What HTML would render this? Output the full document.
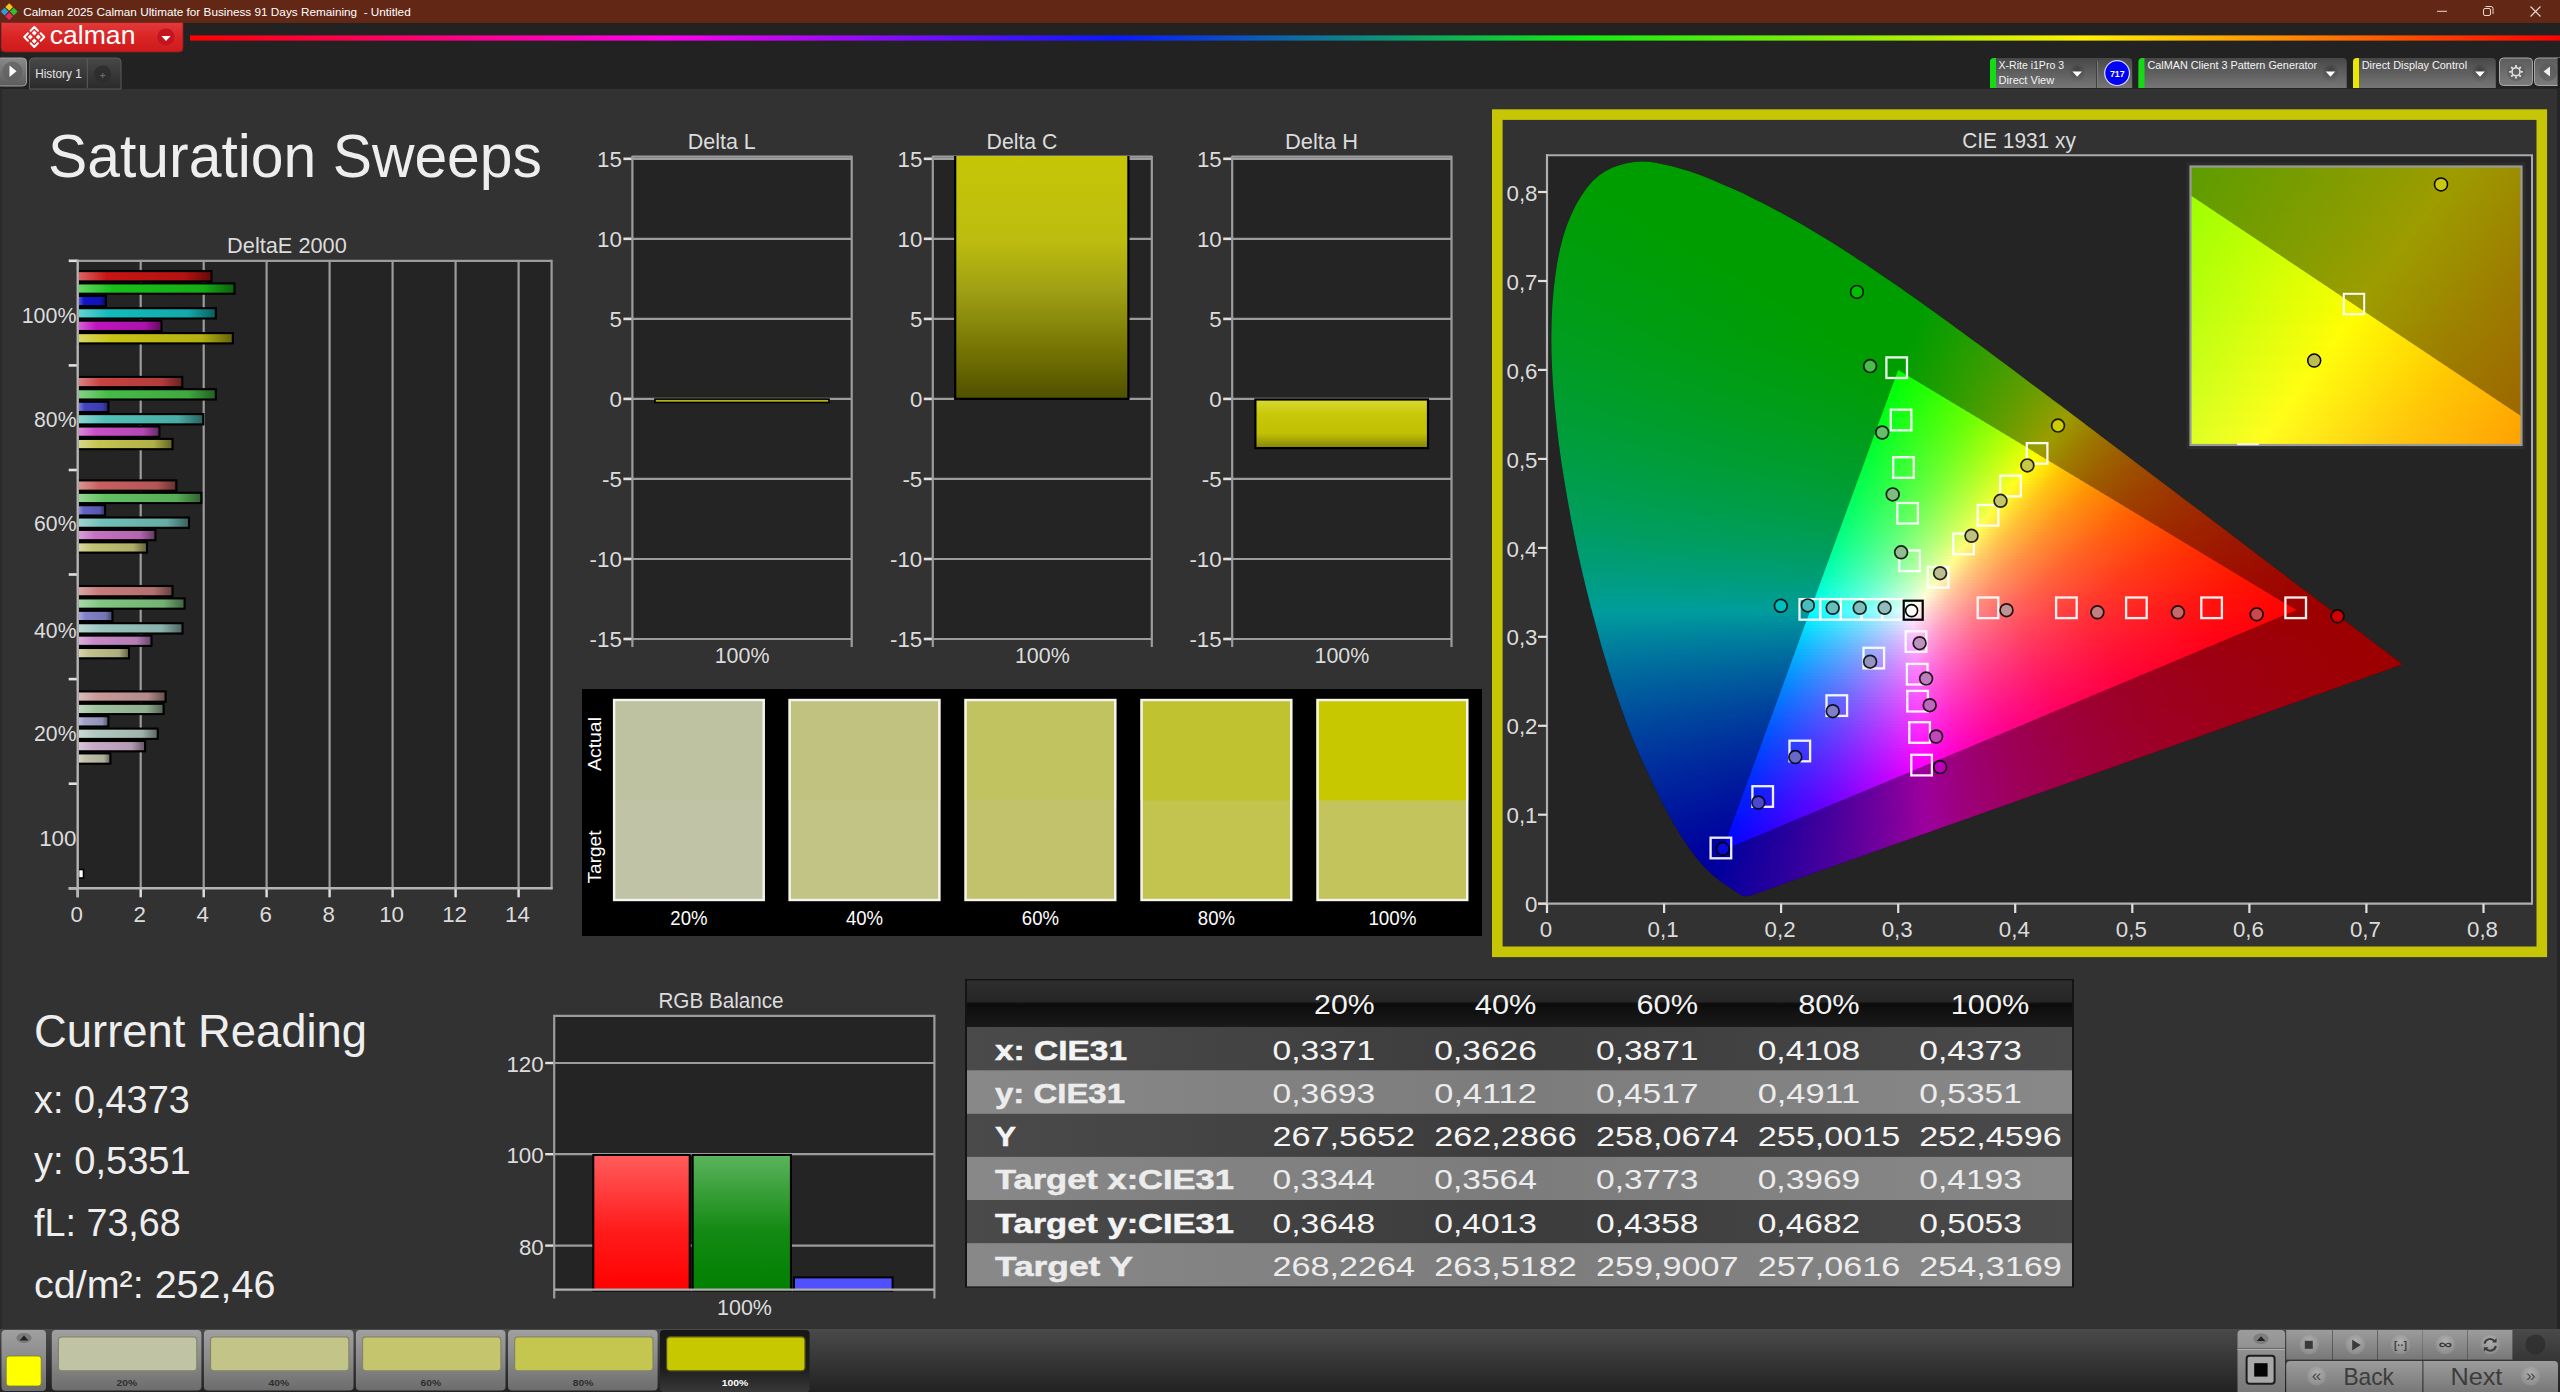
<!DOCTYPE html>
<html lang="en"><head><meta charset="utf-8"><title>Calman 2025 - Saturation Sweeps</title>
<style>
html,body{margin:0;padding:0;background:#323232;}
body{width:2560px;height:1392px;position:relative;overflow:hidden;font-family:"Liberation Sans",sans-serif;}
.abs{position:absolute;display:block;}
svg text{font-family:"Liberation Sans",sans-serif;}
</style></head><body>

<div class="abs" style="left:0;top:0;width:2560px;height:22.6px;background:#632716"></div>
<div class="abs" style="left:0;top:22.5px;width:2560px;height:66px;background:#222"></div>
<svg class="abs" style="left:0;top:0" width="2560" height="92" viewBox="0 0 2560 92">
<defs>
<linearGradient id="rb" x1="190" x2="2560" y1="0" y2="0" gradientUnits="userSpaceOnUse"><stop offset="0" stop-color="#ff0000"/><stop offset="0.2" stop-color="#ff00ee"/><stop offset="0.39" stop-color="#0a18ff"/><stop offset="0.588" stop-color="#10ec10"/><stop offset="0.8" stop-color="#fff000"/><stop offset="1" stop-color="#ff0000"/></linearGradient>
<linearGradient id="cb" x1="0" y1="0" x2="0" y2="1"><stop offset="0" stop-color="#e23a3a"/><stop offset="0.5" stop-color="#da2424"/><stop offset="1" stop-color="#cc1a1a"/></linearGradient>
<linearGradient id="gb" x1="0" y1="0" x2="0" y2="1"><stop offset="0" stop-color="#484848"/><stop offset="1" stop-color="#767676"/></linearGradient>
<linearGradient id="gb2" x1="0" y1="0" x2="0" y2="1"><stop offset="0" stop-color="#5c5c5c"/><stop offset="1" stop-color="#7c7c7c"/></linearGradient>
<linearGradient id="tb" x1="0" y1="0" x2="0" y2="1"><stop offset="0" stop-color="#484848"/><stop offset="1" stop-color="#2a2a2a"/></linearGradient>
<linearGradient id="pb" x1="0" y1="0" x2="0" y2="1"><stop offset="0" stop-color="#8a8a8a"/><stop offset="1" stop-color="#5c5c5c"/></linearGradient>
<radialGradient id="dc" cx="0.5" cy="0.3" r="0.7"><stop offset="0" stop-color="#3c3c3c"/><stop offset="1" stop-color="#6a6a6a"/></radialGradient>
</defs>
<rect x="6.5" y="4.3" width="5.4" height="5.4" fill="#f0c818" transform="rotate(45 9.2 7.0)"/>
<rect x="1.9" y="8.9" width="5.4" height="5.4" fill="#28a0e8" transform="rotate(45 4.6 11.6)"/>
<rect x="11.1" y="8.9" width="5.4" height="5.4" fill="#30c030" transform="rotate(45 13.8 11.6)"/>
<rect x="6.5" y="13.5" width="5.4" height="5.4" fill="#e82c60" transform="rotate(45 9.2 16.2)"/>
<text x="23.2" y="16.2" font-size="11.60" fill="#fff" textLength="387.5" lengthAdjust="spacingAndGlyphs" xml:space="preserve">Calman 2025 Calman Ultimate for Business 91 Days Remaining  - Untitled</text>
<path d="M2437 11.3h10" stroke="#e8d8d0" stroke-width="1" fill="none"/>
<rect x="2483.5" y="8.5" width="7" height="7" rx="1.5" fill="none" stroke="#e8d8d0" stroke-width="1"/><path d="M2485.5 6.5h5.5a2 2 0 0 1 2 2v5.5" fill="none" stroke="#e8d8d0" stroke-width="1"/>
<path d="M2530.5 6.5l10 10M2540.5 6.5l-10 10" stroke="#e8d8d0" stroke-width="1.1" fill="none"/>
<path d="M1 22.5H183V48a4 4 0 0 1-4 4H5a4 4 0 0 1-4-4Z" fill="url(#cb)" stroke="#8a2020" stroke-width="0.8"/>
<rect x="32.45" y="31.15" width="3.7" height="3.7" rx="0.5" fill="#fff" transform="rotate(45 34.30 33.00)"/>
<rect x="28.45" y="35.15" width="3.7" height="3.7" rx="0.5" fill="#fff" transform="rotate(45 30.30 37.00)"/>
<rect x="36.45" y="35.15" width="3.7" height="3.7" rx="0.5" fill="#fff" transform="rotate(45 38.30 37.00)"/>
<rect x="32.45" y="39.15" width="3.7" height="3.7" rx="0.5" fill="#fff" transform="rotate(45 34.30 41.00)"/>
<path d="M30.65 30.65l3.65 -3.65l3.65 3.65M30.65 43.35l3.65 3.65l3.65 -3.65M27.95 33.35l-3.65 3.65l3.65 3.65M40.65 33.35l3.65 3.65l-3.65 3.65" fill="none" stroke="#fff" stroke-width="2.1" stroke-linecap="round" stroke-linejoin="round"/>
<text x="49.8" y="44.3" font-size="25.50" fill="#fff" textLength="85.6" lengthAdjust="spacingAndGlyphs" style="letter-spacing:0">calman</text>
<circle cx="166" cy="37.2" r="9.2" fill="#c41420"/><circle cx="166" cy="37.2" r="9.2" fill="none" stroke="#e85050" stroke-width="0.6" opacity="0.5"/><path d="M161.4 36h9.2l-4.6 5z" fill="#fff"/>
<rect x="190" y="35.4" width="2370" height="5.2" fill="url(#rb)"/>
<rect x="-3" y="58" width="29.5" height="28" rx="4" fill="url(#pb)" stroke="#a0a0a0" stroke-width="1"/><circle cx="12.5" cy="71.5" r="10" fill="#606060" opacity="0.7"/><path d="M9.5 65.5v11.5l7-5.7z" fill="#fff"/>
<path d="M29.5 89V62a4 4 0 0 1 4-4H117a4 4 0 0 1 4 4V89Z" fill="url(#tb)" stroke="#5a5a5a" stroke-width="1"/><path d="M87.3 59V88" stroke="#5c5c5c" stroke-width="1"/>
<circle cx="102.6" cy="74" r="8.5" fill="#2c2c2c" opacity="0.8"/><path d="M100.2 75.6h5.2M102.8 73v5.2" stroke="#707070" stroke-width="1"/>
<text x="35.2" y="78.0" font-size="12.20" fill="#e4e4e4" textLength="46.6" lengthAdjust="spacingAndGlyphs">History 1</text>
<path d="M1990.0 88V62a4 4 0 0 1 4-4H2128.2a4 4 0 0 1 4 4V88Z" fill="url(#gb)"/><path d="M1990.0 88V62a4 4 0 0 1 4-4h2V88Z" fill="#14dc14"/>
<text x="1998.6" y="69.4" font-size="10.40" fill="#f4f4f4" textLength="65.4" lengthAdjust="spacingAndGlyphs">X-Rite i1Pro 3</text>
<text x="1998.6" y="83.8" font-size="10.40" fill="#f4f4f4" textLength="55.6" lengthAdjust="spacingAndGlyphs">Direct View</text>
<circle cx="2077.2" cy="72.8" r="9" fill="url(#dc)" opacity="0.85"/><path d="M2072.4 71.4h9.6l-4.8 5.4z" fill="#fff"/>
<path d="M2096.6 61V88" stroke="#3c3c3c" stroke-width="1"/><path d="M2097.6 61V88" stroke="#7c7c7c" stroke-width="1"/>
<circle cx="2117.1" cy="73.1" r="12.4" fill="#0000f8" stroke="#d8d8ff" stroke-width="1.2"/>
<text x="2109.9" y="76.6" font-size="9.60" fill="#fff" font-weight="bold" textLength="14.8" lengthAdjust="spacingAndGlyphs">717</text>
<path d="M2138.5 88V62a4 4 0 0 1 4-4H2342.7a4 4 0 0 1 4 4V88Z" fill="url(#gb)"/><path d="M2138.5 88V62a4 4 0 0 1 4-4h2V88Z" fill="#14dc14"/>
<text x="2147.4" y="69.4" font-size="10.40" fill="#f4f4f4" textLength="169.8" lengthAdjust="spacingAndGlyphs">CalMAN Client 3 Pattern Generator</text>
<circle cx="2330.5" cy="72.8" r="9" fill="url(#dc)" opacity="0.85"/><path d="M2325.7 71.4h9.6l-4.8 5.4z" fill="#fff"/>
<path d="M2353.0 88V62a4 4 0 0 1 4-4H2491.8a4 4 0 0 1 4 4V88Z" fill="url(#gb)"/><path d="M2353.0 88V62a4 4 0 0 1 4-4h2V88Z" fill="#e8e800"/>
<text x="2361.7" y="69.4" font-size="10.40" fill="#f4f4f4" textLength="105.4" lengthAdjust="spacingAndGlyphs">Direct Display Control</text>
<circle cx="2480.0" cy="72.8" r="9" fill="url(#dc)" opacity="0.85"/><path d="M2475.2 71.4h9.6l-4.8 5.4z" fill="#fff"/>
<rect x="2499.5" y="58" width="33" height="27.5" rx="4" fill="url(#gb2)" stroke="#a8a8a8" stroke-width="1"/>
<circle cx="2516" cy="72" r="9" fill="#585858" opacity="0.6"/>
<circle cx="2516" cy="71.8" r="4" fill="none" stroke="#e4e4e4" stroke-width="1.6"/>
<path d="M2520.60 71.80L2522.80 71.80" stroke="#e4e4e4" stroke-width="1.8"/>
<path d="M2519.25 75.05L2520.81 76.61" stroke="#e4e4e4" stroke-width="1.8"/>
<path d="M2516.00 76.40L2516.00 78.60" stroke="#e4e4e4" stroke-width="1.8"/>
<path d="M2512.75 75.05L2511.19 76.61" stroke="#e4e4e4" stroke-width="1.8"/>
<path d="M2511.40 71.80L2509.20 71.80" stroke="#e4e4e4" stroke-width="1.8"/>
<path d="M2512.75 68.55L2511.19 66.99" stroke="#e4e4e4" stroke-width="1.8"/>
<path d="M2516.00 67.20L2516.00 65.00" stroke="#e4e4e4" stroke-width="1.8"/>
<path d="M2519.25 68.55L2520.81 66.99" stroke="#e4e4e4" stroke-width="1.8"/>
<rect x="2534.5" y="58" width="33" height="27.5" rx="4" fill="url(#gb2)" stroke="#a8a8a8" stroke-width="1"/>
<circle cx="2548" cy="72" r="9" fill="#585858" opacity="0.6"/><path d="M2550 66.6v10l-6.4-5z" fill="#f0f0f0"/>
<rect x="2557.6" y="58" width="3" height="30" fill="#1c1c1c"/>
</svg>
<div class="abs" style="left:2556.5px;top:88px;width:3.5px;height:1242px;background:#252525"></div>
<div class="abs" style="left:0;top:88px;width:1.5px;height:1242px;background:#2a2a2a"></div>
<svg class="abs de" style="left:0px;top:225px" width="575" height="720" viewBox="0 225 575 720">
<defs>
<linearGradient id="db0"><stop offset="0" stop-color="#db6666"/><stop offset="0.22" stop-color="#c81414"/><stop offset="0.8" stop-color="#b41212"/><stop offset="1" stop-color="#640a0a"/></linearGradient>
<linearGradient id="db1"><stop offset="0" stop-color="#68d668"/><stop offset="0.22" stop-color="#18c018"/><stop offset="0.8" stop-color="#15ac15"/><stop offset="1" stop-color="#0c600c"/></linearGradient>
<linearGradient id="db2"><stop offset="0" stop-color="#6666db"/><stop offset="0.22" stop-color="#1414c8"/><stop offset="0.8" stop-color="#1212b4"/><stop offset="1" stop-color="#0a0a64"/></linearGradient>
<linearGradient id="db3"><stop offset="0" stop-color="#66d3d3"/><stop offset="0.22" stop-color="#14bcbc"/><stop offset="0.8" stop-color="#12a9a9"/><stop offset="1" stop-color="#0a5e5e"/></linearGradient>
<linearGradient id="db4"><stop offset="0" stop-color="#d666d6"/><stop offset="0.22" stop-color="#c014c0"/><stop offset="0.8" stop-color="#ac12ac"/><stop offset="1" stop-color="#600a60"/></linearGradient>
<linearGradient id="db5"><stop offset="0" stop-color="#dbd866"/><stop offset="0.22" stop-color="#c8c414"/><stop offset="0.8" stop-color="#b4b012"/><stop offset="1" stop-color="#64620a"/></linearGradient>
<linearGradient id="db6"><stop offset="0" stop-color="#db8484"/><stop offset="0.22" stop-color="#c84242"/><stop offset="0.8" stop-color="#b43b3b"/><stop offset="1" stop-color="#642121"/></linearGradient>
<linearGradient id="db7"><stop offset="0" stop-color="#86d386"/><stop offset="0.22" stop-color="#46bc46"/><stop offset="0.8" stop-color="#3fa93f"/><stop offset="1" stop-color="#235e23"/></linearGradient>
<linearGradient id="db8"><stop offset="0" stop-color="#8585d8"/><stop offset="0.22" stop-color="#4444c4"/><stop offset="0.8" stop-color="#3d3db0"/><stop offset="1" stop-color="#222262"/></linearGradient>
<linearGradient id="db9"><stop offset="0" stop-color="#8ed6d0"/><stop offset="0.22" stop-color="#52c0b8"/><stop offset="0.8" stop-color="#49aca5"/><stop offset="1" stop-color="#29605c"/></linearGradient>
<linearGradient id="db10"><stop offset="0" stop-color="#db8ddb"/><stop offset="0.22" stop-color="#c850c8"/><stop offset="0.8" stop-color="#b448b4"/><stop offset="1" stop-color="#642864"/></linearGradient>
<linearGradient id="db11"><stop offset="0" stop-color="#d8d88d"/><stop offset="0.22" stop-color="#c4c450"/><stop offset="0.8" stop-color="#b0b048"/><stop offset="1" stop-color="#626228"/></linearGradient>
<linearGradient id="db12"><stop offset="0" stop-color="#db9797"/><stop offset="0.22" stop-color="#c86060"/><stop offset="0.8" stop-color="#b45656"/><stop offset="1" stop-color="#643030"/></linearGradient>
<linearGradient id="db13"><stop offset="0" stop-color="#98d698"/><stop offset="0.22" stop-color="#62c062"/><stop offset="0.8" stop-color="#58ac58"/><stop offset="1" stop-color="#316031"/></linearGradient>
<linearGradient id="db14"><stop offset="0" stop-color="#9898d8"/><stop offset="0.22" stop-color="#6262c4"/><stop offset="0.8" stop-color="#5858b0"/><stop offset="1" stop-color="#313162"/></linearGradient>
<linearGradient id="db15"><stop offset="0" stop-color="#a3d6d0"/><stop offset="0.22" stop-color="#72c0b8"/><stop offset="0.8" stop-color="#66aca5"/><stop offset="1" stop-color="#39605c"/></linearGradient>
<linearGradient id="db16"><stop offset="0" stop-color="#d9a3d7"/><stop offset="0.22" stop-color="#c672c2"/><stop offset="0.8" stop-color="#b266ae"/><stop offset="1" stop-color="#633961"/></linearGradient>
<linearGradient id="db17"><stop offset="0" stop-color="#d7d7a3"/><stop offset="0.22" stop-color="#c2c272"/><stop offset="0.8" stop-color="#aeae66"/><stop offset="1" stop-color="#616139"/></linearGradient>
<linearGradient id="db18"><stop offset="0" stop-color="#dba9a9"/><stop offset="0.22" stop-color="#c87c7c"/><stop offset="0.8" stop-color="#b46f6f"/><stop offset="1" stop-color="#643e3e"/></linearGradient>
<linearGradient id="db19"><stop offset="0" stop-color="#acd9ac"/><stop offset="0.22" stop-color="#80c680"/><stop offset="0.8" stop-color="#73b273"/><stop offset="1" stop-color="#406340"/></linearGradient>
<linearGradient id="db20"><stop offset="0" stop-color="#adaddb"/><stop offset="0.22" stop-color="#8282c8"/><stop offset="0.8" stop-color="#7575b4"/><stop offset="1" stop-color="#414164"/></linearGradient>
<linearGradient id="db21"><stop offset="0" stop-color="#bdd9d6"/><stop offset="0.22" stop-color="#9ac6c0"/><stop offset="0.8" stop-color="#8ab2ac"/><stop offset="1" stop-color="#4d6360"/></linearGradient>
<linearGradient id="db22"><stop offset="0" stop-color="#dbb2db"/><stop offset="0.22" stop-color="#c88ac8"/><stop offset="0.8" stop-color="#b47cb4"/><stop offset="1" stop-color="#644564"/></linearGradient>
<linearGradient id="db23"><stop offset="0" stop-color="#d7d7b4"/><stop offset="0.22" stop-color="#c2c28c"/><stop offset="0.8" stop-color="#aeae7e"/><stop offset="1" stop-color="#616146"/></linearGradient>
<linearGradient id="db24"><stop offset="0" stop-color="#dbbdbd"/><stop offset="0.22" stop-color="#c89a9a"/><stop offset="0.8" stop-color="#b48a8a"/><stop offset="1" stop-color="#644d4d"/></linearGradient>
<linearGradient id="db25"><stop offset="0" stop-color="#c1d7c1"/><stop offset="0.22" stop-color="#a0c2a0"/><stop offset="0.8" stop-color="#90ae90"/><stop offset="1" stop-color="#506150"/></linearGradient>
<linearGradient id="db26"><stop offset="0" stop-color="#c2c2db"/><stop offset="0.22" stop-color="#a2a2c8"/><stop offset="0.8" stop-color="#9191b4"/><stop offset="1" stop-color="#515164"/></linearGradient>
<linearGradient id="db27"><stop offset="0" stop-color="#ccdbd7"/><stop offset="0.22" stop-color="#b2c8c2"/><stop offset="0.8" stop-color="#a0b4ae"/><stop offset="1" stop-color="#596461"/></linearGradient>
<linearGradient id="db28"><stop offset="0" stop-color="#dbc7db"/><stop offset="0.22" stop-color="#c8aac8"/><stop offset="0.8" stop-color="#b499b4"/><stop offset="1" stop-color="#645564"/></linearGradient>
<linearGradient id="db29"><stop offset="0" stop-color="#d7d7c7"/><stop offset="0.22" stop-color="#c2c2aa"/><stop offset="0.8" stop-color="#aeae99"/><stop offset="1" stop-color="#616155"/></linearGradient>
</defs>
<rect x="77.7" y="260.8" width="473.9" height="627.5" fill="#242424" />
<line x1="140.7" y1="260.8" x2="140.7" y2="888.3" stroke="#9c9c9c" stroke-width="2.2"/>
<line x1="203.7" y1="260.8" x2="203.7" y2="888.3" stroke="#9c9c9c" stroke-width="2.2"/>
<line x1="266.6" y1="260.8" x2="266.6" y2="888.3" stroke="#9c9c9c" stroke-width="2.2"/>
<line x1="329.6" y1="260.8" x2="329.6" y2="888.3" stroke="#9c9c9c" stroke-width="2.2"/>
<line x1="392.6" y1="260.8" x2="392.6" y2="888.3" stroke="#9c9c9c" stroke-width="2.2"/>
<line x1="455.6" y1="260.8" x2="455.6" y2="888.3" stroke="#9c9c9c" stroke-width="2.2"/>
<line x1="518.6" y1="260.8" x2="518.6" y2="888.3" stroke="#9c9c9c" stroke-width="2.2"/>
<line x1="77.7" y1="260.8" x2="551.6" y2="260.8" stroke="#9c9c9c" stroke-width="2.2"/>
<line x1="551.6" y1="259.8" x2="551.6" y2="889.3" stroke="#9c9c9c" stroke-width="2.2"/>
<line x1="68.7" y1="260.8" x2="77.7" y2="260.8" stroke="#e0e0e0" stroke-width="2.6"/>
<line x1="68.7" y1="365.4" x2="77.7" y2="365.4" stroke="#e0e0e0" stroke-width="2.6"/>
<line x1="68.7" y1="470.0" x2="77.7" y2="470.0" stroke="#e0e0e0" stroke-width="2.6"/>
<line x1="68.7" y1="574.5" x2="77.7" y2="574.5" stroke="#e0e0e0" stroke-width="2.6"/>
<line x1="68.7" y1="679.1" x2="77.7" y2="679.1" stroke="#e0e0e0" stroke-width="2.6"/>
<line x1="68.7" y1="783.7" x2="77.7" y2="783.7" stroke="#e0e0e0" stroke-width="2.6"/>
<line x1="68.7" y1="888.3" x2="77.7" y2="888.3" stroke="#e0e0e0" stroke-width="2.6"/>
<line x1="77.7" y1="888.3" x2="77.7" y2="897.3" stroke="#e0e0e0" stroke-width="2.4"/>
<text x="70.5" y="921.5" font-size="22.93" fill="#dcdcdc" textLength="12.4" lengthAdjust="spacingAndGlyphs">0</text>
<line x1="140.7" y1="888.3" x2="140.7" y2="897.3" stroke="#e0e0e0" stroke-width="2.4"/>
<text x="133.5" y="921.5" font-size="22.93" fill="#dcdcdc" textLength="12.4" lengthAdjust="spacingAndGlyphs">2</text>
<line x1="203.7" y1="888.3" x2="203.7" y2="897.3" stroke="#e0e0e0" stroke-width="2.4"/>
<text x="196.5" y="921.5" font-size="22.93" fill="#dcdcdc" textLength="12.4" lengthAdjust="spacingAndGlyphs">4</text>
<line x1="266.6" y1="888.3" x2="266.6" y2="897.3" stroke="#e0e0e0" stroke-width="2.4"/>
<text x="259.4" y="921.5" font-size="22.93" fill="#dcdcdc" textLength="12.4" lengthAdjust="spacingAndGlyphs">6</text>
<line x1="329.6" y1="888.3" x2="329.6" y2="897.3" stroke="#e0e0e0" stroke-width="2.4"/>
<text x="322.4" y="921.5" font-size="22.93" fill="#dcdcdc" textLength="12.4" lengthAdjust="spacingAndGlyphs">8</text>
<line x1="392.6" y1="888.3" x2="392.6" y2="897.3" stroke="#e0e0e0" stroke-width="2.4"/>
<text x="379.2" y="921.5" font-size="22.93" fill="#dcdcdc" textLength="24.8" lengthAdjust="spacingAndGlyphs">10</text>
<line x1="455.6" y1="888.3" x2="455.6" y2="897.3" stroke="#e0e0e0" stroke-width="2.4"/>
<text x="442.2" y="921.5" font-size="22.93" fill="#dcdcdc" textLength="24.8" lengthAdjust="spacingAndGlyphs">12</text>
<line x1="518.6" y1="888.3" x2="518.6" y2="897.3" stroke="#e0e0e0" stroke-width="2.4"/>
<text x="505.1" y="921.5" font-size="22.93" fill="#dcdcdc" textLength="24.8" lengthAdjust="spacingAndGlyphs">14</text>
<rect x="77.7" y="271.1" width="133.8" height="10.3" fill="url(#db0)" stroke="#000" stroke-width="2.1"/>
<rect x="77.7" y="283.4" width="156.8" height="10.3" fill="url(#db1)" stroke="#000" stroke-width="2.1"/>
<rect x="77.7" y="295.9" width="28.2" height="10.3" fill="url(#db2)" stroke="#000" stroke-width="2.1"/>
<rect x="77.7" y="308.2" width="138.1" height="10.3" fill="url(#db3)" stroke="#000" stroke-width="2.1"/>
<rect x="77.7" y="320.7" width="83.8" height="10.3" fill="url(#db4)" stroke="#000" stroke-width="2.1"/>
<rect x="77.7" y="333.1" width="155.1" height="10.3" fill="url(#db5)" stroke="#000" stroke-width="2.1"/>
<rect x="77.7" y="376.9" width="104.6" height="10.3" fill="url(#db6)" stroke="#000" stroke-width="2.1"/>
<rect x="77.7" y="389.2" width="138.1" height="10.3" fill="url(#db7)" stroke="#000" stroke-width="2.1"/>
<rect x="77.7" y="401.7" width="30.7" height="10.3" fill="url(#db8)" stroke="#000" stroke-width="2.1"/>
<rect x="77.7" y="414.1" width="125.6" height="10.3" fill="url(#db9)" stroke="#000" stroke-width="2.1"/>
<rect x="77.7" y="426.5" width="81.7" height="10.3" fill="url(#db10)" stroke="#000" stroke-width="2.1"/>
<rect x="77.7" y="438.9" width="94.8" height="10.3" fill="url(#db11)" stroke="#000" stroke-width="2.1"/>
<rect x="77.7" y="480.4" width="98.6" height="10.3" fill="url(#db12)" stroke="#000" stroke-width="2.1"/>
<rect x="77.7" y="492.8" width="123.6" height="10.3" fill="url(#db13)" stroke="#000" stroke-width="2.1"/>
<rect x="77.7" y="505.2" width="27.4" height="10.3" fill="url(#db14)" stroke="#000" stroke-width="2.1"/>
<rect x="77.7" y="517.5" width="111.3" height="10.3" fill="url(#db15)" stroke="#000" stroke-width="2.1"/>
<rect x="77.7" y="529.9" width="77.7" height="10.3" fill="url(#db16)" stroke="#000" stroke-width="2.1"/>
<rect x="77.7" y="542.3" width="69.3" height="10.3" fill="url(#db17)" stroke="#000" stroke-width="2.1"/>
<rect x="77.7" y="586.0" width="94.8" height="10.3" fill="url(#db18)" stroke="#000" stroke-width="2.1"/>
<rect x="77.7" y="598.4" width="106.9" height="10.3" fill="url(#db19)" stroke="#000" stroke-width="2.1"/>
<rect x="77.7" y="610.8" width="34.8" height="10.3" fill="url(#db20)" stroke="#000" stroke-width="2.1"/>
<rect x="77.7" y="623.2" width="104.8" height="10.3" fill="url(#db21)" stroke="#000" stroke-width="2.1"/>
<rect x="77.7" y="635.6" width="73.8" height="10.3" fill="url(#db22)" stroke="#000" stroke-width="2.1"/>
<rect x="77.7" y="648.0" width="51.3" height="10.3" fill="url(#db23)" stroke="#000" stroke-width="2.1"/>
<rect x="77.7" y="691.4" width="87.9" height="10.3" fill="url(#db24)" stroke="#000" stroke-width="2.1"/>
<rect x="77.7" y="703.8" width="85.9" height="10.3" fill="url(#db25)" stroke="#000" stroke-width="2.1"/>
<rect x="77.7" y="716.2" width="30.7" height="10.3" fill="url(#db26)" stroke="#000" stroke-width="2.1"/>
<rect x="77.7" y="728.6" width="80.1" height="10.3" fill="url(#db27)" stroke="#000" stroke-width="2.1"/>
<rect x="77.7" y="741.0" width="67.4" height="10.3" fill="url(#db28)" stroke="#000" stroke-width="2.1"/>
<rect x="77.7" y="753.4" width="32.7" height="10.3" fill="url(#db29)" stroke="#000" stroke-width="2.1"/>
<rect x="78.5" y="869.5" width="5" height="8.5" fill="#fff" stroke="#000" stroke-width="1.6"/>
<line x1="77.7" y1="259.8" x2="77.7" y2="897.3" stroke="#b4b4b4" stroke-width="2.4"/>
<line x1="68.7" y1="888.3" x2="552.6" y2="888.3" stroke="#b4b4b4" stroke-width="2.4"/>
<text x="21.7" y="322.8" font-size="22.93" fill="#dcdcdc" textLength="54.8" lengthAdjust="spacingAndGlyphs">100%</text>
<text x="34.1" y="427.0" font-size="22.93" fill="#dcdcdc" textLength="42.4" lengthAdjust="spacingAndGlyphs">80%</text>
<text x="34.1" y="531.4" font-size="22.93" fill="#dcdcdc" textLength="42.4" lengthAdjust="spacingAndGlyphs">60%</text>
<text x="34.1" y="637.6" font-size="22.93" fill="#dcdcdc" textLength="42.4" lengthAdjust="spacingAndGlyphs">40%</text>
<text x="34.1" y="740.6" font-size="22.93" fill="#dcdcdc" textLength="42.4" lengthAdjust="spacingAndGlyphs">20%</text>
<text x="39.2" y="846.0" font-size="22.93" fill="#dcdcdc" textLength="37.3" lengthAdjust="spacingAndGlyphs">100</text>
<text x="227.1" y="252.6" font-size="22.34" fill="#dcdcdc" textLength="119.7" lengthAdjust="spacingAndGlyphs">DeltaE 2000</text>
</svg>
<svg class="abs lch" style="left:575px;top:120px" width="910" height="560" viewBox="575 120 910 560">
<defs><linearGradient id="gC" x1="0" y1="0" x2="0" y2="1"><stop offset="0" stop-color="#c6c606"/><stop offset="0.35" stop-color="#bcbc10"/><stop offset="0.55" stop-color="#a0a014"/><stop offset="0.8" stop-color="#747404"/><stop offset="1" stop-color="#505000"/></linearGradient><linearGradient id="gH" x1="0" y1="0" x2="0" y2="1"><stop offset="0" stop-color="#d8d838"/><stop offset="0.3" stop-color="#c8c808"/><stop offset="0.7" stop-color="#c0c004"/><stop offset="1" stop-color="#84840a"/></linearGradient></defs>
<rect x="632.4" y="158.8" width="219.3" height="480.2" fill="#242424" />
<line x1="632.4" y1="158.8" x2="851.7" y2="158.8" stroke="#9c9c9c" stroke-width="2.2"/>
<line x1="623.4" y1="158.8" x2="632.4" y2="158.8" stroke="#e0e0e0" stroke-width="2.6"/>
<text x="597.1" y="167.2" font-size="22.93" fill="#dcdcdc" textLength="24.8" lengthAdjust="spacingAndGlyphs">15</text>
<line x1="632.4" y1="238.8" x2="851.7" y2="238.8" stroke="#9c9c9c" stroke-width="2.2"/>
<line x1="623.4" y1="238.8" x2="632.4" y2="238.8" stroke="#e0e0e0" stroke-width="2.6"/>
<text x="597.1" y="247.2" font-size="22.93" fill="#dcdcdc" textLength="24.8" lengthAdjust="spacingAndGlyphs">10</text>
<line x1="632.4" y1="318.9" x2="851.7" y2="318.9" stroke="#9c9c9c" stroke-width="2.2"/>
<line x1="623.4" y1="318.9" x2="632.4" y2="318.9" stroke="#e0e0e0" stroke-width="2.6"/>
<text x="609.5" y="327.3" font-size="22.93" fill="#dcdcdc" textLength="12.4" lengthAdjust="spacingAndGlyphs">5</text>
<line x1="632.4" y1="398.9" x2="851.7" y2="398.9" stroke="#9c9c9c" stroke-width="2.2"/>
<line x1="623.4" y1="398.9" x2="632.4" y2="398.9" stroke="#e0e0e0" stroke-width="2.6"/>
<text x="609.5" y="407.3" font-size="22.93" fill="#dcdcdc" textLength="12.4" lengthAdjust="spacingAndGlyphs">0</text>
<line x1="632.4" y1="478.9" x2="851.7" y2="478.9" stroke="#9c9c9c" stroke-width="2.2"/>
<line x1="623.4" y1="478.9" x2="632.4" y2="478.9" stroke="#e0e0e0" stroke-width="2.6"/>
<text x="602.0" y="487.3" font-size="22.93" fill="#dcdcdc" textLength="19.9" lengthAdjust="spacingAndGlyphs">-5</text>
<line x1="632.4" y1="559.0" x2="851.7" y2="559.0" stroke="#9c9c9c" stroke-width="2.2"/>
<line x1="623.4" y1="559.0" x2="632.4" y2="559.0" stroke="#e0e0e0" stroke-width="2.6"/>
<text x="589.6" y="567.4" font-size="22.93" fill="#dcdcdc" textLength="32.3" lengthAdjust="spacingAndGlyphs">-10</text>
<line x1="632.4" y1="639.0" x2="851.7" y2="639.0" stroke="#9c9c9c" stroke-width="2.2"/>
<line x1="623.4" y1="639.0" x2="632.4" y2="639.0" stroke="#e0e0e0" stroke-width="2.6"/>
<text x="589.6" y="647.4" font-size="22.93" fill="#dcdcdc" textLength="32.3" lengthAdjust="spacingAndGlyphs">-15</text>
<line x1="632.4" y1="156.6" x2="851.7" y2="156.6" stroke="#9c9c9c" stroke-width="2.2"/>
<line x1="632.4" y1="155.8" x2="632.4" y2="647.0" stroke="#9c9c9c" stroke-width="2.2"/>
<line x1="851.7" y1="155.8" x2="851.7" y2="647.0" stroke="#9c9c9c" stroke-width="2.2"/>
<text x="687.7" y="149.2" font-size="22.25" fill="#dcdcdc" textLength="68.1" lengthAdjust="spacingAndGlyphs">Delta L</text>
<text x="714.7" y="663.0" font-size="22.93" fill="#dcdcdc" textLength="54.8" lengthAdjust="spacingAndGlyphs">100%</text>
<rect x="932.8" y="158.8" width="219.0" height="480.2" fill="#242424" />
<line x1="932.8" y1="158.8" x2="1151.8" y2="158.8" stroke="#9c9c9c" stroke-width="2.2"/>
<line x1="923.8" y1="158.8" x2="932.8" y2="158.8" stroke="#e0e0e0" stroke-width="2.6"/>
<text x="897.5" y="167.2" font-size="22.93" fill="#dcdcdc" textLength="24.8" lengthAdjust="spacingAndGlyphs">15</text>
<line x1="932.8" y1="238.8" x2="1151.8" y2="238.8" stroke="#9c9c9c" stroke-width="2.2"/>
<line x1="923.8" y1="238.8" x2="932.8" y2="238.8" stroke="#e0e0e0" stroke-width="2.6"/>
<text x="897.5" y="247.2" font-size="22.93" fill="#dcdcdc" textLength="24.8" lengthAdjust="spacingAndGlyphs">10</text>
<line x1="932.8" y1="318.9" x2="1151.8" y2="318.9" stroke="#9c9c9c" stroke-width="2.2"/>
<line x1="923.8" y1="318.9" x2="932.8" y2="318.9" stroke="#e0e0e0" stroke-width="2.6"/>
<text x="909.9" y="327.3" font-size="22.93" fill="#dcdcdc" textLength="12.4" lengthAdjust="spacingAndGlyphs">5</text>
<line x1="932.8" y1="398.9" x2="1151.8" y2="398.9" stroke="#9c9c9c" stroke-width="2.2"/>
<line x1="923.8" y1="398.9" x2="932.8" y2="398.9" stroke="#e0e0e0" stroke-width="2.6"/>
<text x="909.9" y="407.3" font-size="22.93" fill="#dcdcdc" textLength="12.4" lengthAdjust="spacingAndGlyphs">0</text>
<line x1="932.8" y1="478.9" x2="1151.8" y2="478.9" stroke="#9c9c9c" stroke-width="2.2"/>
<line x1="923.8" y1="478.9" x2="932.8" y2="478.9" stroke="#e0e0e0" stroke-width="2.6"/>
<text x="902.4" y="487.3" font-size="22.93" fill="#dcdcdc" textLength="19.9" lengthAdjust="spacingAndGlyphs">-5</text>
<line x1="932.8" y1="559.0" x2="1151.8" y2="559.0" stroke="#9c9c9c" stroke-width="2.2"/>
<line x1="923.8" y1="559.0" x2="932.8" y2="559.0" stroke="#e0e0e0" stroke-width="2.6"/>
<text x="890.0" y="567.4" font-size="22.93" fill="#dcdcdc" textLength="32.3" lengthAdjust="spacingAndGlyphs">-10</text>
<line x1="932.8" y1="639.0" x2="1151.8" y2="639.0" stroke="#9c9c9c" stroke-width="2.2"/>
<line x1="923.8" y1="639.0" x2="932.8" y2="639.0" stroke="#e0e0e0" stroke-width="2.6"/>
<text x="890.0" y="647.4" font-size="22.93" fill="#dcdcdc" textLength="32.3" lengthAdjust="spacingAndGlyphs">-15</text>
<line x1="932.8" y1="156.6" x2="1151.8" y2="156.6" stroke="#9c9c9c" stroke-width="2.2"/>
<line x1="932.8" y1="155.8" x2="932.8" y2="647.0" stroke="#9c9c9c" stroke-width="2.2"/>
<line x1="1151.8" y1="155.8" x2="1151.8" y2="647.0" stroke="#9c9c9c" stroke-width="2.2"/>
<text x="986.6" y="149.2" font-size="22.25" fill="#dcdcdc" textLength="70.8" lengthAdjust="spacingAndGlyphs">Delta C</text>
<text x="1014.9" y="663.0" font-size="22.93" fill="#dcdcdc" textLength="54.8" lengthAdjust="spacingAndGlyphs">100%</text>
<rect x="1232.2" y="158.8" width="219.3" height="480.2" fill="#242424" />
<line x1="1232.2" y1="158.8" x2="1451.5" y2="158.8" stroke="#9c9c9c" stroke-width="2.2"/>
<line x1="1223.2" y1="158.8" x2="1232.2" y2="158.8" stroke="#e0e0e0" stroke-width="2.6"/>
<text x="1196.9" y="167.2" font-size="22.93" fill="#dcdcdc" textLength="24.8" lengthAdjust="spacingAndGlyphs">15</text>
<line x1="1232.2" y1="238.8" x2="1451.5" y2="238.8" stroke="#9c9c9c" stroke-width="2.2"/>
<line x1="1223.2" y1="238.8" x2="1232.2" y2="238.8" stroke="#e0e0e0" stroke-width="2.6"/>
<text x="1196.9" y="247.2" font-size="22.93" fill="#dcdcdc" textLength="24.8" lengthAdjust="spacingAndGlyphs">10</text>
<line x1="1232.2" y1="318.9" x2="1451.5" y2="318.9" stroke="#9c9c9c" stroke-width="2.2"/>
<line x1="1223.2" y1="318.9" x2="1232.2" y2="318.9" stroke="#e0e0e0" stroke-width="2.6"/>
<text x="1209.3" y="327.3" font-size="22.93" fill="#dcdcdc" textLength="12.4" lengthAdjust="spacingAndGlyphs">5</text>
<line x1="1232.2" y1="398.9" x2="1451.5" y2="398.9" stroke="#9c9c9c" stroke-width="2.2"/>
<line x1="1223.2" y1="398.9" x2="1232.2" y2="398.9" stroke="#e0e0e0" stroke-width="2.6"/>
<text x="1209.3" y="407.3" font-size="22.93" fill="#dcdcdc" textLength="12.4" lengthAdjust="spacingAndGlyphs">0</text>
<line x1="1232.2" y1="478.9" x2="1451.5" y2="478.9" stroke="#9c9c9c" stroke-width="2.2"/>
<line x1="1223.2" y1="478.9" x2="1232.2" y2="478.9" stroke="#e0e0e0" stroke-width="2.6"/>
<text x="1201.8" y="487.3" font-size="22.93" fill="#dcdcdc" textLength="19.9" lengthAdjust="spacingAndGlyphs">-5</text>
<line x1="1232.2" y1="559.0" x2="1451.5" y2="559.0" stroke="#9c9c9c" stroke-width="2.2"/>
<line x1="1223.2" y1="559.0" x2="1232.2" y2="559.0" stroke="#e0e0e0" stroke-width="2.6"/>
<text x="1189.4" y="567.4" font-size="22.93" fill="#dcdcdc" textLength="32.3" lengthAdjust="spacingAndGlyphs">-10</text>
<line x1="1232.2" y1="639.0" x2="1451.5" y2="639.0" stroke="#9c9c9c" stroke-width="2.2"/>
<line x1="1223.2" y1="639.0" x2="1232.2" y2="639.0" stroke="#e0e0e0" stroke-width="2.6"/>
<text x="1189.4" y="647.4" font-size="22.93" fill="#dcdcdc" textLength="32.3" lengthAdjust="spacingAndGlyphs">-15</text>
<line x1="1232.2" y1="156.6" x2="1451.5" y2="156.6" stroke="#9c9c9c" stroke-width="2.2"/>
<line x1="1232.2" y1="155.8" x2="1232.2" y2="647.0" stroke="#9c9c9c" stroke-width="2.2"/>
<line x1="1451.5" y1="155.8" x2="1451.5" y2="647.0" stroke="#9c9c9c" stroke-width="2.2"/>
<text x="1285.0" y="149.2" font-size="22.25" fill="#dcdcdc" textLength="73.0" lengthAdjust="spacingAndGlyphs">Delta H</text>
<text x="1314.5" y="663.0" font-size="22.93" fill="#dcdcdc" textLength="54.8" lengthAdjust="spacingAndGlyphs">100%</text>
<rect x="655" y="399.1" width="174" height="3.4" fill="#b4b414" stroke="#000" stroke-width="1.6"/>
<path d="M955.2 156.0V398.9H1128.4V156.0" fill="url(#gC)" stroke="#000" stroke-width="2.2"/>
<rect x="1255.4" y="399.5" width="172.6" height="48.6" fill="url(#gH)" stroke="#000" stroke-width="2.2"/>
</svg>
<svg class="abs sw" style="left:575px;top:682px" width="915" height="262" viewBox="575 682 915 262">
<rect x="582.0" y="689.0" width="900.0" height="247.0" fill="#000" />
<rect x="613.1" y="699.0" width="151.6" height="202.0" fill="#c0c3a5" />
<rect x="613.1" y="699.0" width="151.6" height="101.5" fill="#bfc2a0" />
<rect x="614.1" y="700" width="149.6" height="200" fill="none" stroke="#f4f4ee" stroke-width="2.4"/>
<text x="670.3" y="924.6" font-size="20.12" fill="#fff" textLength="37.2" lengthAdjust="spacingAndGlyphs">20%</text>
<rect x="788.7" y="699.0" width="151.6" height="202.0" fill="#c2c486" />
<rect x="788.7" y="699.0" width="151.6" height="101.5" fill="#c1c280" />
<rect x="789.7" y="700" width="149.6" height="200" fill="none" stroke="#f4f4ee" stroke-width="2.4"/>
<text x="845.9" y="924.6" font-size="20.12" fill="#fff" textLength="37.2" lengthAdjust="spacingAndGlyphs">40%</text>
<rect x="964.6" y="699.0" width="151.6" height="202.0" fill="#c2c26c" />
<rect x="964.6" y="699.0" width="151.6" height="101.5" fill="#c1c260" />
<rect x="965.6" y="700" width="149.6" height="200" fill="none" stroke="#f4f4ee" stroke-width="2.4"/>
<text x="1021.8" y="924.6" font-size="20.12" fill="#fff" textLength="37.2" lengthAdjust="spacingAndGlyphs">60%</text>
<rect x="1140.6" y="699.0" width="151.6" height="202.0" fill="#c3c350" />
<rect x="1140.6" y="699.0" width="151.6" height="101.5" fill="#c0c230" />
<rect x="1141.6" y="700" width="149.6" height="200" fill="none" stroke="#f4f4ee" stroke-width="2.4"/>
<text x="1197.8" y="924.6" font-size="20.12" fill="#fff" textLength="37.2" lengthAdjust="spacingAndGlyphs">80%</text>
<rect x="1316.6" y="699.0" width="151.6" height="202.0" fill="#c4c45c" />
<rect x="1316.6" y="699.0" width="151.6" height="101.5" fill="#c8c800" />
<rect x="1317.6" y="700" width="149.6" height="200" fill="none" stroke="#f4f4ee" stroke-width="2.4"/>
<text x="1368.4" y="924.6" font-size="20.12" fill="#fff" textLength="48.1" lengthAdjust="spacingAndGlyphs">100%</text>
<text x="-27.0" y="0.0" font-size="19.15" fill="#fff" textLength="54.0" lengthAdjust="spacingAndGlyphs" transform="translate(600.6 744) rotate(-90)">Actual</text>
<text x="-26.4" y="0.0" font-size="19.15" fill="#fff" textLength="52.8" lengthAdjust="spacingAndGlyphs" transform="translate(600.6 857) rotate(-90)">Target</text>
</svg>
<svg class="abs cie" style="left:1488px;top:105px" width="1066" height="858" viewBox="1488 105 1066 858">
<defs><linearGradient id="c0" gradientUnits="userSpaceOnUse" x1="1622" x2="1663" y1="0" y2="0"><stop offset="0" stop-color="#00ff00"/><stop offset="1" stop-color="#00ff00"/></linearGradient><linearGradient id="c1" gradientUnits="userSpaceOnUse" x1="1611" x2="1677" y1="0" y2="0"><stop offset="0" stop-color="#00ff00"/><stop offset="0.9848" stop-color="#00ff00"/><stop offset="1" stop-color="#00ff00"/></linearGradient><linearGradient id="c2" gradientUnits="userSpaceOnUse" x1="1603" x2="1688" y1="0" y2="0"><stop offset="0" stop-color="#00ff00"/><stop offset="1" stop-color="#00ff00"/></linearGradient><linearGradient id="c3" gradientUnits="userSpaceOnUse" x1="1598" x2="1698" y1="0" y2="0"><stop offset="0" stop-color="#00ff00"/><stop offset="0.97" stop-color="#00ff00"/><stop offset="0.98" stop-color="#00ff00"/><stop offset="0.99" stop-color="#00ff00"/><stop offset="1" stop-color="#00ff00"/></linearGradient><linearGradient id="c4" gradientUnits="userSpaceOnUse" x1="1593" x2="1706" y1="0" y2="0"><stop offset="0" stop-color="#00ff00"/><stop offset="1" stop-color="#00ff00"/></linearGradient><linearGradient id="c5" gradientUnits="userSpaceOnUse" x1="1590" x2="1714" y1="0" y2="0"><stop offset="0" stop-color="#00ff00"/><stop offset="0.9758" stop-color="#00ff00"/><stop offset="0.9839" stop-color="#00ff00"/><stop offset="0.9919" stop-color="#00ff00"/><stop offset="1" stop-color="#00ff00"/></linearGradient><linearGradient id="c6" gradientUnits="userSpaceOnUse" x1="1586" x2="1721" y1="0" y2="0"><stop offset="0" stop-color="#00ff00"/><stop offset="0.9852" stop-color="#00ff00"/><stop offset="0.9926" stop-color="#00ff00"/><stop offset="1" stop-color="#00ff00"/></linearGradient><linearGradient id="c7" gradientUnits="userSpaceOnUse" x1="1584" x2="1728" y1="0" y2="0"><stop offset="0" stop-color="#00ff01"/><stop offset="0.9792" stop-color="#00ff00"/><stop offset="0.9861" stop-color="#00ff00"/><stop offset="0.9931" stop-color="#00ff00"/><stop offset="1" stop-color="#00ff00"/></linearGradient><linearGradient id="c8" gradientUnits="userSpaceOnUse" x1="1581" x2="1735" y1="0" y2="0"><stop offset="0" stop-color="#00ff02"/><stop offset="0.9935" stop-color="#00ff00"/><stop offset="1" stop-color="#00ff00"/></linearGradient><linearGradient id="c9" gradientUnits="userSpaceOnUse" x1="1579" x2="1742" y1="0" y2="0"><stop offset="0" stop-color="#00ff03"/><stop offset="0.9877" stop-color="#00ff00"/><stop offset="0.9939" stop-color="#00ff00"/><stop offset="1" stop-color="#00ff00"/></linearGradient><linearGradient id="c10" gradientUnits="userSpaceOnUse" x1="1577" x2="1748" y1="0" y2="0"><stop offset="0" stop-color="#00ff04"/><stop offset="0.7544" stop-color="#00ff00"/><stop offset="0.9942" stop-color="#00ff00"/><stop offset="1" stop-color="#00ff00"/></linearGradient><linearGradient id="c11" gradientUnits="userSpaceOnUse" x1="1575" x2="1755" y1="0" y2="0"><stop offset="0" stop-color="#00ff05"/><stop offset="0.4722" stop-color="#00ff00"/><stop offset="0.9889" stop-color="#00ff00"/><stop offset="0.9944" stop-color="#00ff00"/><stop offset="1" stop-color="#00ff00"/></linearGradient><linearGradient id="c12" gradientUnits="userSpaceOnUse" x1="1573" x2="1761" y1="0" y2="0"><stop offset="0" stop-color="#00ff06"/><stop offset="0.4309" stop-color="#00ff00"/><stop offset="0.9894" stop-color="#00ff00"/><stop offset="0.9947" stop-color="#00ff00"/><stop offset="1" stop-color="#00ff00"/></linearGradient><linearGradient id="c13" gradientUnits="userSpaceOnUse" x1="1571" x2="1767" y1="0" y2="0"><stop offset="0" stop-color="#00ff07"/><stop offset="0.4133" stop-color="#00ff00"/><stop offset="0.9898" stop-color="#00ff00"/><stop offset="0.9949" stop-color="#00ff00"/><stop offset="1" stop-color="#00ff00"/></linearGradient><linearGradient id="c14" gradientUnits="userSpaceOnUse" x1="1569" x2="1773" y1="0" y2="0"><stop offset="0" stop-color="#00ff08"/><stop offset="0.4167" stop-color="#00ff00"/><stop offset="0.9902" stop-color="#00ff00"/><stop offset="0.9951" stop-color="#00ff00"/><stop offset="1" stop-color="#00ff00"/></linearGradient><linearGradient id="c15" gradientUnits="userSpaceOnUse" x1="1568" x2="1779" y1="0" y2="0"><stop offset="0" stop-color="#00ff09"/><stop offset="0.4218" stop-color="#00ff00"/><stop offset="0.9953" stop-color="#00ff00"/><stop offset="1" stop-color="#00ff00"/></linearGradient><linearGradient id="c16" gradientUnits="userSpaceOnUse" x1="1566" x2="1784" y1="0" y2="0"><stop offset="0" stop-color="#00ff0a"/><stop offset="0.4266" stop-color="#00ff00"/><stop offset="1" stop-color="#00ff00"/></linearGradient><linearGradient id="c17" gradientUnits="userSpaceOnUse" x1="1565" x2="1790" y1="0" y2="0"><stop offset="0" stop-color="#00ff0b"/><stop offset="0.4311" stop-color="#00ff00"/><stop offset="0.9867" stop-color="#00ff00"/><stop offset="0.9911" stop-color="#00ff00"/><stop offset="0.9956" stop-color="#00ff00"/><stop offset="1" stop-color="#00ff00"/></linearGradient><linearGradient id="c18" gradientUnits="userSpaceOnUse" x1="1564" x2="1795" y1="0" y2="0"><stop offset="0" stop-color="#00ff0c"/><stop offset="0.4545" stop-color="#00ff00"/><stop offset="0.9957" stop-color="#00ff00"/><stop offset="1" stop-color="#00ff00"/></linearGradient><linearGradient id="c19" gradientUnits="userSpaceOnUse" x1="1563" x2="1801" y1="0" y2="0"><stop offset="0" stop-color="#00ff0d"/><stop offset="0.458" stop-color="#00ff00"/><stop offset="1" stop-color="#00ff00"/></linearGradient><linearGradient id="c20" gradientUnits="userSpaceOnUse" x1="1561" x2="1806" y1="0" y2="0"><stop offset="0" stop-color="#00ff0e"/><stop offset="0.4612" stop-color="#00ff00"/><stop offset="0.9878" stop-color="#00ff00"/><stop offset="0.9918" stop-color="#00ff00"/><stop offset="0.9959" stop-color="#00ff00"/><stop offset="1" stop-color="#00ff00"/></linearGradient><linearGradient id="c21" gradientUnits="userSpaceOnUse" x1="1560" x2="1811" y1="0" y2="0"><stop offset="0" stop-color="#00ff0f"/><stop offset="0.4821" stop-color="#00ff00"/><stop offset="0.996" stop-color="#00ff00"/><stop offset="1" stop-color="#00ff00"/></linearGradient><linearGradient id="c22" gradientUnits="userSpaceOnUse" x1="1559" x2="1816" y1="0" y2="0"><stop offset="0" stop-color="#00ff10"/><stop offset="0.4864" stop-color="#00ff00"/><stop offset="0.9883" stop-color="#00ff00"/><stop offset="0.9922" stop-color="#00ff00"/><stop offset="0.9961" stop-color="#00ff00"/><stop offset="1" stop-color="#00ff00"/></linearGradient><linearGradient id="c23" gradientUnits="userSpaceOnUse" x1="1558" x2="1821" y1="0" y2="0"><stop offset="0" stop-color="#00ff11"/><stop offset="0.4905" stop-color="#00ff00"/><stop offset="0.9962" stop-color="#00ff00"/><stop offset="1" stop-color="#00ff00"/></linearGradient><linearGradient id="c24" gradientUnits="userSpaceOnUse" x1="1557" x2="1826" y1="0" y2="0"><stop offset="0" stop-color="#00ff12"/><stop offset="0.5093" stop-color="#00ff00"/><stop offset="0.9888" stop-color="#00ff00"/><stop offset="0.9926" stop-color="#00ff00"/><stop offset="0.9963" stop-color="#00ff00"/><stop offset="1" stop-color="#00ff00"/></linearGradient><linearGradient id="c25" gradientUnits="userSpaceOnUse" x1="1556" x2="1831" y1="0" y2="0"><stop offset="0" stop-color="#00ff13"/><stop offset="0.5127" stop-color="#00ff00"/><stop offset="0.9964" stop-color="#00ff00"/><stop offset="1" stop-color="#00ff00"/></linearGradient><linearGradient id="c26" gradientUnits="userSpaceOnUse" x1="1556" x2="1836" y1="0" y2="0"><stop offset="0" stop-color="#00ff14"/><stop offset="0.5179" stop-color="#00ff00"/><stop offset="0.9929" stop-color="#00ff00"/><stop offset="0.9964" stop-color="#00ff00"/><stop offset="1" stop-color="#00ff00"/></linearGradient><linearGradient id="c27" gradientUnits="userSpaceOnUse" x1="1555" x2="1841" y1="0" y2="0"><stop offset="0" stop-color="#00ff15"/><stop offset="0.535" stop-color="#00ff00"/><stop offset="1" stop-color="#00ff00"/></linearGradient><linearGradient id="c28" gradientUnits="userSpaceOnUse" x1="1554" x2="1845" y1="0" y2="0"><stop offset="0" stop-color="#00ff16"/><stop offset="0.5395" stop-color="#00ff00"/><stop offset="0.9966" stop-color="#00ff00"/><stop offset="1" stop-color="#00ff00"/></linearGradient><linearGradient id="c29" gradientUnits="userSpaceOnUse" x1="1553" x2="1850" y1="0" y2="0"><stop offset="0" stop-color="#00ff17"/><stop offset="0.5556" stop-color="#00ff00"/><stop offset="0.9899" stop-color="#00ff00"/><stop offset="0.9933" stop-color="#00ff00"/><stop offset="0.9966" stop-color="#00ff00"/><stop offset="1" stop-color="#00ff00"/></linearGradient><linearGradient id="c30" gradientUnits="userSpaceOnUse" x1="1553" x2="1855" y1="0" y2="0"><stop offset="0" stop-color="#00ff18"/><stop offset="0.5596" stop-color="#00ff00"/><stop offset="1" stop-color="#00ff00"/></linearGradient><linearGradient id="c31" gradientUnits="userSpaceOnUse" x1="1552" x2="1859" y1="0" y2="0"><stop offset="0" stop-color="#00ff19"/><stop offset="0.5635" stop-color="#00ff00"/><stop offset="0.9967" stop-color="#00ff00"/><stop offset="1" stop-color="#00ff00"/></linearGradient><linearGradient id="c32" gradientUnits="userSpaceOnUse" x1="1551" x2="1864" y1="0" y2="0"><stop offset="0" stop-color="#00ff1a"/><stop offset="0.5783" stop-color="#00ff00"/><stop offset="0.9904" stop-color="#00ff00"/><stop offset="0.9936" stop-color="#00ff00"/><stop offset="0.9968" stop-color="#00ff00"/><stop offset="1" stop-color="#00ff00"/></linearGradient><linearGradient id="c33" gradientUnits="userSpaceOnUse" x1="1551" x2="1869" y1="0" y2="0"><stop offset="0" stop-color="#00ff1b"/><stop offset="0.5818" stop-color="#00ff00"/><stop offset="1" stop-color="#00ff00"/></linearGradient><linearGradient id="c34" gradientUnits="userSpaceOnUse" x1="1550" x2="1873" y1="0" y2="0"><stop offset="0" stop-color="#00ff1c"/><stop offset="0.5851" stop-color="#00ff00"/><stop offset="0.9969" stop-color="#00ff00"/><stop offset="1" stop-color="#00ff00"/></linearGradient><linearGradient id="c35" gradientUnits="userSpaceOnUse" x1="1550" x2="1878" y1="0" y2="0"><stop offset="0" stop-color="#00ff1d"/><stop offset="0.6006" stop-color="#00ff00"/><stop offset="0.9939" stop-color="#00ff00"/><stop offset="0.997" stop-color="#00ff00"/><stop offset="1" stop-color="#00ff00"/></linearGradient><linearGradient id="c36" gradientUnits="userSpaceOnUse" x1="1550" x2="1882" y1="0" y2="0"><stop offset="0" stop-color="#00ff1d"/><stop offset="0.6054" stop-color="#00ff00"/><stop offset="0.994" stop-color="#00ff00"/><stop offset="0.997" stop-color="#00ff00"/><stop offset="1" stop-color="#00ff00"/></linearGradient><linearGradient id="c37" gradientUnits="userSpaceOnUse" x1="1549" x2="1887" y1="0" y2="0"><stop offset="0" stop-color="#00ff1f"/><stop offset="0.6065" stop-color="#00ff00"/><stop offset="1" stop-color="#00ff00"/></linearGradient><linearGradient id="c38" gradientUnits="userSpaceOnUse" x1="1549" x2="1891" y1="0" y2="0"><stop offset="0" stop-color="#00ff1f"/><stop offset="0.6228" stop-color="#00ff00"/><stop offset="1" stop-color="#00ff00"/></linearGradient><linearGradient id="c39" gradientUnits="userSpaceOnUse" x1="1548" x2="1895" y1="0" y2="0"><stop offset="0" stop-color="#00ff21"/><stop offset="0.6254" stop-color="#00ff00"/><stop offset="0.9971" stop-color="#00ff00"/><stop offset="1" stop-color="#00ff00"/></linearGradient><linearGradient id="c40" gradientUnits="userSpaceOnUse" x1="1548" x2="1900" y1="0" y2="0"><stop offset="0" stop-color="#00ff22"/><stop offset="0.6278" stop-color="#00ff00"/><stop offset="0.9943" stop-color="#00ff00"/><stop offset="0.9972" stop-color="#00ff00"/><stop offset="1" stop-color="#00ff00"/></linearGradient><linearGradient id="c41" gradientUnits="userSpaceOnUse" x1="1548" x2="1904" y1="0" y2="0"><stop offset="0" stop-color="#00ff23"/><stop offset="0.632" stop-color="#00ff00"/><stop offset="0.9944" stop-color="#00ff00"/><stop offset="0.9972" stop-color="#00ff00"/><stop offset="1" stop-color="#00ff00"/></linearGradient><linearGradient id="c42" gradientUnits="userSpaceOnUse" x1="1548" x2="1908" y1="0" y2="0"><stop offset="0" stop-color="#00ff24"/><stop offset="0.6472" stop-color="#00ff00"/><stop offset="0.9944" stop-color="#00ff00"/><stop offset="0.9972" stop-color="#00ff00"/><stop offset="1" stop-color="#00ff00"/></linearGradient><linearGradient id="c43" gradientUnits="userSpaceOnUse" x1="1548" x2="1913" y1="0" y2="0"><stop offset="0" stop-color="#00ff25"/><stop offset="0.6493" stop-color="#00ff00"/><stop offset="0.9918" stop-color="#00ff00"/><stop offset="0.9945" stop-color="#00ff00"/><stop offset="0.9973" stop-color="#00ff00"/><stop offset="1" stop-color="#00ff00"/></linearGradient><linearGradient id="c44" gradientUnits="userSpaceOnUse" x1="1548" x2="1917" y1="0" y2="0"><stop offset="0" stop-color="#00ff26"/><stop offset="0.6531" stop-color="#00ff00"/><stop offset="0.9919" stop-color="#00ff00"/><stop offset="0.9946" stop-color="#00ff00"/><stop offset="0.9973" stop-color="#00ff00"/><stop offset="1" stop-color="#00ff00"/></linearGradient><linearGradient id="c45" gradientUnits="userSpaceOnUse" x1="1548" x2="1921" y1="0" y2="0"><stop offset="0" stop-color="#00ff27"/><stop offset="0.6568" stop-color="#00ff00"/><stop offset="0.992" stop-color="#00ff00"/><stop offset="0.9946" stop-color="#00ff00"/><stop offset="0.9973" stop-color="#00ff00"/><stop offset="1" stop-color="#00ff00"/></linearGradient><linearGradient id="c46" gradientUnits="userSpaceOnUse" x1="1548" x2="1925" y1="0" y2="0"><stop offset="0" stop-color="#00ff28"/><stop offset="0.6605" stop-color="#00ff00"/><stop offset="0.992" stop-color="#00ff00"/><stop offset="0.9947" stop-color="#00ff00"/><stop offset="0.9973" stop-color="#00ff00"/><stop offset="1" stop-color="#01ff00"/></linearGradient><linearGradient id="c47" gradientUnits="userSpaceOnUse" x1="1548" x2="1929" y1="0" y2="0"><stop offset="0" stop-color="#00ff29"/><stop offset="0.6745" stop-color="#00ff00"/><stop offset="0.9921" stop-color="#03ff00"/><stop offset="0.9948" stop-color="#04ff00"/><stop offset="0.9974" stop-color="#04ff00"/><stop offset="1" stop-color="#05ff00"/></linearGradient><linearGradient id="c48" gradientUnits="userSpaceOnUse" x1="1548" x2="1934" y1="0" y2="0"><stop offset="0" stop-color="#00ff2a"/><stop offset="0.6762" stop-color="#00ff00"/><stop offset="0.9689" stop-color="#00ff00"/><stop offset="0.9922" stop-color="#08ff00"/><stop offset="0.9948" stop-color="#09ff00"/><stop offset="0.9974" stop-color="#0aff00"/><stop offset="1" stop-color="#0bff00"/></linearGradient><linearGradient id="c49" gradientUnits="userSpaceOnUse" x1="1548" x2="1938" y1="0" y2="0"><stop offset="0" stop-color="#00ff2b"/><stop offset="0.6795" stop-color="#00ff00"/><stop offset="0.959" stop-color="#01ff00"/><stop offset="0.9923" stop-color="#0dff00"/><stop offset="0.9949" stop-color="#0dff00"/><stop offset="0.9974" stop-color="#0eff00"/><stop offset="1" stop-color="#0fff00"/></linearGradient><linearGradient id="c50" gradientUnits="userSpaceOnUse" x1="1548" x2="1942" y1="0" y2="0"><stop offset="0" stop-color="#00ff2c"/><stop offset="0.6827" stop-color="#00ff00"/><stop offset="0.9492" stop-color="#02ff00"/><stop offset="0.9924" stop-color="#11ff00"/><stop offset="0.9949" stop-color="#12ff00"/><stop offset="0.9975" stop-color="#13ff00"/><stop offset="1" stop-color="#14ff00"/></linearGradient><linearGradient id="c51" gradientUnits="userSpaceOnUse" x1="1548" x2="1946" y1="0" y2="0"><stop offset="0" stop-color="#00ff2d"/><stop offset="0.6859" stop-color="#00ff00"/><stop offset="0.9397" stop-color="#03ff00"/><stop offset="0.9925" stop-color="#16ff00"/><stop offset="0.995" stop-color="#17ff00"/><stop offset="0.9975" stop-color="#18ff00"/><stop offset="1" stop-color="#19ff00"/></linearGradient><linearGradient id="c52" gradientUnits="userSpaceOnUse" x1="1548" x2="1950" y1="0" y2="0"><stop offset="0" stop-color="#00ff2e"/><stop offset="0.699" stop-color="#00ff00"/><stop offset="0.9204" stop-color="#01ff00"/><stop offset="0.9925" stop-color="#1bff00"/><stop offset="0.995" stop-color="#1cff00"/><stop offset="0.9975" stop-color="#1dff00"/><stop offset="1" stop-color="#1dff00"/></linearGradient><linearGradient id="c53" gradientUnits="userSpaceOnUse" x1="1548" x2="1955" y1="0" y2="0"><stop offset="0" stop-color="#00ff2f"/><stop offset="0.7002" stop-color="#00ff00"/><stop offset="0.9091" stop-color="#02ff00"/><stop offset="1" stop-color="#23ff00"/></linearGradient><linearGradient id="c54" gradientUnits="userSpaceOnUse" x1="1548" x2="1959" y1="0" y2="0"><stop offset="0" stop-color="#00ff30"/><stop offset="0.7032" stop-color="#00ff00"/><stop offset="0.9002" stop-color="#03ff00"/><stop offset="1" stop-color="#28ff00"/></linearGradient><linearGradient id="c55" gradientUnits="userSpaceOnUse" x1="1548" x2="1963" y1="0" y2="0"><stop offset="0" stop-color="#00ff31"/><stop offset="0.706" stop-color="#00ff00"/><stop offset="0.8819" stop-color="#00ff00"/><stop offset="1" stop-color="#2eff00"/></linearGradient><linearGradient id="c56" gradientUnits="userSpaceOnUse" x1="1548" x2="1967" y1="0" y2="0"><stop offset="0" stop-color="#00ff32"/><stop offset="0.7184" stop-color="#00ff00"/><stop offset="0.8735" stop-color="#01ff00"/><stop offset="1" stop-color="#33ff00"/></linearGradient><linearGradient id="c57" gradientUnits="userSpaceOnUse" x1="1548" x2="1971" y1="0" y2="0"><stop offset="0" stop-color="#00ff34"/><stop offset="0.721" stop-color="#00ff00"/><stop offset="0.8652" stop-color="#02ff00"/><stop offset="1" stop-color="#38ff00"/></linearGradient><linearGradient id="c58" gradientUnits="userSpaceOnUse" x1="1548" x2="1975" y1="0" y2="0"><stop offset="0" stop-color="#00ff35"/><stop offset="0.6768" stop-color="#00ff01"/><stop offset="0.8571" stop-color="#03ff00"/><stop offset="1" stop-color="#3eff00"/></linearGradient><linearGradient id="c59" gradientUnits="userSpaceOnUse" x1="1548" x2="1979" y1="0" y2="0"><stop offset="0" stop-color="#00ff36"/><stop offset="0.6705" stop-color="#00ff02"/><stop offset="0.8399" stop-color="#00ff00"/><stop offset="1" stop-color="#44ff00"/></linearGradient><linearGradient id="c60" gradientUnits="userSpaceOnUse" x1="1548" x2="1983" y1="0" y2="0"><stop offset="0" stop-color="#00ff37"/><stop offset="0.6552" stop-color="#00ff04"/><stop offset="0.8046" stop-color="#00ff00"/><stop offset="0.8345" stop-color="#02ff00"/><stop offset="0.9931" stop-color="#46ff00"/><stop offset="0.9954" stop-color="#47ff00"/><stop offset="0.9977" stop-color="#48ff00"/><stop offset="1" stop-color="#4aff00"/></linearGradient><linearGradient id="c61" gradientUnits="userSpaceOnUse" x1="1548" x2="1987" y1="0" y2="0"><stop offset="0" stop-color="#00ff38"/><stop offset="0.6492" stop-color="#00ff05"/><stop offset="0.7699" stop-color="#00ff00"/><stop offset="0.8269" stop-color="#03ff00"/><stop offset="0.9932" stop-color="#4cff00"/><stop offset="0.9954" stop-color="#4dff00"/><stop offset="0.9977" stop-color="#4eff00"/><stop offset="1" stop-color="#50ff00"/></linearGradient><linearGradient id="c62" gradientUnits="userSpaceOnUse" x1="1548" x2="1991" y1="0" y2="0"><stop offset="0" stop-color="#00ff39"/><stop offset="0.6433" stop-color="#00ff06"/><stop offset="0.754" stop-color="#00ff00"/><stop offset="0.8104" stop-color="#01ff00"/><stop offset="0.9932" stop-color="#52ff00"/><stop offset="0.9955" stop-color="#53ff00"/><stop offset="0.9977" stop-color="#55ff00"/><stop offset="1" stop-color="#56ff00"/></linearGradient><linearGradient id="c63" gradientUnits="userSpaceOnUse" x1="1548" x2="1995" y1="0" y2="0"><stop offset="0" stop-color="#00ff3b"/><stop offset="0.6376" stop-color="#00ff08"/><stop offset="0.7562" stop-color="#00ff00"/><stop offset="0.8031" stop-color="#02ff00"/><stop offset="0.9933" stop-color="#59ff00"/><stop offset="0.9955" stop-color="#5aff00"/><stop offset="0.9978" stop-color="#5bff00"/><stop offset="1" stop-color="#5cff00"/></linearGradient><linearGradient id="c64" gradientUnits="userSpaceOnUse" x1="1548" x2="2000" y1="0" y2="0"><stop offset="0" stop-color="#00ff3c"/><stop offset="0.6305" stop-color="#00ff09"/><stop offset="0.7566" stop-color="#00ff00"/><stop offset="0.7942" stop-color="#03ff00"/><stop offset="1" stop-color="#63ff00"/></linearGradient><linearGradient id="c65" gradientUnits="userSpaceOnUse" x1="1548" x2="2004" y1="0" y2="0"><stop offset="0" stop-color="#00ff3d"/><stop offset="0.6162" stop-color="#00ff0b"/><stop offset="0.75" stop-color="#00ff00"/><stop offset="0.7873" stop-color="#04ff00"/><stop offset="1" stop-color="#6aff00"/></linearGradient><linearGradient id="c66" gradientUnits="userSpaceOnUse" x1="1548" x2="2008" y1="0" y2="0"><stop offset="0" stop-color="#00ff3e"/><stop offset="0.6109" stop-color="#00ff0c"/><stop offset="0.7522" stop-color="#00ff00"/><stop offset="0.7804" stop-color="#05ff00"/><stop offset="1" stop-color="#71ff00"/></linearGradient><linearGradient id="c67" gradientUnits="userSpaceOnUse" x1="1548" x2="2012" y1="0" y2="0"><stop offset="0" stop-color="#00ff40"/><stop offset="0.6056" stop-color="#00ff0e"/><stop offset="0.7629" stop-color="#01ff00"/><stop offset="0.9806" stop-color="#6dff00"/><stop offset="1" stop-color="#78ff00"/></linearGradient><linearGradient id="c68" gradientUnits="userSpaceOnUse" x1="1548" x2="2016" y1="0" y2="0"><stop offset="0" stop-color="#00ff41"/><stop offset="0.6004" stop-color="#00ff0f"/><stop offset="0.7564" stop-color="#02ff00"/><stop offset="0.9722" stop-color="#6fff00"/><stop offset="1" stop-color="#7fff00"/></linearGradient><linearGradient id="c69" gradientUnits="userSpaceOnUse" x1="1548" x2="2020" y1="0" y2="0"><stop offset="0" stop-color="#00ff42"/><stop offset="0.5953" stop-color="#00ff10"/><stop offset="0.7415" stop-color="#00ff00"/><stop offset="0.9386" stop-color="#63ff00"/><stop offset="1" stop-color="#86ff00"/></linearGradient><linearGradient id="c70" gradientUnits="userSpaceOnUse" x1="1548" x2="2024" y1="0" y2="0"><stop offset="0" stop-color="#00ff44"/><stop offset="0.5819" stop-color="#00ff12"/><stop offset="0.7353" stop-color="#00ff01"/><stop offset="0.9391" stop-color="#69ff00"/><stop offset="1" stop-color="#8eff00"/></linearGradient><linearGradient id="c71" gradientUnits="userSpaceOnUse" x1="1548" x2="2028" y1="0" y2="0"><stop offset="0" stop-color="#00ff45"/><stop offset="0.5771" stop-color="#00ff14"/><stop offset="0.7292" stop-color="#01ff02"/><stop offset="0.9313" stop-color="#6cff00"/><stop offset="1" stop-color="#95ff00"/></linearGradient><linearGradient id="c72" gradientUnits="userSpaceOnUse" x1="1548" x2="2032" y1="0" y2="0"><stop offset="0" stop-color="#00ff46"/><stop offset="0.5723" stop-color="#00ff15"/><stop offset="0.7231" stop-color="#03ff03"/><stop offset="0.9236" stop-color="#6eff00"/><stop offset="1" stop-color="#9dff00"/></linearGradient><linearGradient id="c73" gradientUnits="userSpaceOnUse" x1="1548" x2="2036" y1="0" y2="0"><stop offset="0" stop-color="#00ff48"/><stop offset="0.5676" stop-color="#00ff16"/><stop offset="0.709" stop-color="#00ff06"/><stop offset="0.8012" stop-color="#2fff00"/><stop offset="0.9836" stop-color="#9aff00"/><stop offset="0.9939" stop-color="#a1ff00"/><stop offset="0.9959" stop-color="#a3ff00"/><stop offset="0.998" stop-color="#a4ff00"/><stop offset="1" stop-color="#a5ff00"/></linearGradient><linearGradient id="c74" gradientUnits="userSpaceOnUse" x1="1548" x2="2040" y1="0" y2="0"><stop offset="0" stop-color="#00ff49"/><stop offset="0.563" stop-color="#00ff18"/><stop offset="0.7033" stop-color="#01ff07"/><stop offset="0.7947" stop-color="#30ff00"/><stop offset="0.9756" stop-color="#9dff00"/><stop offset="0.9939" stop-color="#a9ff00"/><stop offset="0.9959" stop-color="#abff00"/><stop offset="0.998" stop-color="#acff00"/><stop offset="1" stop-color="#aeff00"/></linearGradient><linearGradient id="c75" gradientUnits="userSpaceOnUse" x1="1548" x2="2044" y1="0" y2="0"><stop offset="0" stop-color="#00ff4a"/><stop offset="0.5585" stop-color="#00ff19"/><stop offset="0.6976" stop-color="#02ff09"/><stop offset="0.7964" stop-color="#36ff00"/><stop offset="0.9758" stop-color="#a5ff00"/><stop offset="0.994" stop-color="#b2ff00"/><stop offset="0.996" stop-color="#b3ff00"/><stop offset="0.998" stop-color="#b5ff00"/><stop offset="1" stop-color="#b6ff00"/></linearGradient><linearGradient id="c76" gradientUnits="userSpaceOnUse" x1="1548" x2="2048" y1="0" y2="0"><stop offset="0" stop-color="#00ff4c"/><stop offset="0.546" stop-color="#00ff1c"/><stop offset="0.692" stop-color="#03ff0a"/><stop offset="0.79" stop-color="#38ff00"/><stop offset="0.968" stop-color="#a8ff00"/><stop offset="0.994" stop-color="#bbff00"/><stop offset="0.996" stop-color="#bcff00"/><stop offset="0.998" stop-color="#beff00"/><stop offset="1" stop-color="#bfff00"/></linearGradient><linearGradient id="c77" gradientUnits="userSpaceOnUse" x1="1548" x2="2052" y1="0" y2="0"><stop offset="0" stop-color="#00ff4d"/><stop offset="0.5417" stop-color="#00ff1d"/><stop offset="0.6786" stop-color="#00ff0c"/><stop offset="0.7917" stop-color="#3eff00"/><stop offset="0.9603" stop-color="#abff00"/><stop offset="0.994" stop-color="#c4ff00"/><stop offset="0.996" stop-color="#c5ff00"/><stop offset="0.998" stop-color="#c7ff00"/><stop offset="1" stop-color="#c8ff00"/></linearGradient><linearGradient id="c78" gradientUnits="userSpaceOnUse" x1="1548" x2="2056" y1="0" y2="0"><stop offset="0" stop-color="#00ff4f"/><stop offset="0.5374" stop-color="#00ff1f"/><stop offset="0.6732" stop-color="#01ff0e"/><stop offset="0.7933" stop-color="#44ff00"/><stop offset="0.9606" stop-color="#b4ff00"/><stop offset="0.9941" stop-color="#cdff00"/><stop offset="0.9961" stop-color="#ceff00"/><stop offset="0.998" stop-color="#d0ff00"/><stop offset="1" stop-color="#d1ff00"/></linearGradient><linearGradient id="c79" gradientUnits="userSpaceOnUse" x1="1548" x2="2060" y1="0" y2="0"><stop offset="0" stop-color="#00ff50"/><stop offset="0.5332" stop-color="#00ff20"/><stop offset="0.668" stop-color="#02ff0f"/><stop offset="0.8027" stop-color="#50ff00"/><stop offset="0.9609" stop-color="#bdff00"/><stop offset="0.9941" stop-color="#d6ff00"/><stop offset="0.9961" stop-color="#d8ff00"/><stop offset="0.998" stop-color="#daff00"/><stop offset="1" stop-color="#dbff00"/></linearGradient><linearGradient id="c80" gradientUnits="userSpaceOnUse" x1="1548" x2="2064" y1="0" y2="0"><stop offset="0" stop-color="#00ff52"/><stop offset="0.5291" stop-color="#00ff22"/><stop offset="0.655" stop-color="#00ff12"/><stop offset="0.8043" stop-color="#57ff00"/><stop offset="0.9612" stop-color="#c6ff00"/><stop offset="0.9942" stop-color="#e0ff00"/><stop offset="0.9961" stop-color="#e2ff00"/><stop offset="0.9981" stop-color="#e3ff00"/><stop offset="1" stop-color="#e5ff00"/></linearGradient><linearGradient id="c81" gradientUnits="userSpaceOnUse" x1="1548" x2="2068" y1="0" y2="0"><stop offset="0" stop-color="#00ff53"/><stop offset="0.525" stop-color="#00ff23"/><stop offset="0.65" stop-color="#00ff13"/><stop offset="0.8058" stop-color="#5eff00"/><stop offset="0.9615" stop-color="#cfff00"/><stop offset="0.9942" stop-color="#eaff00"/><stop offset="0.9962" stop-color="#ecff00"/><stop offset="0.9981" stop-color="#eeff00"/><stop offset="1" stop-color="#efff00"/></linearGradient><linearGradient id="c82" gradientUnits="userSpaceOnUse" x1="1548" x2="2072" y1="0" y2="0"><stop offset="0" stop-color="#00ff55"/><stop offset="0.521" stop-color="#00ff25"/><stop offset="0.645" stop-color="#02ff15"/><stop offset="0.8073" stop-color="#65ff00"/><stop offset="0.9542" stop-color="#d3ff00"/><stop offset="0.9943" stop-color="#f5ff00"/><stop offset="0.9962" stop-color="#f6ff00"/><stop offset="0.9981" stop-color="#f8ff00"/><stop offset="1" stop-color="#faff00"/></linearGradient><linearGradient id="c83" gradientUnits="userSpaceOnUse" x1="1549" x2="2076" y1="0" y2="0"><stop offset="0" stop-color="#00ff56"/><stop offset="0.5104" stop-color="#00ff27"/><stop offset="0.6338" stop-color="#00ff17"/><stop offset="0.8027" stop-color="#68ff00"/><stop offset="0.9488" stop-color="#d8ff00"/><stop offset="0.9962" stop-color="#fffd00"/><stop offset="0.9981" stop-color="#fffb00"/><stop offset="1" stop-color="#fff900"/></linearGradient><linearGradient id="c84" gradientUnits="userSpaceOnUse" x1="1549" x2="2080" y1="0" y2="0"><stop offset="0" stop-color="#00ff57"/><stop offset="0.5066" stop-color="#00ff29"/><stop offset="0.629" stop-color="#01ff19"/><stop offset="0.7966" stop-color="#6bff00"/><stop offset="0.9416" stop-color="#dbff00"/><stop offset="0.9812" stop-color="#ffff00"/><stop offset="0.9981" stop-color="#fff100"/><stop offset="1" stop-color="#ffef00"/></linearGradient><linearGradient id="c85" gradientUnits="userSpaceOnUse" x1="1549" x2="2084" y1="0" y2="0"><stop offset="0" stop-color="#00ff59"/><stop offset="0.5028" stop-color="#00ff2a"/><stop offset="0.6243" stop-color="#02ff1b"/><stop offset="0.7907" stop-color="#6dff01"/><stop offset="0.9346" stop-color="#dfff00"/><stop offset="0.9664" stop-color="#fcff00"/><stop offset="0.9981" stop-color="#ffe700"/><stop offset="1" stop-color="#ffe500"/></linearGradient><linearGradient id="c86" gradientUnits="userSpaceOnUse" x1="1549" x2="2088" y1="0" y2="0"><stop offset="0" stop-color="#00ff5b"/><stop offset="0.4991" stop-color="#00ff2c"/><stop offset="0.6122" stop-color="#00ff1d"/><stop offset="0.7625" stop-color="#5fff06"/><stop offset="0.8312" stop-color="#92ff00"/><stop offset="0.9592" stop-color="#fffe00"/><stop offset="0.9981" stop-color="#ffdd00"/><stop offset="1" stop-color="#ffdc00"/></linearGradient><linearGradient id="c87" gradientUnits="userSpaceOnUse" x1="1550" x2="2092" y1="0" y2="0"><stop offset="0" stop-color="#00ff5c"/><stop offset="0.4963" stop-color="#00ff2d"/><stop offset="0.6089" stop-color="#01ff1f"/><stop offset="0.7731" stop-color="#6eff05"/><stop offset="0.8413" stop-color="#a2ff00"/><stop offset="0.9465" stop-color="#ffff00"/><stop offset="1" stop-color="#ffd300"/></linearGradient><linearGradient id="c88" gradientUnits="userSpaceOnUse" x1="1550" x2="2096" y1="0" y2="0"><stop offset="0" stop-color="#00ff5e"/><stop offset="0.4927" stop-color="#00ff2f"/><stop offset="0.6044" stop-color="#02ff20"/><stop offset="0.7601" stop-color="#6aff08"/><stop offset="0.8278" stop-color="#9fff00"/><stop offset="0.9322" stop-color="#fcff00"/><stop offset="1" stop-color="#ffcb00"/></linearGradient><linearGradient id="c89" gradientUnits="userSpaceOnUse" x1="1550" x2="2100" y1="0" y2="0"><stop offset="0" stop-color="#00ff5f"/><stop offset="0.4891" stop-color="#00ff31"/><stop offset="0.5927" stop-color="#00ff23"/><stop offset="0.74" stop-color="#62ff0c"/><stop offset="0.8291" stop-color="#a8ff00"/><stop offset="0.9255" stop-color="#fffe00"/><stop offset="0.9927" stop-color="#ffc700"/><stop offset="0.9945" stop-color="#ffc600"/><stop offset="0.9964" stop-color="#ffc500"/><stop offset="0.9982" stop-color="#ffc400"/><stop offset="1" stop-color="#ffc300"/></linearGradient><linearGradient id="c90" gradientUnits="userSpaceOnUse" x1="1551" x2="2104" y1="0" y2="0"><stop offset="0" stop-color="#00ff61"/><stop offset="0.4792" stop-color="#00ff33"/><stop offset="0.5895" stop-color="#01ff25"/><stop offset="0.7432" stop-color="#6bff0d"/><stop offset="0.8318" stop-color="#b3ff00"/><stop offset="0.9132" stop-color="#ffff00"/><stop offset="0.9801" stop-color="#ffc800"/><stop offset="0.9964" stop-color="#ffbd00"/><stop offset="0.9982" stop-color="#ffbc00"/><stop offset="1" stop-color="#ffbb00"/></linearGradient><linearGradient id="c91" gradientUnits="userSpaceOnUse" x1="1551" x2="2107" y1="0" y2="0"><stop offset="0" stop-color="#00ff63"/><stop offset="0.4766" stop-color="#00ff35"/><stop offset="0.5863" stop-color="#03ff27"/><stop offset="0.7392" stop-color="#6dff0e"/><stop offset="0.8345" stop-color="#bdff00"/><stop offset="0.9011" stop-color="#fcff00"/><stop offset="0.9892" stop-color="#ffbb00"/><stop offset="0.9982" stop-color="#ffb600"/><stop offset="1" stop-color="#ffb500"/></linearGradient><linearGradient id="c92" gradientUnits="userSpaceOnUse" x1="1551" x2="2111" y1="0" y2="0"><stop offset="0" stop-color="#00ff64"/><stop offset="0.4732" stop-color="#00ff37"/><stop offset="0.575" stop-color="#00ff29"/><stop offset="0.7196" stop-color="#65ff13"/><stop offset="0.8357" stop-color="#c7ff00"/><stop offset="0.8946" stop-color="#fffe00"/><stop offset="0.9607" stop-color="#ffc600"/><stop offset="0.9982" stop-color="#ffae00"/><stop offset="1" stop-color="#ffad00"/></linearGradient><linearGradient id="c93" gradientUnits="userSpaceOnUse" x1="1552" x2="2115" y1="0" y2="0"><stop offset="0" stop-color="#00ff66"/><stop offset="0.4707" stop-color="#00ff39"/><stop offset="0.5719" stop-color="#02ff2b"/><stop offset="0.7229" stop-color="#6eff13"/><stop offset="0.8384" stop-color="#d3ff00"/><stop offset="0.8828" stop-color="#ffff00"/><stop offset="0.9485" stop-color="#ffc700"/><stop offset="1" stop-color="#ffa700"/></linearGradient><linearGradient id="c94" gradientUnits="userSpaceOnUse" x1="1552" x2="2119" y1="0" y2="0"><stop offset="0" stop-color="#00ff68"/><stop offset="0.4674" stop-color="#00ff3a"/><stop offset="0.5679" stop-color="#03ff2d"/><stop offset="0.7178" stop-color="#71ff15"/><stop offset="0.8395" stop-color="#deff00"/><stop offset="0.8695" stop-color="#fcff00"/><stop offset="0.9489" stop-color="#ffbe00"/><stop offset="1" stop-color="#ffa000"/></linearGradient><linearGradient id="c95" gradientUnits="userSpaceOnUse" x1="1553" x2="2123" y1="0" y2="0"><stop offset="0" stop-color="#00ff69"/><stop offset="0.4649" stop-color="#00ff3c"/><stop offset="0.5579" stop-color="#01ff30"/><stop offset="0.7" stop-color="#69ff19"/><stop offset="0.8211" stop-color="#d6ff02"/><stop offset="0.8579" stop-color="#fbff00"/><stop offset="0.8737" stop-color="#fff200"/><stop offset="0.9456" stop-color="#ffb900"/><stop offset="0.9965" stop-color="#ff9c00"/><stop offset="0.9982" stop-color="#ff9b00"/><stop offset="1" stop-color="#ff9a00"/></linearGradient><linearGradient id="c96" gradientUnits="userSpaceOnUse" x1="1553" x2="2127" y1="0" y2="0"><stop offset="0" stop-color="#00ff6b"/><stop offset="0.4617" stop-color="#00ff3e"/><stop offset="0.554" stop-color="#02ff32"/><stop offset="0.6951" stop-color="#6bff1b"/><stop offset="0.8153" stop-color="#d9ff03"/><stop offset="0.8519" stop-color="#fffe00"/><stop offset="0.9164" stop-color="#ffc500"/><stop offset="0.9948" stop-color="#ff9600"/><stop offset="0.9965" stop-color="#ff9500"/><stop offset="0.9983" stop-color="#ff9500"/><stop offset="1" stop-color="#ff9400"/></linearGradient><linearGradient id="c97" gradientUnits="userSpaceOnUse" x1="1553" x2="2131" y1="0" y2="0"><stop offset="0" stop-color="#00ff6d"/><stop offset="0.4516" stop-color="#00ff41"/><stop offset="0.5433" stop-color="#00ff35"/><stop offset="0.6696" stop-color="#5dff21"/><stop offset="0.7889" stop-color="#c8ff0a"/><stop offset="0.8391" stop-color="#fdff00"/><stop offset="0.917" stop-color="#ffbd00"/><stop offset="0.9948" stop-color="#ff9000"/><stop offset="0.9965" stop-color="#ff9000"/><stop offset="0.9983" stop-color="#ff8f00"/><stop offset="1" stop-color="#ff8e00"/></linearGradient><linearGradient id="c98" gradientUnits="userSpaceOnUse" x1="1554" x2="2135" y1="0" y2="0"><stop offset="0" stop-color="#00ff6e"/><stop offset="0.4492" stop-color="#00ff43"/><stop offset="0.5404" stop-color="#01ff36"/><stop offset="0.6799" stop-color="#6cff20"/><stop offset="0.7986" stop-color="#dcff09"/><stop offset="0.8279" stop-color="#fbff02"/><stop offset="0.8503" stop-color="#ffeb00"/><stop offset="0.9208" stop-color="#ffb300"/><stop offset="0.9983" stop-color="#ff8900"/><stop offset="1" stop-color="#ff8800"/></linearGradient><linearGradient id="c99" gradientUnits="userSpaceOnUse" x1="1554" x2="2139" y1="0" y2="0"><stop offset="0" stop-color="#00ff70"/><stop offset="0.4462" stop-color="#00ff45"/><stop offset="0.5368" stop-color="#03ff39"/><stop offset="0.6752" stop-color="#6fff22"/><stop offset="0.7932" stop-color="#e0ff0b"/><stop offset="0.8222" stop-color="#fffe04"/><stop offset="0.8855" stop-color="#ffc400"/><stop offset="0.9692" stop-color="#ff9100"/><stop offset="0.9983" stop-color="#ff8400"/><stop offset="1" stop-color="#ff8300"/></linearGradient><linearGradient id="c100" gradientUnits="userSpaceOnUse" x1="1555" x2="2143" y1="0" y2="0"><stop offset="0" stop-color="#00ff72"/><stop offset="0.4439" stop-color="#00ff47"/><stop offset="0.5272" stop-color="#00ff3b"/><stop offset="0.665" stop-color="#6dff25"/><stop offset="0.7823" stop-color="#dfff0e"/><stop offset="0.8112" stop-color="#ffff07"/><stop offset="0.8605" stop-color="#ffcf00"/><stop offset="0.9371" stop-color="#ff9c00"/><stop offset="1" stop-color="#ff7e00"/></linearGradient><linearGradient id="c101" gradientUnits="userSpaceOnUse" x1="1555" x2="2147" y1="0" y2="0"><stop offset="0" stop-color="#00ff74"/><stop offset="0.4409" stop-color="#00ff49"/><stop offset="0.5236" stop-color="#02ff3e"/><stop offset="0.6537" stop-color="#69ff29"/><stop offset="0.7703" stop-color="#dcff12"/><stop offset="0.799" stop-color="#fcff0b"/><stop offset="0.8345" stop-color="#ffdd02"/><stop offset="0.9037" stop-color="#ffa900"/><stop offset="1" stop-color="#ff7900"/></linearGradient><linearGradient id="c102" gradientUnits="userSpaceOnUse" x1="1556" x2="2151" y1="0" y2="0"><stop offset="0" stop-color="#00ff76"/><stop offset="0.4387" stop-color="#00ff4b"/><stop offset="0.5143" stop-color="#00ff41"/><stop offset="0.637" stop-color="#61ff2d"/><stop offset="0.7529" stop-color="#d3ff16"/><stop offset="0.7882" stop-color="#faff0e"/><stop offset="0.7966" stop-color="#fffa0c"/><stop offset="0.8588" stop-color="#ffc000"/><stop offset="0.9412" stop-color="#ff8e00"/><stop offset="0.9966" stop-color="#ff7500"/><stop offset="0.9983" stop-color="#ff7500"/><stop offset="1" stop-color="#ff7400"/></linearGradient><linearGradient id="c103" gradientUnits="userSpaceOnUse" x1="1556" x2="2155" y1="0" y2="0"><stop offset="0" stop-color="#00ff78"/><stop offset="0.4357" stop-color="#00ff4d"/><stop offset="0.5109" stop-color="#01ff43"/><stop offset="0.6394" stop-color="#6aff2e"/><stop offset="0.7479" stop-color="#d7ff19"/><stop offset="0.783" stop-color="#ffff11"/><stop offset="0.8381" stop-color="#ffc802"/><stop offset="0.9199" stop-color="#ff9300"/><stop offset="0.995" stop-color="#ff7100"/><stop offset="0.9967" stop-color="#ff7100"/><stop offset="0.9983" stop-color="#ff7000"/><stop offset="1" stop-color="#ff6f00"/></linearGradient><linearGradient id="c104" gradientUnits="userSpaceOnUse" x1="1556" x2="2159" y1="0" y2="0"><stop offset="0" stop-color="#00ff7a"/><stop offset="0.4328" stop-color="#00ff4f"/><stop offset="0.5075" stop-color="#02ff45"/><stop offset="0.6352" stop-color="#6dff30"/><stop offset="0.743" stop-color="#dbff1b"/><stop offset="0.7711" stop-color="#fcff14"/><stop offset="0.8458" stop-color="#ffbb01"/><stop offset="0.9337" stop-color="#ff8600"/><stop offset="0.995" stop-color="#ff6d00"/><stop offset="0.9967" stop-color="#ff6c00"/><stop offset="0.9983" stop-color="#ff6c00"/><stop offset="1" stop-color="#ff6b00"/></linearGradient><linearGradient id="c105" gradientUnits="userSpaceOnUse" x1="1557" x2="2163" y1="0" y2="0"><stop offset="0" stop-color="#00ff7c"/><stop offset="0.4307" stop-color="#00ff51"/><stop offset="0.4983" stop-color="#00ff48"/><stop offset="0.6188" stop-color="#64ff35"/><stop offset="0.7261" stop-color="#d2ff20"/><stop offset="0.7607" stop-color="#fbff18"/><stop offset="0.769" stop-color="#fff916"/><stop offset="0.83" stop-color="#ffbf05"/><stop offset="0.8911" stop-color="#ff9600"/><stop offset="0.9983" stop-color="#ff6700"/><stop offset="1" stop-color="#ff6700"/></linearGradient><linearGradient id="c106" gradientUnits="userSpaceOnUse" x1="1557" x2="2167" y1="0" y2="0"><stop offset="0" stop-color="#00ff7e"/><stop offset="0.4279" stop-color="#00ff54"/><stop offset="0.4951" stop-color="#01ff4a"/><stop offset="0.6213" stop-color="#6dff36"/><stop offset="0.7279" stop-color="#deff21"/><stop offset="0.7557" stop-color="#fffe1a"/><stop offset="0.8098" stop-color="#ffc70a"/><stop offset="0.877" stop-color="#ff9800"/><stop offset="0.9836" stop-color="#ff6800"/><stop offset="0.9984" stop-color="#ff6300"/><stop offset="1" stop-color="#ff6200"/></linearGradient><linearGradient id="c107" gradientUnits="userSpaceOnUse" x1="1558" x2="2171" y1="0" y2="0"><stop offset="0" stop-color="#00ff80"/><stop offset="0.4258" stop-color="#00ff56"/><stop offset="0.4861" stop-color="#00ff4e"/><stop offset="0.5922" stop-color="#59ff3d"/><stop offset="0.6982" stop-color="#c6ff29"/><stop offset="0.7455" stop-color="#feff1e"/><stop offset="0.8059" stop-color="#ffc20b"/><stop offset="0.8728" stop-color="#ff9400"/><stop offset="0.9788" stop-color="#ff6500"/><stop offset="1" stop-color="#ff5e00"/></linearGradient><linearGradient id="c108" gradientUnits="userSpaceOnUse" x1="1558" x2="2175" y1="0" y2="0"><stop offset="0" stop-color="#00ff82"/><stop offset="0.4165" stop-color="#00ff59"/><stop offset="0.483" stop-color="#00ff50"/><stop offset="0.6013" stop-color="#68ff3d"/><stop offset="0.7066" stop-color="#d9ff28"/><stop offset="0.7342" stop-color="#fbff22"/><stop offset="0.7423" stop-color="#fff91f"/><stop offset="0.7958" stop-color="#ffc30e"/><stop offset="0.8687" stop-color="#ff9100"/><stop offset="0.9741" stop-color="#ff6300"/><stop offset="0.9951" stop-color="#ff5c00"/><stop offset="0.9968" stop-color="#ff5c00"/><stop offset="0.9984" stop-color="#ff5b00"/><stop offset="1" stop-color="#ff5b00"/></linearGradient><linearGradient id="c109" gradientUnits="userSpaceOnUse" x1="1559" x2="2179" y1="0" y2="0"><stop offset="0" stop-color="#00ff84"/><stop offset="0.4145" stop-color="#00ff5b"/><stop offset="0.4806" stop-color="#03ff52"/><stop offset="0.5984" stop-color="#6cff3f"/><stop offset="0.6968" stop-color="#d8ff2c"/><stop offset="0.7306" stop-color="#fffc24"/><stop offset="0.7839" stop-color="#ffc412"/><stop offset="0.8565" stop-color="#ff9201"/><stop offset="0.9613" stop-color="#ff6300"/><stop offset="0.9952" stop-color="#ff5800"/><stop offset="0.9968" stop-color="#ff5800"/><stop offset="0.9984" stop-color="#ff5700"/><stop offset="1" stop-color="#ff5700"/></linearGradient><linearGradient id="c110" gradientUnits="userSpaceOnUse" x1="1559" x2="2183" y1="0" y2="0"><stop offset="0" stop-color="#00ff86"/><stop offset="0.4119" stop-color="#00ff5e"/><stop offset="0.4712" stop-color="#00ff56"/><stop offset="0.5817" stop-color="#62ff44"/><stop offset="0.6859" stop-color="#d4ff30"/><stop offset="0.7196" stop-color="#ffff29"/><stop offset="0.7724" stop-color="#ffc615"/><stop offset="0.8446" stop-color="#ff9204"/><stop offset="0.9295" stop-color="#ff6a00"/><stop offset="0.9952" stop-color="#ff5400"/><stop offset="0.9968" stop-color="#ff5400"/><stop offset="0.9984" stop-color="#ff5300"/><stop offset="1" stop-color="#ff5300"/></linearGradient><linearGradient id="c111" gradientUnits="userSpaceOnUse" x1="1560" x2="2187" y1="0" y2="0"><stop offset="0" stop-color="#00ff88"/><stop offset="0.4099" stop-color="#00ff60"/><stop offset="0.4689" stop-color="#02ff58"/><stop offset="0.5853" stop-color="#6dff46"/><stop offset="0.6826" stop-color="#daff32"/><stop offset="0.7097" stop-color="#fdff2c"/><stop offset="0.7687" stop-color="#ffc117"/><stop offset="0.8405" stop-color="#ff8f05"/><stop offset="0.9059" stop-color="#ff6f00"/><stop offset="0.9968" stop-color="#ff5000"/><stop offset="0.9984" stop-color="#ff5000"/><stop offset="1" stop-color="#ff4f00"/></linearGradient><linearGradient id="c112" gradientUnits="userSpaceOnUse" x1="1560" x2="2191" y1="0" y2="0"><stop offset="0" stop-color="#00ff8a"/><stop offset="0.4073" stop-color="#00ff63"/><stop offset="0.4659" stop-color="#03ff5b"/><stop offset="0.5816" stop-color="#70ff48"/><stop offset="0.6783" stop-color="#dfff35"/><stop offset="0.7052" stop-color="#fffc2f"/><stop offset="0.7575" stop-color="#ffc31a"/><stop offset="0.8288" stop-color="#ff9008"/><stop offset="0.8938" stop-color="#ff7000"/><stop offset="0.9968" stop-color="#ff4d00"/><stop offset="0.9984" stop-color="#ff4c00"/><stop offset="1" stop-color="#ff4c00"/></linearGradient><linearGradient id="c113" gradientUnits="userSpaceOnUse" x1="1561" x2="2195" y1="0" y2="0"><stop offset="0" stop-color="#00ff8c"/><stop offset="0.4054" stop-color="#00ff65"/><stop offset="0.4574" stop-color="#01ff5e"/><stop offset="0.5726" stop-color="#6dff4c"/><stop offset="0.6688" stop-color="#ddff39"/><stop offset="0.6956" stop-color="#fffd33"/><stop offset="0.7476" stop-color="#ffc31d"/><stop offset="0.8186" stop-color="#ff900a"/><stop offset="0.8896" stop-color="#ff6d00"/><stop offset="0.9984" stop-color="#ff4900"/><stop offset="1" stop-color="#ff4900"/></linearGradient><linearGradient id="c114" gradientUnits="userSpaceOnUse" x1="1561" x2="2199" y1="0" y2="0"><stop offset="0" stop-color="#00ff8f"/><stop offset="0.4028" stop-color="#00ff68"/><stop offset="0.4545" stop-color="#02ff61"/><stop offset="0.5627" stop-color="#6aff50"/><stop offset="0.6583" stop-color="#daff3d"/><stop offset="0.685" stop-color="#feff38"/><stop offset="0.7429" stop-color="#ffc01f"/><stop offset="0.8135" stop-color="#ff8d0c"/><stop offset="0.8966" stop-color="#ff6600"/><stop offset="0.9984" stop-color="#ff4600"/><stop offset="1" stop-color="#ff4500"/></linearGradient><linearGradient id="c115" gradientUnits="userSpaceOnUse" x1="1562" x2="2203" y1="0" y2="0"><stop offset="0" stop-color="#00ff91"/><stop offset="0.4009" stop-color="#00ff6a"/><stop offset="0.4462" stop-color="#00ff64"/><stop offset="0.5538" stop-color="#67ff54"/><stop offset="0.649" stop-color="#d8ff41"/><stop offset="0.6755" stop-color="#fcff3c"/><stop offset="0.7332" stop-color="#ffc022"/><stop offset="0.8034" stop-color="#ff8d0e"/><stop offset="0.8924" stop-color="#ff6300"/><stop offset="1" stop-color="#ff4200"/></linearGradient><linearGradient id="c116" gradientUnits="userSpaceOnUse" x1="1563" x2="2207" y1="0" y2="0"><stop offset="0" stop-color="#00ff93"/><stop offset="0.3991" stop-color="#00ff6d"/><stop offset="0.4441" stop-color="#03ff67"/><stop offset="0.5512" stop-color="#6cff56"/><stop offset="0.646" stop-color="#dfff44"/><stop offset="0.6661" stop-color="#fbff40"/><stop offset="0.6739" stop-color="#fff83c"/><stop offset="0.7252" stop-color="#ffbf25"/><stop offset="0.795" stop-color="#ff8c10"/><stop offset="0.896" stop-color="#ff5d00"/><stop offset="0.9969" stop-color="#ff4000"/><stop offset="0.9984" stop-color="#ff4000"/><stop offset="1" stop-color="#ff3f00"/></linearGradient><linearGradient id="c117" gradientUnits="userSpaceOnUse" x1="1563" x2="2211" y1="0" y2="0"><stop offset="0" stop-color="#00ff95"/><stop offset="0.3966" stop-color="#00ff70"/><stop offset="0.4352" stop-color="#00ff6b"/><stop offset="0.5293" stop-color="#5bff5d"/><stop offset="0.6235" stop-color="#cbff4b"/><stop offset="0.662" stop-color="#fffe43"/><stop offset="0.7068" stop-color="#ffc82c"/><stop offset="0.7701" stop-color="#ff9517"/><stop offset="0.8642" stop-color="#ff6503"/><stop offset="0.9954" stop-color="#ff3d00"/><stop offset="0.9969" stop-color="#ff3d00"/><stop offset="0.9985" stop-color="#ff3d00"/><stop offset="1" stop-color="#ff3c00"/></linearGradient><linearGradient id="c118" gradientUnits="userSpaceOnUse" x1="1564" x2="2214" y1="0" y2="0"><stop offset="0" stop-color="#00ff98"/><stop offset="0.4015" stop-color="#00ff72"/><stop offset="0.4338" stop-color="#01ff6e"/><stop offset="0.54" stop-color="#6dff5d"/><stop offset="0.6277" stop-color="#daff4d"/><stop offset="0.6538" stop-color="#ffff47"/><stop offset="0.6985" stop-color="#ffc930"/><stop offset="0.7615" stop-color="#ff951a"/><stop offset="0.8492" stop-color="#ff6706"/><stop offset="0.9185" stop-color="#ff4f00"/><stop offset="1" stop-color="#ff3a00"/></linearGradient><linearGradient id="c119" gradientUnits="userSpaceOnUse" x1="1564" x2="2218" y1="0" y2="0"><stop offset="0" stop-color="#00ff9a"/><stop offset="0.3991" stop-color="#00ff75"/><stop offset="0.4312" stop-color="#03ff71"/><stop offset="0.5367" stop-color="#70ff61"/><stop offset="0.6239" stop-color="#dfff50"/><stop offset="0.6437" stop-color="#fbff4c"/><stop offset="0.6514" stop-color="#fff848"/><stop offset="0.7018" stop-color="#ffbd2e"/><stop offset="0.7706" stop-color="#ff8a17"/><stop offset="0.87" stop-color="#ff5b03"/><stop offset="1" stop-color="#ff3700"/></linearGradient><linearGradient id="c120" gradientUnits="userSpaceOnUse" x1="1565" x2="2222" y1="0" y2="0"><stop offset="0" stop-color="#00ff9d"/><stop offset="0.3973" stop-color="#00ff78"/><stop offset="0.4231" stop-color="#00ff74"/><stop offset="0.5282" stop-color="#6eff65"/><stop offset="0.6149" stop-color="#ddff55"/><stop offset="0.6347" stop-color="#faff50"/><stop offset="0.6423" stop-color="#fff94d"/><stop offset="0.6865" stop-color="#ffc435"/><stop offset="0.7489" stop-color="#ff911d"/><stop offset="0.8417" stop-color="#ff6208"/><stop offset="0.9163" stop-color="#ff4800"/><stop offset="0.997" stop-color="#ff3500"/><stop offset="0.9985" stop-color="#ff3400"/><stop offset="1" stop-color="#ff3400"/></linearGradient><linearGradient id="c121" gradientUnits="userSpaceOnUse" x1="1565" x2="2226" y1="0" y2="0"><stop offset="0" stop-color="#00ff9f"/><stop offset="0.3949" stop-color="#00ff7b"/><stop offset="0.4206" stop-color="#02ff78"/><stop offset="0.5189" stop-color="#6aff69"/><stop offset="0.6051" stop-color="#d9ff59"/><stop offset="0.6309" stop-color="#ffff54"/><stop offset="0.6747" stop-color="#ffc73a"/><stop offset="0.7368" stop-color="#ff9321"/><stop offset="0.823" stop-color="#ff650c"/><stop offset="0.9153" stop-color="#ff4500"/><stop offset="0.9955" stop-color="#ff3200"/><stop offset="0.997" stop-color="#ff3200"/><stop offset="0.9985" stop-color="#ff3200"/><stop offset="1" stop-color="#ff3100"/></linearGradient><linearGradient id="c122" gradientUnits="userSpaceOnUse" x1="1566" x2="2230" y1="0" y2="0"><stop offset="0" stop-color="#00ffa2"/><stop offset="0.3931" stop-color="#00ff7e"/><stop offset="0.4127" stop-color="#00ff7b"/><stop offset="0.5045" stop-color="#60ff6e"/><stop offset="0.5904" stop-color="#cfff5f"/><stop offset="0.622" stop-color="#feff59"/><stop offset="0.6717" stop-color="#ffc23b"/><stop offset="0.7334" stop-color="#ff8f22"/><stop offset="0.8253" stop-color="#ff600b"/><stop offset="0.9172" stop-color="#ff4200"/><stop offset="0.997" stop-color="#ff2f00"/><stop offset="0.9985" stop-color="#ff2f00"/><stop offset="1" stop-color="#ff2f00"/></linearGradient><linearGradient id="c123" gradientUnits="userSpaceOnUse" x1="1567" x2="2234" y1="0" y2="0"><stop offset="0" stop-color="#00ffa4"/><stop offset="0.3913" stop-color="#00ff81"/><stop offset="0.4108" stop-color="#02ff7f"/><stop offset="0.5082" stop-color="#6cff70"/><stop offset="0.5937" stop-color="#dfff61"/><stop offset="0.6132" stop-color="#fcff5d"/><stop offset="0.6687" stop-color="#ffbc3c"/><stop offset="0.7301" stop-color="#ff8b23"/><stop offset="0.8216" stop-color="#ff5d0c"/><stop offset="0.919" stop-color="#ff3e00"/><stop offset="0.9985" stop-color="#ff2c00"/><stop offset="1" stop-color="#ff2c00"/></linearGradient><linearGradient id="c124" gradientUnits="userSpaceOnUse" x1="1567" x2="2238" y1="0" y2="0"><stop offset="0" stop-color="#00ffa7"/><stop offset="0.389" stop-color="#00ff84"/><stop offset="0.4083" stop-color="#04ff82"/><stop offset="0.5052" stop-color="#6fff74"/><stop offset="0.5842" stop-color="#dbff66"/><stop offset="0.6095" stop-color="#fffc60"/><stop offset="0.6528" stop-color="#ffc443"/><stop offset="0.7139" stop-color="#ff9029"/><stop offset="0.7988" stop-color="#ff6211"/><stop offset="0.9136" stop-color="#ff3c00"/><stop offset="0.9985" stop-color="#ff2a00"/><stop offset="1" stop-color="#ff2a00"/></linearGradient><linearGradient id="c125" gradientUnits="userSpaceOnUse" x1="1568" x2="2242" y1="0" y2="0"><stop offset="0" stop-color="#00ffa9"/><stop offset="0.3932" stop-color="#00ff87"/><stop offset="0.4006" stop-color="#01ff86"/><stop offset="0.497" stop-color="#6dff78"/><stop offset="0.5757" stop-color="#d9ff6b"/><stop offset="0.6009" stop-color="#fffe65"/><stop offset="0.6439" stop-color="#ffc547"/><stop offset="0.7047" stop-color="#ff902c"/><stop offset="0.7893" stop-color="#ff6213"/><stop offset="0.9154" stop-color="#ff3900"/><stop offset="1" stop-color="#ff2700"/></linearGradient><linearGradient id="c126" gradientUnits="userSpaceOnUse" x1="1568" x2="2246" y1="0" y2="0"><stop offset="0" stop-color="#00ffac"/><stop offset="0.3909" stop-color="#00ff8a"/><stop offset="0.4041" stop-color="#09ff89"/><stop offset="0.4941" stop-color="#70ff7c"/><stop offset="0.5723" stop-color="#deff6f"/><stop offset="0.5914" stop-color="#fdff6b"/><stop offset="0.6401" stop-color="#ffc049"/><stop offset="0.7006" stop-color="#ff8d2d"/><stop offset="0.7847" stop-color="#ff5f14"/><stop offset="0.91" stop-color="#ff3700"/><stop offset="1" stop-color="#ff2500"/></linearGradient><linearGradient id="c127" gradientUnits="userSpaceOnUse" x1="1569" x2="2250" y1="0" y2="0"><stop offset="0" stop-color="#00ffaf"/><stop offset="0.3891" stop-color="#00ff8e"/><stop offset="0.467" stop-color="#56ff84"/><stop offset="0.5448" stop-color="#bfff77"/><stop offset="0.5815" stop-color="#f9ff70"/><stop offset="0.5888" stop-color="#fff96c"/><stop offset="0.6314" stop-color="#ffc14d"/><stop offset="0.6916" stop-color="#ff8d30"/><stop offset="0.7753" stop-color="#ff5f17"/><stop offset="0.9001" stop-color="#ff3700"/><stop offset="0.9956" stop-color="#ff2300"/><stop offset="0.9971" stop-color="#ff2300"/><stop offset="0.9985" stop-color="#ff2300"/><stop offset="1" stop-color="#ff2300"/></linearGradient><linearGradient id="c128" gradientUnits="userSpaceOnUse" x1="1570" x2="2254" y1="0" y2="0"><stop offset="0" stop-color="#00ffb2"/><stop offset="0.3874" stop-color="#02ff91"/><stop offset="0.4766" stop-color="#69ff86"/><stop offset="0.5541" stop-color="#d8ff79"/><stop offset="0.5789" stop-color="#fffd73"/><stop offset="0.6213" stop-color="#ffc352"/><stop offset="0.6754" stop-color="#ff9236"/><stop offset="0.7529" stop-color="#ff641c"/><stop offset="0.8713" stop-color="#ff3b05"/><stop offset="0.9605" stop-color="#ff2700"/><stop offset="0.9971" stop-color="#ff2100"/><stop offset="0.9985" stop-color="#ff2100"/><stop offset="1" stop-color="#ff2000"/></linearGradient><linearGradient id="c129" gradientUnits="userSpaceOnUse" x1="1570" x2="2258" y1="0" y2="0"><stop offset="0" stop-color="#00ffb5"/><stop offset="0.3794" stop-color="#00ff96"/><stop offset="0.4331" stop-color="#3aff8f"/><stop offset="0.516" stop-color="#a8ff83"/><stop offset="0.5698" stop-color="#fdff7a"/><stop offset="0.6177" stop-color="#ffbf54"/><stop offset="0.6773" stop-color="#ff8a35"/><stop offset="0.7602" stop-color="#ff5d1b"/><stop offset="0.8837" stop-color="#ff3503"/><stop offset="0.9956" stop-color="#ff1f00"/><stop offset="0.9971" stop-color="#ff1f00"/><stop offset="0.9985" stop-color="#ff1e00"/><stop offset="1" stop-color="#ff1e00"/></linearGradient><linearGradient id="c130" gradientUnits="userSpaceOnUse" x1="1571" x2="2262" y1="0" y2="0"><stop offset="0" stop-color="#00ffb7"/><stop offset="0.3777" stop-color="#00ff99"/><stop offset="0.466" stop-color="#6aff8e"/><stop offset="0.5427" stop-color="#dcff82"/><stop offset="0.5615" stop-color="#fbff7f"/><stop offset="0.5745" stop-color="#ffed74"/><stop offset="0.6165" stop-color="#ffb754"/><stop offset="0.6758" stop-color="#ff8535"/><stop offset="0.7641" stop-color="#ff571a"/><stop offset="0.8929" stop-color="#ff3002"/><stop offset="0.9986" stop-color="#ff1c00"/><stop offset="1" stop-color="#ff1c00"/></linearGradient><linearGradient id="c131" gradientUnits="userSpaceOnUse" x1="1571" x2="2266" y1="0" y2="0"><stop offset="0" stop-color="#00ffba"/><stop offset="0.3755" stop-color="#02ff9d"/><stop offset="0.4633" stop-color="#6eff93"/><stop offset="0.5338" stop-color="#d8ff88"/><stop offset="0.5583" stop-color="#fffd82"/><stop offset="0.5942" stop-color="#ffc862"/><stop offset="0.6475" stop-color="#ff9442"/><stop offset="0.7237" stop-color="#ff6525"/><stop offset="0.8345" stop-color="#ff3c0b"/><stop offset="0.9338" stop-color="#ff2500"/><stop offset="0.9986" stop-color="#ff1a00"/><stop offset="1" stop-color="#ff1a00"/></linearGradient><linearGradient id="c132" gradientUnits="userSpaceOnUse" x1="1572" x2="2270" y1="0" y2="0"><stop offset="0" stop-color="#00ffbd"/><stop offset="0.3682" stop-color="#00ffa2"/><stop offset="0.4441" stop-color="#5cff99"/><stop offset="0.5201" stop-color="#ccff8e"/><stop offset="0.5501" stop-color="#fffe89"/><stop offset="0.586" stop-color="#ffc967"/><stop offset="0.639" stop-color="#ff9445"/><stop offset="0.7149" stop-color="#ff6427"/><stop offset="0.8252" stop-color="#ff3b0d"/><stop offset="0.9355" stop-color="#ff2200"/><stop offset="1" stop-color="#ff1800"/></linearGradient><linearGradient id="c133" gradientUnits="userSpaceOnUse" x1="1573" x2="2274" y1="0" y2="0"><stop offset="0" stop-color="#00ffc0"/><stop offset="0.3666" stop-color="#02ffa6"/><stop offset="0.4479" stop-color="#69ff9d"/><stop offset="0.5178" stop-color="#d4ff93"/><stop offset="0.5421" stop-color="#feff8f"/><stop offset="0.5835" stop-color="#ffc267"/><stop offset="0.6362" stop-color="#ff8f46"/><stop offset="0.7118" stop-color="#ff6128"/><stop offset="0.8274" stop-color="#ff380d"/><stop offset="0.9372" stop-color="#ff2000"/><stop offset="0.9957" stop-color="#ff1600"/><stop offset="0.9971" stop-color="#ff1600"/><stop offset="0.9986" stop-color="#ff1600"/><stop offset="1" stop-color="#ff1600"/></linearGradient><linearGradient id="c134" gradientUnits="userSpaceOnUse" x1="1573" x2="2278" y1="0" y2="0"><stop offset="0" stop-color="#00ffc4"/><stop offset="0.3589" stop-color="#00ffab"/><stop offset="0.4227" stop-color="#4dffa4"/><stop offset="0.4979" stop-color="#bcff9a"/><stop offset="0.5333" stop-color="#faff95"/><stop offset="0.5404" stop-color="#fff78f"/><stop offset="0.5759" stop-color="#ffc36c"/><stop offset="0.6284" stop-color="#ff8f49"/><stop offset="0.7035" stop-color="#ff612a"/><stop offset="0.8184" stop-color="#ff370f"/><stop offset="0.939" stop-color="#ff1d00"/><stop offset="0.9972" stop-color="#ff1400"/><stop offset="0.9986" stop-color="#ff1400"/><stop offset="1" stop-color="#ff1400"/></linearGradient><linearGradient id="c135" gradientUnits="userSpaceOnUse" x1="1574" x2="2282" y1="0" y2="0"><stop offset="0" stop-color="#00ffc7"/><stop offset="0.3573" stop-color="#01ffaf"/><stop offset="0.4379" stop-color="#69ffa6"/><stop offset="0.5071" stop-color="#d7ff9d"/><stop offset="0.5254" stop-color="#f8ff9a"/><stop offset="0.5325" stop-color="#fff995"/><stop offset="0.5678" stop-color="#ffc371"/><stop offset="0.6201" stop-color="#ff8f4d"/><stop offset="0.6949" stop-color="#ff602d"/><stop offset="0.8037" stop-color="#ff3811"/><stop offset="0.9407" stop-color="#ff1b00"/><stop offset="0.9986" stop-color="#ff1200"/><stop offset="1" stop-color="#ff1200"/></linearGradient><linearGradient id="c136" gradientUnits="userSpaceOnUse" x1="1575" x2="2286" y1="0" y2="0"><stop offset="0" stop-color="#00ffca"/><stop offset="0.3502" stop-color="#00ffb4"/><stop offset="0.4135" stop-color="#4fffad"/><stop offset="0.4824" stop-color="#b8ffa5"/><stop offset="0.5232" stop-color="#fffd9e"/><stop offset="0.5584" stop-color="#ffc678"/><stop offset="0.6048" stop-color="#ff9555"/><stop offset="0.6737" stop-color="#ff6634"/><stop offset="0.7764" stop-color="#ff3d17"/><stop offset="0.9353" stop-color="#ff1900"/><stop offset="0.9986" stop-color="#ff1000"/><stop offset="1" stop-color="#ff1000"/></linearGradient><linearGradient id="c137" gradientUnits="userSpaceOnUse" x1="1576" x2="2290" y1="0" y2="0"><stop offset="0" stop-color="#00ffcd"/><stop offset="0.3487" stop-color="#01ffb8"/><stop offset="0.4286" stop-color="#6cffb0"/><stop offset="0.4972" stop-color="#ddffa8"/><stop offset="0.5154" stop-color="#fffea5"/><stop offset="0.5504" stop-color="#ffc67d"/><stop offset="0.5966" stop-color="#ff9559"/><stop offset="0.6653" stop-color="#ff6637"/><stop offset="0.7675" stop-color="#ff3c19"/><stop offset="0.9314" stop-color="#ff1800"/><stop offset="1" stop-color="#ff0e00"/></linearGradient><linearGradient id="c138" gradientUnits="userSpaceOnUse" x1="1576" x2="2294" y1="0" y2="0"><stop offset="0" stop-color="#00ffd1"/><stop offset="0.3412" stop-color="#00ffbd"/><stop offset="0.3593" stop-color="#13ffbc"/><stop offset="0.4331" stop-color="#7bffb5"/><stop offset="0.4958" stop-color="#e6ffad"/><stop offset="0.5084" stop-color="#feffac"/><stop offset="0.5432" stop-color="#ffc782"/><stop offset="0.5891" stop-color="#ff955d"/><stop offset="0.6574" stop-color="#ff653a"/><stop offset="0.7591" stop-color="#ff3c1b"/><stop offset="0.922" stop-color="#ff1700"/><stop offset="0.9958" stop-color="#ff0d00"/><stop offset="0.9972" stop-color="#ff0d00"/><stop offset="0.9986" stop-color="#ff0d00"/><stop offset="1" stop-color="#ff0c00"/></linearGradient><linearGradient id="c139" gradientUnits="userSpaceOnUse" x1="1577" x2="2298" y1="0" y2="0"><stop offset="0" stop-color="#00ffd4"/><stop offset="0.3398" stop-color="#00ffc2"/><stop offset="0.4189" stop-color="#6dffbb"/><stop offset="0.4813" stop-color="#d7ffb4"/><stop offset="0.4993" stop-color="#faffb2"/><stop offset="0.5007" stop-color="#fcffb2"/><stop offset="0.5409" stop-color="#ffc082"/><stop offset="0.5867" stop-color="#ff905e"/><stop offset="0.6546" stop-color="#ff623b"/><stop offset="0.7559" stop-color="#ff391c"/><stop offset="0.9182" stop-color="#ff1601"/><stop offset="0.9972" stop-color="#ff0b00"/><stop offset="0.9986" stop-color="#ff0b00"/><stop offset="1" stop-color="#ff0b00"/></linearGradient><linearGradient id="c140" gradientUnits="userSpaceOnUse" x1="1578" x2="2302" y1="0" y2="0"><stop offset="0" stop-color="#00ffd7"/><stop offset="0.3329" stop-color="#00ffc7"/><stop offset="0.3564" stop-color="#1bffc5"/><stop offset="0.4296" stop-color="#87ffbf"/><stop offset="0.4917" stop-color="#f8ffb9"/><stop offset="0.4986" stop-color="#fff8b3"/><stop offset="0.5331" stop-color="#ffc188"/><stop offset="0.5787" stop-color="#ff9062"/><stop offset="0.6464" stop-color="#ff623e"/><stop offset="0.7472" stop-color="#ff391e"/><stop offset="0.9088" stop-color="#ff1502"/><stop offset="0.9986" stop-color="#ff0900"/><stop offset="1" stop-color="#ff0900"/></linearGradient><linearGradient id="c141" gradientUnits="userSpaceOnUse" x1="1578" x2="2306" y1="0" y2="0"><stop offset="0" stop-color="#00ffdb"/><stop offset="0.331" stop-color="#00ffcc"/><stop offset="0.3984" stop-color="#5dffc7"/><stop offset="0.4602" stop-color="#c6ffc2"/><stop offset="0.489" stop-color="#feffbf"/><stop offset="0.5234" stop-color="#ffc591"/><stop offset="0.5687" stop-color="#ff9268"/><stop offset="0.636" stop-color="#ff6342"/><stop offset="0.7363" stop-color="#ff3920"/><stop offset="0.897" stop-color="#ff1504"/><stop offset="0.9973" stop-color="#ff0800"/><stop offset="0.9986" stop-color="#ff0700"/><stop offset="1" stop-color="#ff0700"/></linearGradient><linearGradient id="c142" gradientUnits="userSpaceOnUse" x1="1579" x2="2310" y1="0" y2="0"><stop offset="0" stop-color="#00ffdf"/><stop offset="0.3297" stop-color="#02ffd1"/><stop offset="0.4022" stop-color="#6bffcc"/><stop offset="0.4637" stop-color="#d9ffc7"/><stop offset="0.4815" stop-color="#fdffc5"/><stop offset="0.5212" stop-color="#ffbe90"/><stop offset="0.5663" stop-color="#ff8d68"/><stop offset="0.6334" stop-color="#ff5f42"/><stop offset="0.7332" stop-color="#ff3721"/><stop offset="0.8933" stop-color="#ff1404"/><stop offset="0.9986" stop-color="#ff0600"/><stop offset="1" stop-color="#ff0600"/></linearGradient><linearGradient id="c143" gradientUnits="userSpaceOnUse" x1="1580" x2="2313" y1="0" y2="0"><stop offset="0" stop-color="#00ffe2"/><stop offset="0.3233" stop-color="#00ffd6"/><stop offset="0.3902" stop-color="#60ffd3"/><stop offset="0.4516" stop-color="#ccffce"/><stop offset="0.4748" stop-color="#fbffcc"/><stop offset="0.4816" stop-color="#fff5c4"/><stop offset="0.5157" stop-color="#ffbd95"/><stop offset="0.5607" stop-color="#ff8c6b"/><stop offset="0.6276" stop-color="#ff5e45"/><stop offset="0.7271" stop-color="#ff3623"/><stop offset="0.8868" stop-color="#ff1306"/><stop offset="0.9864" stop-color="#ff0600"/><stop offset="0.9986" stop-color="#ff0400"/><stop offset="1" stop-color="#ff0400"/></linearGradient><linearGradient id="c144" gradientUnits="userSpaceOnUse" x1="1581" x2="2317" y1="0" y2="0"><stop offset="0" stop-color="#00ffe6"/><stop offset="0.322" stop-color="#03ffdc"/><stop offset="0.394" stop-color="#6fffd8"/><stop offset="0.4552" stop-color="#e0ffd4"/><stop offset="0.4674" stop-color="#f9ffd3"/><stop offset="0.4688" stop-color="#fcffd3"/><stop offset="0.5082" stop-color="#ffbe9b"/><stop offset="0.553" stop-color="#ff8c70"/><stop offset="0.6196" stop-color="#ff5d48"/><stop offset="0.7188" stop-color="#ff3525"/><stop offset="0.8777" stop-color="#ff1207"/><stop offset="0.9769" stop-color="#ff0500"/><stop offset="1" stop-color="#ff0300"/></linearGradient><linearGradient id="c145" gradientUnits="userSpaceOnUse" x1="1581" x2="2321" y1="0" y2="0"><stop offset="0" stop-color="#00ffea"/><stop offset="0.3149" stop-color="#00ffe2"/><stop offset="0.3649" stop-color="#46ffdf"/><stop offset="0.4257" stop-color="#b0ffdc"/><stop offset="0.4649" stop-color="#fffed9"/><stop offset="0.4932" stop-color="#ffcaab"/><stop offset="0.5324" stop-color="#ff9980"/><stop offset="0.5878" stop-color="#ff6b58"/><stop offset="0.6703" stop-color="#ff4233"/><stop offset="0.8014" stop-color="#ff1e13"/><stop offset="0.9595" stop-color="#ff0500"/><stop offset="0.9986" stop-color="#ff0100"/><stop offset="1" stop-color="#ff0100"/></linearGradient><linearGradient id="c146" gradientUnits="userSpaceOnUse" x1="1582" x2="2325" y1="0" y2="0"><stop offset="0" stop-color="#00ffee"/><stop offset="0.3136" stop-color="#01ffe7"/><stop offset="0.3795" stop-color="#67ffe5"/><stop offset="0.4401" stop-color="#d9ffe2"/><stop offset="0.4576" stop-color="#feffe1"/><stop offset="0.4913" stop-color="#ffc3ab"/><stop offset="0.5357" stop-color="#ff8e7b"/><stop offset="0.5962" stop-color="#ff6152"/><stop offset="0.6891" stop-color="#ff382d"/><stop offset="0.8358" stop-color="#ff150d"/><stop offset="0.9664" stop-color="#ff0300"/><stop offset="1" stop-color="#ff0000"/></linearGradient><linearGradient id="c147" gradientUnits="userSpaceOnUse" x1="1583" x2="2329" y1="0" y2="0"><stop offset="0" stop-color="#00fff2"/><stop offset="0.307" stop-color="#00ffed"/><stop offset="0.3566" stop-color="#49ffec"/><stop offset="0.4169" stop-color="#b5ffea"/><stop offset="0.4504" stop-color="#fcffe9"/><stop offset="0.4893" stop-color="#ffbbaa"/><stop offset="0.5335" stop-color="#ff897b"/><stop offset="0.5992" stop-color="#ff5a50"/><stop offset="0.6971" stop-color="#ff322b"/><stop offset="0.8539" stop-color="#ff100b"/><stop offset="0.9678" stop-color="#ff0100"/><stop offset="0.996" stop-color="#ff0000"/><stop offset="0.9973" stop-color="#ff0000"/><stop offset="0.9987" stop-color="#ff0000"/><stop offset="1" stop-color="#ff0000"/></linearGradient><linearGradient id="c148" gradientUnits="userSpaceOnUse" x1="1584" x2="2333" y1="0" y2="0"><stop offset="0" stop-color="#00fff6"/><stop offset="0.3057" stop-color="#02fff3"/><stop offset="0.3712" stop-color="#6afff2"/><stop offset="0.4259" stop-color="#d4fff1"/><stop offset="0.4433" stop-color="#fbfff1"/><stop offset="0.4499" stop-color="#fff4e6"/><stop offset="0.478" stop-color="#ffc2b6"/><stop offset="0.5167" stop-color="#ff9288"/><stop offset="0.5768" stop-color="#ff625b"/><stop offset="0.6636" stop-color="#ff3a35"/><stop offset="0.8037" stop-color="#ff1613"/><stop offset="0.9653" stop-color="#ff0000"/><stop offset="0.9987" stop-color="#ff0000"/><stop offset="1" stop-color="#ff0000"/></linearGradient><linearGradient id="c149" gradientUnits="userSpaceOnUse" x1="1584" x2="2337" y1="0" y2="0"><stop offset="0" stop-color="#00fffa"/><stop offset="0.2988" stop-color="#00fff9"/><stop offset="0.3054" stop-color="#06fff9"/><stop offset="0.3705" stop-color="#70fff9"/><stop offset="0.425" stop-color="#defff8"/><stop offset="0.4369" stop-color="#f9fff8"/><stop offset="0.4382" stop-color="#fcfff8"/><stop offset="0.4608" stop-color="#ffd4ce"/><stop offset="0.4993" stop-color="#ff9d99"/><stop offset="0.5538" stop-color="#ff6d69"/><stop offset="0.6348" stop-color="#ff413f"/><stop offset="0.7583" stop-color="#ff1d1b"/><stop offset="0.9509" stop-color="#ff0000"/><stop offset="1" stop-color="#ff0000"/></linearGradient><linearGradient id="c150" gradientUnits="userSpaceOnUse" x1="1585" x2="2341" y1="0" y2="0"><stop offset="0" stop-color="#00ffff"/><stop offset="0.2976" stop-color="#00feff"/><stop offset="0.3624" stop-color="#6afeff"/><stop offset="0.4167" stop-color="#d7feff"/><stop offset="0.4339" stop-color="#fffeff"/><stop offset="0.4616" stop-color="#ffc7c9"/><stop offset="0.5" stop-color="#ff9596"/><stop offset="0.5542" stop-color="#ff6768"/><stop offset="0.6349" stop-color="#ff3e3e"/><stop offset="0.7632" stop-color="#ff1a1a"/><stop offset="0.9497" stop-color="#ff0000"/><stop offset="0.9987" stop-color="#ff0000"/><stop offset="1" stop-color="#ff0000"/></linearGradient><linearGradient id="c151" gradientUnits="userSpaceOnUse" x1="1586" x2="2345" y1="0" y2="0"><stop offset="0" stop-color="#00fbff"/><stop offset="0.2912" stop-color="#00f8ff"/><stop offset="0.3083" stop-color="#16f8ff"/><stop offset="0.3729" stop-color="#84f7ff"/><stop offset="0.4321" stop-color="#fff4fd"/><stop offset="0.4598" stop-color="#ffc0c7"/><stop offset="0.498" stop-color="#ff8f95"/><stop offset="0.552" stop-color="#ff6368"/><stop offset="0.6324" stop-color="#ff3b3f"/><stop offset="0.7602" stop-color="#ff181b"/><stop offset="0.9354" stop-color="#ff0001"/><stop offset="1" stop-color="#ff0000"/></linearGradient><linearGradient id="c152" gradientUnits="userSpaceOnUse" x1="1587" x2="2349" y1="0" y2="0"><stop offset="0" stop-color="#00f7ff"/><stop offset="0.29" stop-color="#01f2ff"/><stop offset="0.3543" stop-color="#68f0ff"/><stop offset="0.4081" stop-color="#d2efff"/><stop offset="0.4252" stop-color="#f8eeff"/><stop offset="0.4265" stop-color="#fbeeff"/><stop offset="0.4331" stop-color="#ffe4f5"/><stop offset="0.4659" stop-color="#ffadba"/><stop offset="0.5092" stop-color="#ff7d88"/><stop offset="0.5735" stop-color="#ff515a"/><stop offset="0.6693" stop-color="#ff2b32"/><stop offset="0.8228" stop-color="#ff0b10"/><stop offset="0.9396" stop-color="#ff0001"/><stop offset="0.9987" stop-color="#ff0000"/><stop offset="1" stop-color="#ff0000"/></linearGradient><linearGradient id="c153" gradientUnits="userSpaceOnUse" x1="1588" x2="2353" y1="0" y2="0"><stop offset="0" stop-color="#00f2ff"/><stop offset="0.2837" stop-color="#00ecff"/><stop offset="0.3163" stop-color="#2eebff"/><stop offset="0.3752" stop-color="#95e9ff"/><stop offset="0.4235" stop-color="#fae7ff"/><stop offset="0.4301" stop-color="#ffddf5"/><stop offset="0.4627" stop-color="#ffa8bb"/><stop offset="0.5059" stop-color="#ff7989"/><stop offset="0.5699" stop-color="#ff4e5b"/><stop offset="0.6654" stop-color="#ff2933"/><stop offset="0.8183" stop-color="#ff0a11"/><stop offset="0.9242" stop-color="#ff0003"/><stop offset="0.9987" stop-color="#ff0000"/><stop offset="1" stop-color="#ff0000"/></linearGradient><linearGradient id="c154" gradientUnits="userSpaceOnUse" x1="1588" x2="2357" y1="0" y2="0"><stop offset="0" stop-color="#00eeff"/><stop offset="0.2822" stop-color="#00e6ff"/><stop offset="0.3459" stop-color="#63e3ff"/><stop offset="0.4044" stop-color="#d4e0ff"/><stop offset="0.4213" stop-color="#fadfff"/><stop offset="0.4226" stop-color="#fddfff"/><stop offset="0.4603" stop-color="#ffa3bc"/><stop offset="0.5033" stop-color="#ff768a"/><stop offset="0.567" stop-color="#ff4c5c"/><stop offset="0.6619" stop-color="#ff2834"/><stop offset="0.814" stop-color="#ff0911"/><stop offset="0.9142" stop-color="#ff0004"/><stop offset="0.9987" stop-color="#ff0000"/><stop offset="1" stop-color="#ff0000"/></linearGradient><linearGradient id="c155" gradientUnits="userSpaceOnUse" x1="1589" x2="2361" y1="0" y2="0"><stop offset="0" stop-color="#00eaff"/><stop offset="0.2811" stop-color="#03e0ff"/><stop offset="0.3497" stop-color="#70ddff"/><stop offset="0.408" stop-color="#e2d9ff"/><stop offset="0.4197" stop-color="#fcd8ff"/><stop offset="0.4573" stop-color="#ff9ebd"/><stop offset="0.5" stop-color="#ff728b"/><stop offset="0.5635" stop-color="#ff495d"/><stop offset="0.658" stop-color="#ff2635"/><stop offset="0.8096" stop-color="#ff0712"/><stop offset="0.9041" stop-color="#ff0005"/><stop offset="0.9987" stop-color="#ff0000"/><stop offset="1" stop-color="#ff0000"/></linearGradient><linearGradient id="c156" gradientUnits="userSpaceOnUse" x1="1590" x2="2365" y1="0" y2="0"><stop offset="0" stop-color="#00e6ff"/><stop offset="0.2748" stop-color="#00dbff"/><stop offset="0.3381" stop-color="#61d7ff"/><stop offset="0.3961" stop-color="#cfd3ff"/><stop offset="0.4181" stop-color="#fed1ff"/><stop offset="0.4503" stop-color="#ff9ec4"/><stop offset="0.4929" stop-color="#ff7290"/><stop offset="0.551" stop-color="#ff4b63"/><stop offset="0.64" stop-color="#ff283b"/><stop offset="0.7806" stop-color="#ff0a17"/><stop offset="0.88" stop-color="#ff0008"/><stop offset="0.9897" stop-color="#ff0000"/><stop offset="0.9961" stop-color="#ff0000"/><stop offset="0.9974" stop-color="#ff0000"/><stop offset="0.9987" stop-color="#ff0000"/><stop offset="1" stop-color="#ff0000"/></linearGradient><linearGradient id="c157" gradientUnits="userSpaceOnUse" x1="1591" x2="2369" y1="0" y2="0"><stop offset="0" stop-color="#00e2ff"/><stop offset="0.2686" stop-color="#00d6ff"/><stop offset="0.2802" stop-color="#0cd5ff"/><stop offset="0.3483" stop-color="#79d0ff"/><stop offset="0.4062" stop-color="#eacbff"/><stop offset="0.4126" stop-color="#f8caff"/><stop offset="0.419" stop-color="#ffc4f8"/><stop offset="0.4512" stop-color="#ff94bf"/><stop offset="0.4936" stop-color="#ff6b8e"/><stop offset="0.5566" stop-color="#ff445f"/><stop offset="0.6504" stop-color="#ff2237"/><stop offset="0.8008" stop-color="#ff0514"/><stop offset="0.8946" stop-color="#ff0007"/><stop offset="0.9987" stop-color="#ff0000"/><stop offset="1" stop-color="#ff0000"/></linearGradient><linearGradient id="c158" gradientUnits="userSpaceOnUse" x1="1592" x2="2373" y1="0" y2="0"><stop offset="0" stop-color="#00deff"/><stop offset="0.2676" stop-color="#00d0ff"/><stop offset="0.3355" stop-color="#68cbff"/><stop offset="0.3931" stop-color="#d4c5ff"/><stop offset="0.4097" stop-color="#f8c3ff"/><stop offset="0.4161" stop-color="#ffbef8"/><stop offset="0.4481" stop-color="#ff90c0"/><stop offset="0.4904" stop-color="#ff678f"/><stop offset="0.5531" stop-color="#ff4160"/><stop offset="0.6466" stop-color="#ff2038"/><stop offset="0.7964" stop-color="#ff0415"/><stop offset="0.9565" stop-color="#ff0000"/><stop offset="0.9987" stop-color="#ff0000"/><stop offset="1" stop-color="#ff0000"/></linearGradient><linearGradient id="c159" gradientUnits="userSpaceOnUse" x1="1592" x2="2377" y1="0" y2="0"><stop offset="0" stop-color="#00daff"/><stop offset="0.2662" stop-color="#02cbff"/><stop offset="0.3338" stop-color="#69c5ff"/><stop offset="0.3911" stop-color="#d4bfff"/><stop offset="0.4076" stop-color="#f7bdff"/><stop offset="0.4089" stop-color="#fabdff"/><stop offset="0.4153" stop-color="#ffb5f6"/><stop offset="0.4471" stop-color="#ff8abf"/><stop offset="0.4892" stop-color="#ff638f"/><stop offset="0.5516" stop-color="#ff3e61"/><stop offset="0.6446" stop-color="#ff1e38"/><stop offset="0.7936" stop-color="#ff0215"/><stop offset="0.9783" stop-color="#ff0000"/><stop offset="1" stop-color="#ff0000"/></linearGradient><linearGradient id="c160" gradientUnits="userSpaceOnUse" x1="1593" x2="2381" y1="0" y2="0"><stop offset="0" stop-color="#00d6ff"/><stop offset="0.2602" stop-color="#00c6ff"/><stop offset="0.3173" stop-color="#53c1ff"/><stop offset="0.3794" stop-color="#c2baff"/><stop offset="0.4061" stop-color="#fab6ff"/><stop offset="0.4074" stop-color="#fcb6ff"/><stop offset="0.4442" stop-color="#ff85c0"/><stop offset="0.486" stop-color="#ff6090"/><stop offset="0.5482" stop-color="#ff3c62"/><stop offset="0.6409" stop-color="#ff1c39"/><stop offset="0.7893" stop-color="#ff0116"/><stop offset="0.9784" stop-color="#ff0000"/><stop offset="1" stop-color="#ff0000"/></linearGradient><linearGradient id="c161" gradientUnits="userSpaceOnUse" x1="1594" x2="2385" y1="0" y2="0"><stop offset="0" stop-color="#00d2ff"/><stop offset="0.2592" stop-color="#02c1ff"/><stop offset="0.3312" stop-color="#6fb9ff"/><stop offset="0.3881" stop-color="#d9b2ff"/><stop offset="0.4046" stop-color="#fcb0ff"/><stop offset="0.4463" stop-color="#ff7bba"/><stop offset="0.493" stop-color="#ff5587"/><stop offset="0.5601" stop-color="#ff335a"/><stop offset="0.6625" stop-color="#ff1532"/><stop offset="0.8003" stop-color="#ff0014"/><stop offset="0.9836" stop-color="#ff0000"/><stop offset="1" stop-color="#ff0000"/></linearGradient><linearGradient id="c162" gradientUnits="userSpaceOnUse" x1="1595" x2="2389" y1="0" y2="0"><stop offset="0" stop-color="#00ceff"/><stop offset="0.2531" stop-color="#00bcff"/><stop offset="0.3149" stop-color="#5ab6ff"/><stop offset="0.3766" stop-color="#c8aeff"/><stop offset="0.403" stop-color="#feaaff"/><stop offset="0.4345" stop-color="#ff80c7"/><stop offset="0.4761" stop-color="#ff5c95"/><stop offset="0.5378" stop-color="#ff3966"/><stop offset="0.6297" stop-color="#ff1a3c"/><stop offset="0.7771" stop-color="#ff0018"/><stop offset="0.9748" stop-color="#ff0000"/><stop offset="0.9962" stop-color="#ff0000"/><stop offset="0.9975" stop-color="#ff0000"/><stop offset="0.9987" stop-color="#ff0000"/><stop offset="1" stop-color="#ff0000"/></linearGradient><linearGradient id="c163" gradientUnits="userSpaceOnUse" x1="1596" x2="2393" y1="0" y2="0"><stop offset="0" stop-color="#00cbff"/><stop offset="0.2522" stop-color="#02b7ff"/><stop offset="0.3237" stop-color="#6dafff"/><stop offset="0.3852" stop-color="#dea6ff"/><stop offset="0.4015" stop-color="#ffa3fe"/><stop offset="0.4329" stop-color="#ff7bc6"/><stop offset="0.4743" stop-color="#ff5795"/><stop offset="0.5358" stop-color="#ff3666"/><stop offset="0.6274" stop-color="#ff183d"/><stop offset="0.7691" stop-color="#ff0019"/><stop offset="0.9762" stop-color="#ff0000"/><stop offset="0.9975" stop-color="#ff0000"/><stop offset="0.9987" stop-color="#ff0000"/><stop offset="1" stop-color="#ff0000"/></linearGradient><linearGradient id="c164" gradientUnits="userSpaceOnUse" x1="1597" x2="2397" y1="0" y2="0"><stop offset="0" stop-color="#00c7ff"/><stop offset="0.2462" stop-color="#00b3ff"/><stop offset="0.3125" stop-color="#60abff"/><stop offset="0.3738" stop-color="#cda2ff"/><stop offset="0.395" stop-color="#f89eff"/><stop offset="0.4012" stop-color="#ff99f9"/><stop offset="0.4325" stop-color="#ff74c4"/><stop offset="0.4788" stop-color="#ff4f8f"/><stop offset="0.545" stop-color="#ff2e60"/><stop offset="0.6412" stop-color="#ff1238"/><stop offset="0.7625" stop-color="#ff001b"/><stop offset="0.9738" stop-color="#ff0000"/><stop offset="1" stop-color="#ff0000"/></linearGradient><linearGradient id="c165" gradientUnits="userSpaceOnUse" x1="1598" x2="2401" y1="0" y2="0"><stop offset="0" stop-color="#00c3ff"/><stop offset="0.2453" stop-color="#03aeff"/><stop offset="0.3163" stop-color="#6ba5ff"/><stop offset="0.3773" stop-color="#d99bff"/><stop offset="0.3935" stop-color="#fa98ff"/><stop offset="0.3998" stop-color="#ff92f7"/><stop offset="0.4309" stop-color="#ff6fc3"/><stop offset="0.477" stop-color="#ff4b8f"/><stop offset="0.543" stop-color="#ff2b60"/><stop offset="0.6389" stop-color="#ff1038"/><stop offset="0.7497" stop-color="#ff001d"/><stop offset="0.9701" stop-color="#ff0000"/><stop offset="0.9963" stop-color="#ff0000"/><stop offset="0.9975" stop-color="#ff0000"/><stop offset="0.9988" stop-color="#ff0000"/><stop offset="1" stop-color="#ff0000"/></linearGradient><linearGradient id="c166" gradientUnits="userSpaceOnUse" x1="1598" x2="2405" y1="0" y2="0"><stop offset="0" stop-color="#00bfff"/><stop offset="0.2392" stop-color="#00aaff"/><stop offset="0.2949" stop-color="#4da3ff"/><stop offset="0.3606" stop-color="#bc98ff"/><stop offset="0.3916" stop-color="#fa93ff"/><stop offset="0.3928" stop-color="#fc92ff"/><stop offset="0.4337" stop-color="#ff66bd"/><stop offset="0.4796" stop-color="#ff458b"/><stop offset="0.5452" stop-color="#ff275f"/><stop offset="0.6456" stop-color="#ff0d36"/><stop offset="0.741" stop-color="#ff001f"/><stop offset="0.9653" stop-color="#ff0000"/><stop offset="0.9963" stop-color="#ff0000"/><stop offset="0.9975" stop-color="#ff0000"/><stop offset="0.9988" stop-color="#ff0000"/><stop offset="1" stop-color="#ff0000"/></linearGradient><linearGradient id="c167" gradientUnits="userSpaceOnUse" x1="1599" x2="2408" y1="0" y2="0"><stop offset="0" stop-color="#00bcff"/><stop offset="0.2386" stop-color="#01a5ff"/><stop offset="0.314" stop-color="#6f9bff"/><stop offset="0.3745" stop-color="#db90ff"/><stop offset="0.3906" stop-color="#fc8dff"/><stop offset="0.4265" stop-color="#ff67c4"/><stop offset="0.4722" stop-color="#ff4591"/><stop offset="0.5377" stop-color="#ff2762"/><stop offset="0.6378" stop-color="#ff0c39"/><stop offset="0.7281" stop-color="#ff0022"/><stop offset="0.9518" stop-color="#ff0002"/><stop offset="0.9975" stop-color="#ff0000"/><stop offset="0.9988" stop-color="#ff0000"/><stop offset="1" stop-color="#ff0000"/></linearGradient><linearGradient id="c168" gradientUnits="userSpaceOnUse" x1="1600" x2="2408" y1="0" y2="0"><stop offset="0" stop-color="#00b8ff"/><stop offset="0.2339" stop-color="#00a1ff"/><stop offset="0.2946" stop-color="#5399ff"/><stop offset="0.3601" stop-color="#c18dff"/><stop offset="0.3911" stop-color="#fe87ff"/><stop offset="0.427" stop-color="#ff62c3"/><stop offset="0.4728" stop-color="#ff4191"/><stop offset="0.5384" stop-color="#ff2462"/><stop offset="0.6386" stop-color="#ff0a39"/><stop offset="0.7191" stop-color="#ff0024"/><stop offset="0.9332" stop-color="#ff0004"/><stop offset="0.9988" stop-color="#ff0000"/><stop offset="1" stop-color="#ff0000"/></linearGradient><linearGradient id="c169" gradientUnits="userSpaceOnUse" x1="1601" x2="2402" y1="0" y2="0"><stop offset="0" stop-color="#00b5ff"/><stop offset="0.236" stop-color="#019dff"/><stop offset="0.3121" stop-color="#6d91ff"/><stop offset="0.3783" stop-color="#e085ff"/><stop offset="0.3945" stop-color="#ff81fe"/><stop offset="0.4257" stop-color="#ff61c9"/><stop offset="0.4719" stop-color="#ff4195"/><stop offset="0.5381" stop-color="#ff2365"/><stop offset="0.6342" stop-color="#ff0a3d"/><stop offset="0.7154" stop-color="#ff0027"/><stop offset="0.9263" stop-color="#ff0006"/><stop offset="0.9975" stop-color="#ff0000"/><stop offset="0.9988" stop-color="#ff0000"/><stop offset="1" stop-color="#ff0000"/></linearGradient><linearGradient id="c170" gradientUnits="userSpaceOnUse" x1="1602" x2="2393" y1="0" y2="0"><stop offset="0" stop-color="#00b1ff"/><stop offset="0.2339" stop-color="#0099ff"/><stop offset="0.3009" stop-color="#598fff"/><stop offset="0.3679" stop-color="#c683ff"/><stop offset="0.3995" stop-color="#ff7bfc"/><stop offset="0.4362" stop-color="#ff58c2"/><stop offset="0.4829" stop-color="#ff3a90"/><stop offset="0.5499" stop-color="#ff1f63"/><stop offset="0.6523" stop-color="#ff073a"/><stop offset="0.7244" stop-color="#ff0027"/><stop offset="0.9381" stop-color="#ff0007"/><stop offset="1" stop-color="#ff0001"/></linearGradient><linearGradient id="c171" gradientUnits="userSpaceOnUse" x1="1603" x2="2385" y1="0" y2="0"><stop offset="0" stop-color="#00aeff"/><stop offset="0.2366" stop-color="#0294ff"/><stop offset="0.3146" stop-color="#6b88ff"/><stop offset="0.3824" stop-color="#db7cff"/><stop offset="0.399" stop-color="#fa78ff"/><stop offset="0.4054" stop-color="#ff73f8"/><stop offset="0.4425" stop-color="#ff52bf"/><stop offset="0.4949" stop-color="#ff348b"/><stop offset="0.5678" stop-color="#ff195d"/><stop offset="0.6765" stop-color="#ff0236"/><stop offset="0.8517" stop-color="#ff0013"/><stop offset="0.9962" stop-color="#ff0002"/><stop offset="0.9974" stop-color="#ff0002"/><stop offset="0.9987" stop-color="#ff0002"/><stop offset="1" stop-color="#ff0002"/></linearGradient><linearGradient id="c172" gradientUnits="userSpaceOnUse" x1="1604" x2="2377" y1="0" y2="0"><stop offset="0" stop-color="#00aaff"/><stop offset="0.2342" stop-color="#0091ff"/><stop offset="0.3079" stop-color="#5f85ff"/><stop offset="0.3765" stop-color="#cb79ff"/><stop offset="0.4036" stop-color="#fc73ff"/><stop offset="0.4463" stop-color="#ff4fc0"/><stop offset="0.4994" stop-color="#ff318c"/><stop offset="0.5731" stop-color="#ff175e"/><stop offset="0.6831" stop-color="#ff0136"/><stop offset="0.8603" stop-color="#ff0014"/><stop offset="0.9961" stop-color="#ff0004"/><stop offset="0.9974" stop-color="#ff0004"/><stop offset="0.9987" stop-color="#ff0004"/><stop offset="1" stop-color="#ff0004"/></linearGradient><linearGradient id="c173" gradientUnits="userSpaceOnUse" x1="1605" x2="2368" y1="0" y2="0"><stop offset="0" stop-color="#00a7ff"/><stop offset="0.2372" stop-color="#028dff"/><stop offset="0.3172" stop-color="#6980ff"/><stop offset="0.3866" stop-color="#d673ff"/><stop offset="0.4089" stop-color="#fe6eff"/><stop offset="0.4469" stop-color="#ff4ec6"/><stop offset="0.4954" stop-color="#ff3294"/><stop offset="0.5649" stop-color="#ff1966"/><stop offset="0.671" stop-color="#ff023d"/><stop offset="0.8401" stop-color="#ff0019"/><stop offset="0.9987" stop-color="#ff0005"/><stop offset="1" stop-color="#ff0005"/></linearGradient><linearGradient id="c174" gradientUnits="userSpaceOnUse" x1="1606" x2="2360" y1="0" y2="0"><stop offset="0" stop-color="#00a3ff"/><stop offset="0.2347" stop-color="#0089ff"/><stop offset="0.3156" stop-color="#647cff"/><stop offset="0.3859" stop-color="#cf6fff"/><stop offset="0.4138" stop-color="#ff68fe"/><stop offset="0.4523" stop-color="#ff49c5"/><stop offset="0.5066" stop-color="#ff2d90"/><stop offset="0.5822" stop-color="#ff1461"/><stop offset="0.695" stop-color="#ff0039"/><stop offset="0.8767" stop-color="#ff0015"/><stop offset="1" stop-color="#ff0007"/></linearGradient><linearGradient id="c175" gradientUnits="userSpaceOnUse" x1="1607" x2="2351" y1="0" y2="0"><stop offset="0" stop-color="#00a0ff"/><stop offset="0.2379" stop-color="#0285ff"/><stop offset="0.3253" stop-color="#6e77ff"/><stop offset="0.3965" stop-color="#db69ff"/><stop offset="0.4194" stop-color="#ff62fc"/><stop offset="0.4583" stop-color="#ff45c4"/><stop offset="0.5134" stop-color="#ff2a8f"/><stop offset="0.5901" stop-color="#ff1262"/><stop offset="0.6989" stop-color="#ff003b"/><stop offset="0.8777" stop-color="#ff0017"/><stop offset="0.9973" stop-color="#ff0009"/><stop offset="0.9987" stop-color="#ff0009"/><stop offset="1" stop-color="#ff0009"/></linearGradient><linearGradient id="c176" gradientUnits="userSpaceOnUse" x1="1608" x2="2343" y1="0" y2="0"><stop offset="0" stop-color="#009dff"/><stop offset="0.2354" stop-color="#0082ff"/><stop offset="0.3184" stop-color="#6374ff"/><stop offset="0.3959" stop-color="#d465ff"/><stop offset="0.419" stop-color="#fa60ff"/><stop offset="0.4259" stop-color="#ff5cf8"/><stop offset="0.4653" stop-color="#ff40c1"/><stop offset="0.5211" stop-color="#ff268e"/><stop offset="0.5986" stop-color="#ff0f61"/><stop offset="0.698" stop-color="#ff003e"/><stop offset="0.8735" stop-color="#ff001a"/><stop offset="1" stop-color="#ff000a"/></linearGradient><linearGradient id="c177" gradientUnits="userSpaceOnUse" x1="1609" x2="2334" y1="0" y2="0"><stop offset="0" stop-color="#0099ff"/><stop offset="0.2386" stop-color="#037eff"/><stop offset="0.3283" stop-color="#6c6fff"/><stop offset="0.4069" stop-color="#df5fff"/><stop offset="0.4248" stop-color="#fc5bff"/><stop offset="0.4759" stop-color="#ff3abc"/><stop offset="0.5324" stop-color="#ff228b"/><stop offset="0.6166" stop-color="#ff0b5d"/><stop offset="0.6952" stop-color="#ff0042"/><stop offset="0.8676" stop-color="#ff001d"/><stop offset="0.9959" stop-color="#ff000d"/><stop offset="0.9972" stop-color="#ff000c"/><stop offset="0.9986" stop-color="#ff000c"/><stop offset="1" stop-color="#ff000c"/></linearGradient><linearGradient id="c178" gradientUnits="userSpaceOnUse" x1="1610" x2="2326" y1="0" y2="0"><stop offset="0" stop-color="#0096ff"/><stop offset="0.236" stop-color="#007aff"/><stop offset="0.3268" stop-color="#686cff"/><stop offset="0.4064" stop-color="#d85cff"/><stop offset="0.4302" stop-color="#fe56ff"/><stop offset="0.4763" stop-color="#ff39c1"/><stop offset="0.5335" stop-color="#ff218f"/><stop offset="0.6187" stop-color="#ff0a60"/><stop offset="0.6927" stop-color="#ff0045"/><stop offset="0.8617" stop-color="#ff0020"/><stop offset="0.9972" stop-color="#ff000e"/><stop offset="0.9986" stop-color="#ff000e"/><stop offset="1" stop-color="#ff000e"/></linearGradient><linearGradient id="c179" gradientUnits="userSpaceOnUse" x1="1611" x2="2317" y1="0" y2="0"><stop offset="0" stop-color="#0093ff"/><stop offset="0.2394" stop-color="#0377ff"/><stop offset="0.3314" stop-color="#6b67ff"/><stop offset="0.4122" stop-color="#da57ff"/><stop offset="0.4363" stop-color="#ff51fe"/><stop offset="0.4773" stop-color="#ff38c7"/><stop offset="0.5354" stop-color="#ff1f93"/><stop offset="0.6161" stop-color="#ff0a65"/><stop offset="0.6912" stop-color="#ff0049"/><stop offset="0.8569" stop-color="#ff0023"/><stop offset="1" stop-color="#ff0010"/></linearGradient><linearGradient id="c180" gradientUnits="userSpaceOnUse" x1="1612" x2="2309" y1="0" y2="0"><stop offset="0" stop-color="#0090ff"/><stop offset="0.2367" stop-color="#0074ff"/><stop offset="0.3357" stop-color="#6d63ff"/><stop offset="0.4175" stop-color="#dc53ff"/><stop offset="0.4419" stop-color="#ff4cfc"/><stop offset="0.4835" stop-color="#ff34c6"/><stop offset="0.5423" stop-color="#ff1d93"/><stop offset="0.6241" stop-color="#ff0865"/><stop offset="0.6944" stop-color="#ff004b"/><stop offset="0.8565" stop-color="#ff0026"/><stop offset="0.9957" stop-color="#ff0012"/><stop offset="0.9971" stop-color="#ff0012"/><stop offset="0.9986" stop-color="#ff0012"/><stop offset="1" stop-color="#ff0012"/></linearGradient><linearGradient id="c181" gradientUnits="userSpaceOnUse" x1="1613" x2="2300" y1="0" y2="0"><stop offset="0" stop-color="#008cff"/><stop offset="0.2402" stop-color="#0370ff"/><stop offset="0.3406" stop-color="#705fff"/><stop offset="0.4236" stop-color="#de4eff"/><stop offset="0.4425" stop-color="#fb4aff"/><stop offset="0.4498" stop-color="#ff46f8"/><stop offset="0.4978" stop-color="#ff2dbe"/><stop offset="0.5633" stop-color="#ff168a"/><stop offset="0.6579" stop-color="#ff015c"/><stop offset="0.7991" stop-color="#ff0033"/><stop offset="0.9985" stop-color="#ff0014"/><stop offset="1" stop-color="#ff0014"/></linearGradient><linearGradient id="c182" gradientUnits="userSpaceOnUse" x1="1614" x2="2292" y1="0" y2="0"><stop offset="0" stop-color="#0089ff"/><stop offset="0.2375" stop-color="#006dff"/><stop offset="0.3392" stop-color="#6b5cff"/><stop offset="0.4233" stop-color="#d84bff"/><stop offset="0.4484" stop-color="#fd46ff"/><stop offset="0.5029" stop-color="#ff2abe"/><stop offset="0.5693" stop-color="#ff148b"/><stop offset="0.6652" stop-color="#ff005c"/><stop offset="0.8083" stop-color="#ff0034"/><stop offset="0.9985" stop-color="#ff0016"/><stop offset="1" stop-color="#ff0016"/></linearGradient><linearGradient id="c183" gradientUnits="userSpaceOnUse" x1="1615" x2="2283" y1="0" y2="0"><stop offset="0" stop-color="#0086ff"/><stop offset="0.235" stop-color="#006aff"/><stop offset="0.3144" stop-color="#4d5dff"/><stop offset="0.4057" stop-color="#b94cff"/><stop offset="0.4551" stop-color="#ff41ff"/><stop offset="0.5045" stop-color="#ff28c4"/><stop offset="0.5719" stop-color="#ff128e"/><stop offset="0.6632" stop-color="#ff0061"/><stop offset="0.8024" stop-color="#ff0038"/><stop offset="0.9955" stop-color="#ff0019"/><stop offset="0.997" stop-color="#ff0018"/><stop offset="0.9985" stop-color="#ff0018"/><stop offset="1" stop-color="#ff0018"/></linearGradient><linearGradient id="c184" gradientUnits="userSpaceOnUse" x1="1616" x2="2275" y1="0" y2="0"><stop offset="0" stop-color="#0083ff"/><stop offset="0.2382" stop-color="#0166ff"/><stop offset="0.3429" stop-color="#6a55ff"/><stop offset="0.4355" stop-color="#dc43ff"/><stop offset="0.4613" stop-color="#ff3dfe"/><stop offset="0.5114" stop-color="#ff25c3"/><stop offset="0.5797" stop-color="#ff108e"/><stop offset="0.6722" stop-color="#ff0061"/><stop offset="0.8134" stop-color="#ff0039"/><stop offset="0.997" stop-color="#ff001b"/><stop offset="0.9985" stop-color="#ff001a"/><stop offset="1" stop-color="#ff001a"/></linearGradient><linearGradient id="c185" gradientUnits="userSpaceOnUse" x1="1617" x2="2266" y1="0" y2="0"><stop offset="0" stop-color="#0080ff"/><stop offset="0.2357" stop-color="#0064ff"/><stop offset="0.3236" stop-color="#5256ff"/><stop offset="0.4176" stop-color="#be44ff"/><stop offset="0.4684" stop-color="#ff38fc"/><stop offset="0.5193" stop-color="#ff21c2"/><stop offset="0.5886" stop-color="#ff0d8e"/><stop offset="0.6703" stop-color="#ff0066"/><stop offset="0.8074" stop-color="#ff003d"/><stop offset="1" stop-color="#ff001d"/></linearGradient><linearGradient id="c186" gradientUnits="userSpaceOnUse" x1="1618" x2="2258" y1="0" y2="0"><stop offset="0" stop-color="#007dff"/><stop offset="0.2391" stop-color="#0160ff"/><stop offset="0.3531" stop-color="#6f4eff"/><stop offset="0.4484" stop-color="#e03aff"/><stop offset="0.4688" stop-color="#fb36ff"/><stop offset="0.4828" stop-color="#ff30f0"/><stop offset="0.5344" stop-color="#ff1bba"/><stop offset="0.6047" stop-color="#ff098a"/><stop offset="0.675" stop-color="#ff0068"/><stop offset="0.8141" stop-color="#ff003f"/><stop offset="0.9969" stop-color="#ff001f"/><stop offset="0.9984" stop-color="#ff001f"/><stop offset="1" stop-color="#ff001f"/></linearGradient><linearGradient id="c187" gradientUnits="userSpaceOnUse" x1="1619" x2="2250" y1="0" y2="0"><stop offset="0" stop-color="#007aff"/><stop offset="0.2361" stop-color="#005eff"/><stop offset="0.3328" stop-color="#574eff"/><stop offset="0.4295" stop-color="#c23cff"/><stop offset="0.4754" stop-color="#fd32ff"/><stop offset="0.5341" stop-color="#ff1bc1"/><stop offset="0.6054" stop-color="#ff088e"/><stop offset="0.6704" stop-color="#ff006e"/><stop offset="0.8051" stop-color="#ff0044"/><stop offset="0.9968" stop-color="#ff0021"/><stop offset="0.9984" stop-color="#ff0021"/><stop offset="1" stop-color="#ff0021"/></linearGradient><linearGradient id="c188" gradientUnits="userSpaceOnUse" x1="1620" x2="2241" y1="0" y2="0"><stop offset="0" stop-color="#0077ff"/><stop offset="0.2399" stop-color="#015aff"/><stop offset="0.3575" stop-color="#6d47ff"/><stop offset="0.4557" stop-color="#dc34ff"/><stop offset="0.4831" stop-color="#ff2eff"/><stop offset="0.5362" stop-color="#ff19c5"/><stop offset="0.6087" stop-color="#ff0791"/><stop offset="0.6747" stop-color="#ff0071"/><stop offset="0.8116" stop-color="#ff0046"/><stop offset="1" stop-color="#ff0024"/></linearGradient><linearGradient id="c189" gradientUnits="userSpaceOnUse" x1="1622" x2="2233" y1="0" y2="0"><stop offset="0" stop-color="#0074ff"/><stop offset="0.2373" stop-color="#0057ff"/><stop offset="0.3568" stop-color="#6a44ff"/><stop offset="0.4566" stop-color="#d831ff"/><stop offset="0.4845" stop-color="#fa2bff"/><stop offset="0.4926" stop-color="#ff28f9"/><stop offset="0.5466" stop-color="#ff15c2"/><stop offset="0.6203" stop-color="#ff048f"/><stop offset="0.7267" stop-color="#ff0061"/><stop offset="0.8854" stop-color="#ff0039"/><stop offset="0.9984" stop-color="#ff0026"/><stop offset="1" stop-color="#ff0026"/></linearGradient><linearGradient id="c190" gradientUnits="userSpaceOnUse" x1="1623" x2="2224" y1="0" y2="0"><stop offset="0" stop-color="#0071ff"/><stop offset="0.2413" stop-color="#0354ff"/><stop offset="0.3627" stop-color="#6d41ff"/><stop offset="0.4642" stop-color="#d92dff"/><stop offset="0.4925" stop-color="#fc27ff"/><stop offset="0.5607" stop-color="#ff10bd"/><stop offset="0.6423" stop-color="#ff0089"/><stop offset="0.7571" stop-color="#ff005c"/><stop offset="0.9318" stop-color="#ff0033"/><stop offset="1" stop-color="#ff0029"/></linearGradient><linearGradient id="c191" gradientUnits="userSpaceOnUse" x1="1624" x2="2216" y1="0" y2="0"><stop offset="0" stop-color="#006eff"/><stop offset="0.2382" stop-color="#0052ff"/><stop offset="0.3615" stop-color="#693eff"/><stop offset="0.4713" stop-color="#db29ff"/><stop offset="0.5" stop-color="#fe23ff"/><stop offset="0.5625" stop-color="#ff0fc2"/><stop offset="0.6385" stop-color="#ff0090"/><stop offset="0.7483" stop-color="#ff0062"/><stop offset="0.9122" stop-color="#ff003a"/><stop offset="0.9949" stop-color="#ff002c"/><stop offset="0.9966" stop-color="#ff002c"/><stop offset="0.9983" stop-color="#ff002c"/><stop offset="1" stop-color="#ff002b"/></linearGradient><linearGradient id="c192" gradientUnits="userSpaceOnUse" x1="1625" x2="2207" y1="0" y2="0"><stop offset="0" stop-color="#006bff"/><stop offset="0.2423" stop-color="#034eff"/><stop offset="0.3677" stop-color="#6b3bff"/><stop offset="0.4794" stop-color="#dd26ff"/><stop offset="0.5086" stop-color="#ff1fff"/><stop offset="0.5653" stop-color="#ff0ec7"/><stop offset="0.6426" stop-color="#ff0094"/><stop offset="0.7543" stop-color="#ff0065"/><stop offset="0.921" stop-color="#ff003c"/><stop offset="0.9983" stop-color="#ff002f"/><stop offset="1" stop-color="#ff002e"/></linearGradient><linearGradient id="c193" gradientUnits="userSpaceOnUse" x1="1626" x2="2199" y1="0" y2="0"><stop offset="0" stop-color="#0068ff"/><stop offset="0.2391" stop-color="#004cff"/><stop offset="0.3735" stop-color="#6d37ff"/><stop offset="0.4869" stop-color="#df22ff"/><stop offset="0.5166" stop-color="#ff1bfd"/><stop offset="0.5742" stop-color="#ff0bc6"/><stop offset="0.6457" stop-color="#ff0097"/><stop offset="0.7592" stop-color="#ff0067"/><stop offset="0.9284" stop-color="#ff003d"/><stop offset="1" stop-color="#ff0031"/></linearGradient><linearGradient id="c194" gradientUnits="userSpaceOnUse" x1="1628" x2="2190" y1="0" y2="0"><stop offset="0" stop-color="#0065ff"/><stop offset="0.2367" stop-color="#004aff"/><stop offset="0.3665" stop-color="#6536ff"/><stop offset="0.4822" stop-color="#d421ff"/><stop offset="0.5196" stop-color="#fc19ff"/><stop offset="0.5925" stop-color="#ff06bf"/><stop offset="0.6512" stop-color="#ff009a"/><stop offset="0.7669" stop-color="#ff0069"/><stop offset="0.9324" stop-color="#ff0040"/><stop offset="0.9982" stop-color="#ff0034"/><stop offset="1" stop-color="#ff0034"/></linearGradient><linearGradient id="c195" gradientUnits="userSpaceOnUse" x1="1629" x2="2182" y1="0" y2="0"><stop offset="0" stop-color="#0062ff"/><stop offset="0.2405" stop-color="#0247ff"/><stop offset="0.3797" stop-color="#6d32ff"/><stop offset="0.4973" stop-color="#dd1cff"/><stop offset="0.528" stop-color="#fe15ff"/><stop offset="0.5949" stop-color="#ff04c3"/><stop offset="0.6618" stop-color="#ff009a"/><stop offset="0.7794" stop-color="#ff0069"/><stop offset="0.9548" stop-color="#ff003f"/><stop offset="1" stop-color="#ff0037"/></linearGradient><linearGradient id="c196" gradientUnits="userSpaceOnUse" x1="1630" x2="2173" y1="0" y2="0"><stop offset="0" stop-color="#0060ff"/><stop offset="0.2376" stop-color="#0044ff"/><stop offset="0.372" stop-color="#6331ff"/><stop offset="0.4917" stop-color="#d01bff"/><stop offset="0.5378" stop-color="#ff12fe"/><stop offset="0.5985" stop-color="#ff03c8"/><stop offset="0.6888" stop-color="#ff0092"/><stop offset="0.8158" stop-color="#ff0063"/><stop offset="0.9945" stop-color="#ff003b"/><stop offset="0.9963" stop-color="#ff003b"/><stop offset="0.9982" stop-color="#ff003b"/><stop offset="1" stop-color="#ff003a"/></linearGradient><linearGradient id="c197" gradientUnits="userSpaceOnUse" x1="1631" x2="2165" y1="0" y2="0"><stop offset="0" stop-color="#005dff"/><stop offset="0.2416" stop-color="#0241ff"/><stop offset="0.3858" stop-color="#6c2cff"/><stop offset="0.5075" stop-color="#d916ff"/><stop offset="0.5468" stop-color="#ff0efd"/><stop offset="0.6161" stop-color="#ff00c2"/><stop offset="0.7079" stop-color="#ff008f"/><stop offset="0.8371" stop-color="#ff0061"/><stop offset="0.9963" stop-color="#ff003e"/><stop offset="0.9981" stop-color="#ff003e"/><stop offset="1" stop-color="#ff003e"/></linearGradient><linearGradient id="c198" gradientUnits="userSpaceOnUse" x1="1633" x2="2156" y1="0" y2="0"><stop offset="0" stop-color="#005aff"/><stop offset="0.239" stop-color="#013fff"/><stop offset="0.3862" stop-color="#692aff"/><stop offset="0.5182" stop-color="#dd12ff"/><stop offset="0.5507" stop-color="#fd0cff"/><stop offset="0.6214" stop-color="#ff00c5"/><stop offset="0.7151" stop-color="#ff0091"/><stop offset="0.847" stop-color="#ff0063"/><stop offset="0.9943" stop-color="#ff0042"/><stop offset="0.9962" stop-color="#ff0042"/><stop offset="0.9981" stop-color="#ff0042"/><stop offset="1" stop-color="#ff0041"/></linearGradient><linearGradient id="c199" gradientUnits="userSpaceOnUse" x1="1634" x2="2148" y1="0" y2="0"><stop offset="0" stop-color="#0057ff"/><stop offset="0.2354" stop-color="#003dff"/><stop offset="0.3696" stop-color="#5a2aff"/><stop offset="0.5039" stop-color="#c913ff"/><stop offset="0.5603" stop-color="#ff08ff"/><stop offset="0.6167" stop-color="#ff00cf"/><stop offset="0.7043" stop-color="#ff009b"/><stop offset="0.8307" stop-color="#ff006c"/><stop offset="0.9961" stop-color="#ff0045"/><stop offset="0.9981" stop-color="#ff0045"/><stop offset="1" stop-color="#ff0045"/></linearGradient><linearGradient id="c200" gradientUnits="userSpaceOnUse" x1="1635" x2="2140" y1="0" y2="0"><stop offset="0" stop-color="#0055ff"/><stop offset="0.2396" stop-color="#013aff"/><stop offset="0.4" stop-color="#6e23ff"/><stop offset="0.5366" stop-color="#e00cff"/><stop offset="0.5703" stop-color="#ff05fe"/><stop offset="0.6277" stop-color="#ff00ce"/><stop offset="0.7168" stop-color="#ff009b"/><stop offset="0.8455" stop-color="#ff006c"/><stop offset="0.998" stop-color="#ff0049"/><stop offset="1" stop-color="#ff0048"/></linearGradient><linearGradient id="c201" gradientUnits="userSpaceOnUse" x1="1637" x2="2131" y1="0" y2="0"><stop offset="0" stop-color="#0052ff"/><stop offset="0.2368" stop-color="#0038ff"/><stop offset="0.4008" stop-color="#6c21ff"/><stop offset="0.5405" stop-color="#dc09ff"/><stop offset="0.5749" stop-color="#fc03ff"/><stop offset="0.666" stop-color="#ff00bd"/><stop offset="0.7733" stop-color="#ff0089"/><stop offset="0.9291" stop-color="#ff005b"/><stop offset="0.996" stop-color="#ff004d"/><stop offset="0.998" stop-color="#ff004d"/><stop offset="1" stop-color="#ff004c"/></linearGradient><linearGradient id="c202" gradientUnits="userSpaceOnUse" x1="1638" x2="2123" y1="0" y2="0"><stop offset="0" stop-color="#004fff"/><stop offset="0.2412" stop-color="#0335ff"/><stop offset="0.4082" stop-color="#6e1eff"/><stop offset="0.5505" stop-color="#de06ff"/><stop offset="0.5856" stop-color="#fe00ff"/><stop offset="0.6701" stop-color="#ff00c1"/><stop offset="0.7794" stop-color="#ff008c"/><stop offset="0.9299" stop-color="#ff005f"/><stop offset="0.9979" stop-color="#ff0050"/><stop offset="1" stop-color="#ff0050"/></linearGradient><linearGradient id="c203" gradientUnits="userSpaceOnUse" x1="1640" x2="2114" y1="0" y2="0"><stop offset="0" stop-color="#004cff"/><stop offset="0.2384" stop-color="#0133ff"/><stop offset="0.4093" stop-color="#6c1cff"/><stop offset="0.5549" stop-color="#db04ff"/><stop offset="0.5992" stop-color="#ff00fd"/><stop offset="0.6772" stop-color="#ff00c4"/><stop offset="0.7806" stop-color="#ff0092"/><stop offset="0.9346" stop-color="#ff0063"/><stop offset="0.9958" stop-color="#ff0055"/><stop offset="0.9979" stop-color="#ff0055"/><stop offset="1" stop-color="#ff0054"/></linearGradient><linearGradient id="c204" gradientUnits="userSpaceOnUse" x1="1641" x2="2106" y1="0" y2="0"><stop offset="0" stop-color="#004aff"/><stop offset="0.2344" stop-color="#0031ff"/><stop offset="0.4" stop-color="#621cff"/><stop offset="0.557" stop-color="#d502ff"/><stop offset="0.6022" stop-color="#fb00ff"/><stop offset="0.6215" stop-color="#ff00f3"/><stop offset="0.7097" stop-color="#ff00b9"/><stop offset="0.8323" stop-color="#ff0085"/><stop offset="0.9978" stop-color="#ff0059"/><stop offset="1" stop-color="#ff0059"/></linearGradient><linearGradient id="c205" gradientUnits="userSpaceOnUse" x1="1642" x2="2097" y1="0" y2="0"><stop offset="0" stop-color="#0047ff"/><stop offset="0.2396" stop-color="#022eff"/><stop offset="0.4176" stop-color="#6a17ff"/><stop offset="0.5692" stop-color="#d700ff"/><stop offset="0.6154" stop-color="#fd00ff"/><stop offset="0.7143" stop-color="#ff00be"/><stop offset="0.8308" stop-color="#ff008b"/><stop offset="1" stop-color="#ff005d"/></linearGradient><linearGradient id="c206" gradientUnits="userSpaceOnUse" x1="1644" x2="2089" y1="0" y2="0"><stop offset="0" stop-color="#0044ff"/><stop offset="0.236" stop-color="#012cff"/><stop offset="0.427" stop-color="#6e14ff"/><stop offset="0.573" stop-color="#d300ff"/><stop offset="0.6292" stop-color="#ff00fe"/><stop offset="0.7124" stop-color="#ff00c6"/><stop offset="0.8315" stop-color="#ff0091"/><stop offset="0.9955" stop-color="#ff0063"/><stop offset="0.9978" stop-color="#ff0062"/><stop offset="1" stop-color="#ff0062"/></linearGradient><linearGradient id="c207" gradientUnits="userSpaceOnUse" x1="1645" x2="2080" y1="0" y2="0"><stop offset="0" stop-color="#0042ff"/><stop offset="0.2414" stop-color="#032aff"/><stop offset="0.4368" stop-color="#7011ff"/><stop offset="0.5678" stop-color="#c800ff"/><stop offset="0.6437" stop-color="#ff00fd"/><stop offset="0.7287" stop-color="#ff00c5"/><stop offset="0.8506" stop-color="#ff0091"/><stop offset="1" stop-color="#ff0067"/></linearGradient><linearGradient id="c208" gradientUnits="userSpaceOnUse" x1="1647" x2="2072" y1="0" y2="0"><stop offset="0" stop-color="#003fff"/><stop offset="0.2376" stop-color="#0228ff"/><stop offset="0.4376" stop-color="#6e0fff"/><stop offset="0.5624" stop-color="#be00ff"/><stop offset="0.6494" stop-color="#fd00ff"/><stop offset="0.7553" stop-color="#ff00bf"/><stop offset="0.88" stop-color="#ff008d"/><stop offset="0.9953" stop-color="#ff006d"/><stop offset="0.9976" stop-color="#ff006c"/><stop offset="1" stop-color="#ff006c"/></linearGradient><linearGradient id="c209" gradientUnits="userSpaceOnUse" x1="1648" x2="2063" y1="0" y2="0"><stop offset="0" stop-color="#003dff"/><stop offset="0.2337" stop-color="#0026ff"/><stop offset="0.4386" stop-color="#6a0eff"/><stop offset="0.5566" stop-color="#b300ff"/><stop offset="0.6651" stop-color="#ff00ff"/><stop offset="0.7542" stop-color="#ff00c8"/><stop offset="0.8819" stop-color="#ff0093"/><stop offset="1" stop-color="#ff0072"/></linearGradient><linearGradient id="c210" gradientUnits="userSpaceOnUse" x1="1649" x2="2055" y1="0" y2="0"><stop offset="0" stop-color="#003aff"/><stop offset="0.2389" stop-color="#0223ff"/><stop offset="0.4483" stop-color="#6c0bff"/><stop offset="0.5493" stop-color="#a800ff"/><stop offset="0.6798" stop-color="#ff00fe"/><stop offset="0.7709" stop-color="#ff00c7"/><stop offset="0.9015" stop-color="#ff0093"/><stop offset="0.9926" stop-color="#ff0079"/><stop offset="0.9951" stop-color="#ff0078"/><stop offset="0.9975" stop-color="#ff0078"/><stop offset="1" stop-color="#ff0077"/></linearGradient><linearGradient id="c211" gradientUnits="userSpaceOnUse" x1="1651" x2="2046" y1="0" y2="0"><stop offset="0" stop-color="#0037ff"/><stop offset="0.2354" stop-color="#0122ff"/><stop offset="0.4506" stop-color="#6a09ff"/><stop offset="0.5443" stop-color="#9f00ff"/><stop offset="0.6886" stop-color="#fd00ff"/><stop offset="0.8127" stop-color="#ff00bc"/><stop offset="0.957" stop-color="#ff0089"/><stop offset="1" stop-color="#ff007d"/></linearGradient><linearGradient id="c212" gradientUnits="userSpaceOnUse" x1="1652" x2="2038" y1="0" y2="0"><stop offset="0" stop-color="#0035ff"/><stop offset="0.2306" stop-color="#0020ff"/><stop offset="0.4404" stop-color="#6109ff"/><stop offset="0.5466" stop-color="#9b00ff"/><stop offset="0.7047" stop-color="#fe00ff"/><stop offset="0.8109" stop-color="#ff00c4"/><stop offset="0.9482" stop-color="#ff0092"/><stop offset="0.9922" stop-color="#ff0085"/><stop offset="0.9948" stop-color="#ff0085"/><stop offset="0.9974" stop-color="#ff0084"/><stop offset="1" stop-color="#ff0083"/></linearGradient><linearGradient id="c213" gradientUnits="userSpaceOnUse" x1="1654" x2="2030" y1="0" y2="0"><stop offset="0" stop-color="#0032ff"/><stop offset="0.2367" stop-color="#021dff"/><stop offset="0.4734" stop-color="#6f03ff"/><stop offset="0.6676" stop-color="#dd00ff"/><stop offset="0.7234" stop-color="#ff00fd"/><stop offset="0.8324" stop-color="#ff00c3"/><stop offset="0.984" stop-color="#ff008e"/><stop offset="0.9973" stop-color="#ff008a"/><stop offset="1" stop-color="#ff0089"/></linearGradient><linearGradient id="c214" gradientUnits="userSpaceOnUse" x1="1655" x2="2021" y1="0" y2="0"><stop offset="0" stop-color="#0030ff"/><stop offset="0.2322" stop-color="#001cff"/><stop offset="0.4754" stop-color="#6c02ff"/><stop offset="0.6858" stop-color="#df00ff"/><stop offset="0.7322" stop-color="#fc00ff"/><stop offset="0.7787" stop-color="#ff00e7"/><stop offset="0.9016" stop-color="#ff00b0"/><stop offset="0.9918" stop-color="#ff0093"/><stop offset="0.9945" stop-color="#ff0092"/><stop offset="0.9973" stop-color="#ff0091"/><stop offset="1" stop-color="#ff0091"/></linearGradient><linearGradient id="c215" gradientUnits="userSpaceOnUse" x1="1657" x2="2013" y1="0" y2="0"><stop offset="0" stop-color="#002dff"/><stop offset="0.2275" stop-color="#001aff"/><stop offset="0.4663" stop-color="#6501ff"/><stop offset="0.6826" stop-color="#d500ff"/><stop offset="0.7528" stop-color="#ff00ff"/><stop offset="0.868" stop-color="#ff00c5"/><stop offset="0.9944" stop-color="#ff0099"/><stop offset="0.9972" stop-color="#ff0098"/><stop offset="1" stop-color="#ff0097"/></linearGradient><linearGradient id="c216" gradientUnits="userSpaceOnUse" x1="1659" x2="2004" y1="0" y2="0"><stop offset="0" stop-color="#002bff"/><stop offset="0.2348" stop-color="#0317ff"/><stop offset="0.4928" stop-color="#6d00ff"/><stop offset="0.7159" stop-color="#df00ff"/><stop offset="0.7768" stop-color="#ff00fc"/><stop offset="0.8957" stop-color="#ff00c3"/><stop offset="0.9913" stop-color="#ff00a2"/><stop offset="0.9942" stop-color="#ff00a1"/><stop offset="0.9971" stop-color="#ff00a0"/><stop offset="1" stop-color="#ff00a0"/></linearGradient><linearGradient id="c217" gradientUnits="userSpaceOnUse" x1="1660" x2="1996" y1="0" y2="0"><stop offset="0" stop-color="#0029ff"/><stop offset="0.2292" stop-color="#0116ff"/><stop offset="0.4821" stop-color="#6500ff"/><stop offset="0.7113" stop-color="#d300ff"/><stop offset="0.7857" stop-color="#fc00ff"/><stop offset="0.9315" stop-color="#ff00be"/><stop offset="0.994" stop-color="#ff00a9"/><stop offset="0.997" stop-color="#ff00a8"/><stop offset="1" stop-color="#ff00a7"/></linearGradient><linearGradient id="c218" gradientUnits="userSpaceOnUse" x1="1662" x2="1987" y1="0" y2="0"><stop offset="0" stop-color="#0026ff"/><stop offset="0.2246" stop-color="#0014ff"/><stop offset="0.4738" stop-color="#5e00ff"/><stop offset="0.7231" stop-color="#d000ff"/><stop offset="0.8123" stop-color="#ff00fe"/><stop offset="0.9385" stop-color="#ff00c5"/><stop offset="0.9908" stop-color="#ff00b3"/><stop offset="0.9938" stop-color="#ff00b2"/><stop offset="0.9969" stop-color="#ff00b1"/><stop offset="1" stop-color="#ff00b0"/></linearGradient><linearGradient id="c219" gradientUnits="userSpaceOnUse" x1="1663" x2="1979" y1="0" y2="0"><stop offset="0" stop-color="#0024ff"/><stop offset="0.231" stop-color="#0212ff"/><stop offset="0.462" stop-color="#5600ff"/><stop offset="0.7184" stop-color="#c500ff"/><stop offset="0.8354" stop-color="#ff00fd"/><stop offset="0.9652" stop-color="#ff00c5"/><stop offset="0.9937" stop-color="#ff00bb"/><stop offset="0.9968" stop-color="#ff00ba"/><stop offset="1" stop-color="#ff00b9"/></linearGradient><linearGradient id="c220" gradientUnits="userSpaceOnUse" x1="1665" x2="1970" y1="0" y2="0"><stop offset="0" stop-color="#0021ff"/><stop offset="0.2262" stop-color="#0110ff"/><stop offset="0.4525" stop-color="#4f00ff"/><stop offset="0.718" stop-color="#bc00ff"/><stop offset="0.8525" stop-color="#fd00ff"/><stop offset="1" stop-color="#ff00c3"/></linearGradient><linearGradient id="c221" gradientUnits="userSpaceOnUse" x1="1667" x2="1962" y1="0" y2="0"><stop offset="0" stop-color="#001fff"/><stop offset="0.2203" stop-color="#000fff"/><stop offset="0.4407" stop-color="#4800ff"/><stop offset="0.7288" stop-color="#ba00ff"/><stop offset="0.8814" stop-color="#ff00fe"/><stop offset="0.9932" stop-color="#ff00cf"/><stop offset="0.9966" stop-color="#ff00ce"/><stop offset="1" stop-color="#ff00cd"/></linearGradient><linearGradient id="c222" gradientUnits="userSpaceOnUse" x1="1669" x2="1953" y1="0" y2="0"><stop offset="0" stop-color="#001cff"/><stop offset="0.2289" stop-color="#030cff"/><stop offset="0.4296" stop-color="#4200ff"/><stop offset="0.7289" stop-color="#b100ff"/><stop offset="0.9014" stop-color="#fd00ff"/><stop offset="0.9894" stop-color="#ff00dc"/><stop offset="0.993" stop-color="#ff00db"/><stop offset="0.9965" stop-color="#ff00da"/><stop offset="1" stop-color="#ff00d8"/></linearGradient><linearGradient id="c223" gradientUnits="userSpaceOnUse" x1="1670" x2="1945" y1="0" y2="0"><stop offset="0" stop-color="#001aff"/><stop offset="0.2218" stop-color="#010bff"/><stop offset="0.4145" stop-color="#3b00ff"/><stop offset="0.7236" stop-color="#a700ff"/><stop offset="0.9309" stop-color="#fe00ff"/><stop offset="0.9927" stop-color="#ff00e6"/><stop offset="0.9964" stop-color="#ff00e5"/><stop offset="1" stop-color="#ff00e3"/></linearGradient><linearGradient id="c224" gradientUnits="userSpaceOnUse" x1="1672" x2="1936" y1="0" y2="0"><stop offset="0" stop-color="#0017ff"/><stop offset="0.2159" stop-color="#0009ff"/><stop offset="0.4015" stop-color="#3500ff"/><stop offset="0.7386" stop-color="#a500ff"/><stop offset="0.9697" stop-color="#ff00fd"/><stop offset="0.9886" stop-color="#ff00f5"/><stop offset="0.9924" stop-color="#ff00f4"/><stop offset="0.9962" stop-color="#ff00f2"/><stop offset="1" stop-color="#ff00f1"/></linearGradient><linearGradient id="c225" gradientUnits="userSpaceOnUse" x1="1674" x2="1928" y1="0" y2="0"><stop offset="0" stop-color="#0015ff"/><stop offset="0.2087" stop-color="#0008ff"/><stop offset="0.3858" stop-color="#2f00ff"/><stop offset="0.7362" stop-color="#9d00ff"/><stop offset="0.9921" stop-color="#fd00ff"/><stop offset="0.9961" stop-color="#ff00ff"/><stop offset="1" stop-color="#ff00fd"/></linearGradient><linearGradient id="c226" gradientUnits="userSpaceOnUse" x1="1676" x2="1920" y1="0" y2="0"><stop offset="0" stop-color="#0013ff"/><stop offset="0.2172" stop-color="#0205ff"/><stop offset="0.4016" stop-color="#3200ff"/><stop offset="0.7664" stop-color="#a000ff"/><stop offset="1" stop-color="#f400ff"/></linearGradient><linearGradient id="c227" gradientUnits="userSpaceOnUse" x1="1678" x2="1911" y1="0" y2="0"><stop offset="0" stop-color="#0010ff"/><stop offset="0.2103" stop-color="#0204ff"/><stop offset="0.4893" stop-color="#4700ff"/><stop offset="0.8712" stop-color="#b900ff"/><stop offset="0.9957" stop-color="#e400ff"/><stop offset="1" stop-color="#e500ff"/></linearGradient><linearGradient id="c228" gradientUnits="userSpaceOnUse" x1="1680" x2="1903" y1="0" y2="0"><stop offset="0" stop-color="#000eff"/><stop offset="0.2018" stop-color="#0102ff"/><stop offset="0.6368" stop-color="#6c00ff"/><stop offset="1" stop-color="#d900ff"/></linearGradient><linearGradient id="c229" gradientUnits="userSpaceOnUse" x1="1682" x2="1894" y1="0" y2="0"><stop offset="0" stop-color="#000bff"/><stop offset="0.1934" stop-color="#0001ff"/><stop offset="0.6509" stop-color="#6a00ff"/><stop offset="0.9953" stop-color="#ca00ff"/><stop offset="1" stop-color="#cc00ff"/></linearGradient><linearGradient id="c230" gradientUnits="userSpaceOnUse" x1="1684" x2="1886" y1="0" y2="0"><stop offset="0" stop-color="#0009ff"/><stop offset="0.203" stop-color="#0300ff"/><stop offset="0.6832" stop-color="#6d00ff"/><stop offset="0.9851" stop-color="#bc00ff"/><stop offset="0.9901" stop-color="#be00ff"/><stop offset="0.995" stop-color="#bf00ff"/><stop offset="1" stop-color="#c100ff"/></linearGradient><linearGradient id="c231" gradientUnits="userSpaceOnUse" x1="1686" x2="1877" y1="0" y2="0"><stop offset="0" stop-color="#0007ff"/><stop offset="0.1937" stop-color="#0200ff"/><stop offset="0.7225" stop-color="#7000ff"/><stop offset="1" stop-color="#b400ff"/></linearGradient><linearGradient id="c232" gradientUnits="userSpaceOnUse" x1="1689" x2="1869" y1="0" y2="0"><stop offset="0" stop-color="#0004ff"/><stop offset="0.1833" stop-color="#0200ff"/><stop offset="0.7444" stop-color="#6f00ff"/><stop offset="0.9944" stop-color="#a800ff"/><stop offset="1" stop-color="#aa00ff"/></linearGradient><linearGradient id="c233" gradientUnits="userSpaceOnUse" x1="1691" x2="1860" y1="0" y2="0"><stop offset="0" stop-color="#0002ff"/><stop offset="0.1716" stop-color="#0100ff"/><stop offset="0.7692" stop-color="#6d00ff"/><stop offset="0.9882" stop-color="#9b00ff"/><stop offset="0.9941" stop-color="#9d00ff"/><stop offset="1" stop-color="#9e00ff"/></linearGradient><linearGradient id="c234" gradientUnits="userSpaceOnUse" x1="1694" x2="1852" y1="0" y2="0"><stop offset="0" stop-color="#0000ff"/><stop offset="0.1582" stop-color="#0100ff"/><stop offset="0.7975" stop-color="#6d00ff"/><stop offset="0.981" stop-color="#9000ff"/><stop offset="0.9873" stop-color="#9100ff"/><stop offset="0.9937" stop-color="#9300ff"/><stop offset="1" stop-color="#9400ff"/></linearGradient><linearGradient id="c235" gradientUnits="userSpaceOnUse" x1="1696" x2="1843" y1="0" y2="0"><stop offset="0" stop-color="#0000ff"/><stop offset="0.1429" stop-color="#0000ff"/><stop offset="0.8299" stop-color="#6b00ff"/><stop offset="1" stop-color="#8900ff"/></linearGradient><linearGradient id="c236" gradientUnits="userSpaceOnUse" x1="1699" x2="1835" y1="0" y2="0"><stop offset="0" stop-color="#0000ff"/><stop offset="0.125" stop-color="#0000ff"/><stop offset="0.8676" stop-color="#6a00ff"/><stop offset="0.9926" stop-color="#7e00ff"/><stop offset="1" stop-color="#8000ff"/></linearGradient><linearGradient id="c237" gradientUnits="userSpaceOnUse" x1="1702" x2="1826" y1="0" y2="0"><stop offset="0" stop-color="#0000ff"/><stop offset="0.1371" stop-color="#0400ff"/><stop offset="0.9516" stop-color="#6e00ff"/><stop offset="0.9919" stop-color="#7400ff"/><stop offset="1" stop-color="#7500ff"/></linearGradient><linearGradient id="c238" gradientUnits="userSpaceOnUse" x1="1705" x2="1818" y1="0" y2="0"><stop offset="0" stop-color="#0000ff"/><stop offset="0.115" stop-color="#0400ff"/><stop offset="0.9735" stop-color="#6900ff"/><stop offset="0.9823" stop-color="#6a00ff"/><stop offset="0.9912" stop-color="#6b00ff"/><stop offset="1" stop-color="#6d00ff"/></linearGradient><linearGradient id="c239" gradientUnits="userSpaceOnUse" x1="1709" x2="1810" y1="0" y2="0"><stop offset="0" stop-color="#0000ff"/><stop offset="0.4851" stop-color="#2c00ff"/><stop offset="0.9703" stop-color="#6100ff"/><stop offset="0.9802" stop-color="#6200ff"/><stop offset="0.9901" stop-color="#6300ff"/><stop offset="1" stop-color="#6400ff"/></linearGradient><linearGradient id="c240" gradientUnits="userSpaceOnUse" x1="1712" x2="1801" y1="0" y2="0"><stop offset="0" stop-color="#0100ff"/><stop offset="1" stop-color="#5a00ff"/></linearGradient><linearGradient id="c241" gradientUnits="userSpaceOnUse" x1="1717" x2="1793" y1="0" y2="0"><stop offset="0" stop-color="#0600ff"/><stop offset="0.9605" stop-color="#4f00ff"/><stop offset="0.9737" stop-color="#5000ff"/><stop offset="0.9868" stop-color="#5100ff"/><stop offset="1" stop-color="#5200ff"/></linearGradient><linearGradient id="c242" gradientUnits="userSpaceOnUse" x1="1721" x2="1784" y1="0" y2="0"><stop offset="0" stop-color="#0b00ff"/><stop offset="0.9683" stop-color="#4700ff"/><stop offset="0.9841" stop-color="#4800ff"/><stop offset="1" stop-color="#4900ff"/></linearGradient><linearGradient id="c243" gradientUnits="userSpaceOnUse" x1="1725" x2="1776" y1="0" y2="0"><stop offset="0" stop-color="#1000ff"/><stop offset="0.9608" stop-color="#4000ff"/><stop offset="0.9804" stop-color="#4100ff"/><stop offset="1" stop-color="#4200ff"/></linearGradient><linearGradient id="c244" gradientUnits="userSpaceOnUse" x1="1730" x2="1767" y1="0" y2="0"><stop offset="0" stop-color="#1500ff"/><stop offset="1" stop-color="#3900ff"/></linearGradient><linearGradient id="c245" gradientUnits="userSpaceOnUse" x1="1734" x2="1759" y1="0" y2="0"><stop offset="0" stop-color="#1a00ff"/><stop offset="1" stop-color="#3200ff"/></linearGradient><linearGradient id="i0" gradientUnits="userSpaceOnUse" x1="2190" x2="2522" y1="0" y2="0"><stop offset="0" stop-color="#97ff00"/><stop offset="0.8102" stop-color="#fffd00"/><stop offset="0.994" stop-color="#ffe500"/><stop offset="0.997" stop-color="#ffe500"/><stop offset="1" stop-color="#ffe400"/></linearGradient><linearGradient id="i1" gradientUnits="userSpaceOnUse" x1="2190" x2="2522" y1="0" y2="0"><stop offset="0" stop-color="#98ff00"/><stop offset="0.7982" stop-color="#fffe00"/><stop offset="0.994" stop-color="#ffe400"/><stop offset="0.997" stop-color="#ffe400"/><stop offset="1" stop-color="#ffe300"/></linearGradient><linearGradient id="i2" gradientUnits="userSpaceOnUse" x1="2190" x2="2522" y1="0" y2="0"><stop offset="0" stop-color="#98ff00"/><stop offset="0.7982" stop-color="#fffd00"/><stop offset="0.994" stop-color="#ffe300"/><stop offset="0.997" stop-color="#ffe300"/><stop offset="1" stop-color="#ffe200"/></linearGradient><linearGradient id="i3" gradientUnits="userSpaceOnUse" x1="2190" x2="2522" y1="0" y2="0"><stop offset="0" stop-color="#99ff00"/><stop offset="0.7861" stop-color="#fffd00"/><stop offset="0.994" stop-color="#ffe200"/><stop offset="0.997" stop-color="#ffe200"/><stop offset="1" stop-color="#ffe100"/></linearGradient><linearGradient id="i4" gradientUnits="userSpaceOnUse" x1="2190" x2="2522" y1="0" y2="0"><stop offset="0" stop-color="#9aff00"/><stop offset="0.7741" stop-color="#fffd00"/><stop offset="0.994" stop-color="#ffe100"/><stop offset="0.997" stop-color="#ffe000"/><stop offset="1" stop-color="#ffe000"/></linearGradient><linearGradient id="i5" gradientUnits="userSpaceOnUse" x1="2190" x2="2522" y1="0" y2="0"><stop offset="0" stop-color="#9bff00"/><stop offset="0.762" stop-color="#fffe00"/><stop offset="0.994" stop-color="#ffe000"/><stop offset="0.997" stop-color="#ffdf00"/><stop offset="1" stop-color="#ffdf00"/></linearGradient><linearGradient id="i6" gradientUnits="userSpaceOnUse" x1="2190" x2="2522" y1="0" y2="0"><stop offset="0" stop-color="#9cff00"/><stop offset="0.762" stop-color="#fffd00"/><stop offset="0.994" stop-color="#ffdf00"/><stop offset="0.997" stop-color="#ffde00"/><stop offset="1" stop-color="#ffde00"/></linearGradient><linearGradient id="i7" gradientUnits="userSpaceOnUse" x1="2190" x2="2522" y1="0" y2="0"><stop offset="0" stop-color="#9dff00"/><stop offset="0.75" stop-color="#fffd00"/><stop offset="0.994" stop-color="#ffde00"/><stop offset="0.997" stop-color="#ffdd00"/><stop offset="1" stop-color="#ffdd00"/></linearGradient><linearGradient id="i8" gradientUnits="userSpaceOnUse" x1="2190" x2="2522" y1="0" y2="0"><stop offset="0" stop-color="#9eff01"/><stop offset="0.738" stop-color="#fffe00"/><stop offset="0.994" stop-color="#ffdd00"/><stop offset="0.997" stop-color="#ffdc00"/><stop offset="1" stop-color="#ffdc00"/></linearGradient><linearGradient id="i9" gradientUnits="userSpaceOnUse" x1="2190" x2="2522" y1="0" y2="0"><stop offset="0" stop-color="#9fff01"/><stop offset="0.7259" stop-color="#fffe00"/><stop offset="0.994" stop-color="#ffdb00"/><stop offset="0.997" stop-color="#ffdb00"/><stop offset="1" stop-color="#ffdb00"/></linearGradient><linearGradient id="i10" gradientUnits="userSpaceOnUse" x1="2190" x2="2522" y1="0" y2="0"><stop offset="0" stop-color="#9fff02"/><stop offset="0.7259" stop-color="#fffd00"/><stop offset="0.994" stop-color="#ffda00"/><stop offset="0.997" stop-color="#ffda00"/><stop offset="1" stop-color="#ffda00"/></linearGradient><linearGradient id="i11" gradientUnits="userSpaceOnUse" x1="2190" x2="2522" y1="0" y2="0"><stop offset="0" stop-color="#a0ff02"/><stop offset="0.7139" stop-color="#fffd00"/><stop offset="0.994" stop-color="#ffd900"/><stop offset="0.997" stop-color="#ffd900"/><stop offset="1" stop-color="#ffd900"/></linearGradient><linearGradient id="i12" gradientUnits="userSpaceOnUse" x1="2190" x2="2522" y1="0" y2="0"><stop offset="0" stop-color="#a1ff03"/><stop offset="0.7018" stop-color="#fffe00"/><stop offset="0.994" stop-color="#ffd800"/><stop offset="0.997" stop-color="#ffd800"/><stop offset="1" stop-color="#ffd800"/></linearGradient><linearGradient id="i13" gradientUnits="userSpaceOnUse" x1="2190" x2="2522" y1="0" y2="0"><stop offset="0" stop-color="#a2ff03"/><stop offset="0.4849" stop-color="#e2ff00"/><stop offset="0.6928" stop-color="#fffe00"/><stop offset="0.997" stop-color="#ffd700"/><stop offset="1" stop-color="#ffd700"/></linearGradient><linearGradient id="i14" gradientUnits="userSpaceOnUse" x1="2190" x2="2522" y1="0" y2="0"><stop offset="0" stop-color="#a3ff04"/><stop offset="0.3886" stop-color="#d6ff00"/><stop offset="0.6928" stop-color="#fffd00"/><stop offset="0.997" stop-color="#ffd600"/><stop offset="1" stop-color="#ffd600"/></linearGradient><linearGradient id="i15" gradientUnits="userSpaceOnUse" x1="2190" x2="2522" y1="0" y2="0"><stop offset="0" stop-color="#a4ff04"/><stop offset="0.3524" stop-color="#d2ff00"/><stop offset="0.6807" stop-color="#fffd00"/><stop offset="0.997" stop-color="#ffd500"/><stop offset="1" stop-color="#ffd400"/></linearGradient><linearGradient id="i16" gradientUnits="userSpaceOnUse" x1="2190" x2="2522" y1="0" y2="0"><stop offset="0" stop-color="#a5ff05"/><stop offset="0.3404" stop-color="#d2ff00"/><stop offset="0.6687" stop-color="#fffe00"/><stop offset="0.997" stop-color="#ffd400"/><stop offset="1" stop-color="#ffd300"/></linearGradient><linearGradient id="i17" gradientUnits="userSpaceOnUse" x1="2190" x2="2522" y1="0" y2="0"><stop offset="0" stop-color="#a6ff05"/><stop offset="0.3404" stop-color="#d3ff00"/><stop offset="0.6687" stop-color="#fffc00"/><stop offset="0.997" stop-color="#ffd300"/><stop offset="1" stop-color="#ffd200"/></linearGradient><linearGradient id="i18" gradientUnits="userSpaceOnUse" x1="2190" x2="2522" y1="0" y2="0"><stop offset="0" stop-color="#a7ff06"/><stop offset="0.3524" stop-color="#d5ff00"/><stop offset="0.6566" stop-color="#fffd00"/><stop offset="0.997" stop-color="#ffd200"/><stop offset="1" stop-color="#ffd100"/></linearGradient><linearGradient id="i19" gradientUnits="userSpaceOnUse" x1="2190" x2="2522" y1="0" y2="0"><stop offset="0" stop-color="#a8ff06"/><stop offset="0.3524" stop-color="#d7ff00"/><stop offset="0.6446" stop-color="#fffd00"/><stop offset="0.997" stop-color="#ffd100"/><stop offset="1" stop-color="#ffd000"/></linearGradient><linearGradient id="i20" gradientUnits="userSpaceOnUse" x1="2190" x2="2522" y1="0" y2="0"><stop offset="0" stop-color="#a9ff07"/><stop offset="0.3645" stop-color="#d9ff00"/><stop offset="0.6325" stop-color="#fffe00"/><stop offset="0.997" stop-color="#ffd000"/><stop offset="1" stop-color="#ffcf00"/></linearGradient><linearGradient id="i21" gradientUnits="userSpaceOnUse" x1="2190" x2="2522" y1="0" y2="0"><stop offset="0" stop-color="#a9ff08"/><stop offset="0.3765" stop-color="#dcff00"/><stop offset="0.6325" stop-color="#fffd00"/><stop offset="0.997" stop-color="#ffcf00"/><stop offset="1" stop-color="#ffce00"/></linearGradient><linearGradient id="i22" gradientUnits="userSpaceOnUse" x1="2190" x2="2522" y1="0" y2="0"><stop offset="0" stop-color="#aaff08"/><stop offset="0.4006" stop-color="#e1ff00"/><stop offset="0.6205" stop-color="#fffd00"/><stop offset="0.997" stop-color="#ffce00"/><stop offset="1" stop-color="#ffcd00"/></linearGradient><linearGradient id="i23" gradientUnits="userSpaceOnUse" x1="2190" x2="2522" y1="0" y2="0"><stop offset="0" stop-color="#abff09"/><stop offset="0.4127" stop-color="#e4ff00"/><stop offset="0.6084" stop-color="#fffe00"/><stop offset="0.997" stop-color="#ffcd00"/><stop offset="1" stop-color="#ffcc00"/></linearGradient><linearGradient id="i24" gradientUnits="userSpaceOnUse" x1="2190" x2="2522" y1="0" y2="0"><stop offset="0" stop-color="#acff09"/><stop offset="0.4247" stop-color="#e7ff00"/><stop offset="0.6084" stop-color="#fffc00"/><stop offset="0.997" stop-color="#ffcc00"/><stop offset="1" stop-color="#ffcb00"/></linearGradient><linearGradient id="i25" gradientUnits="userSpaceOnUse" x1="2190" x2="2522" y1="0" y2="0"><stop offset="0" stop-color="#adff0a"/><stop offset="0.4367" stop-color="#eaff00"/><stop offset="0.5964" stop-color="#fffd00"/><stop offset="0.997" stop-color="#ffcb00"/><stop offset="1" stop-color="#ffca00"/></linearGradient><linearGradient id="i26" gradientUnits="userSpaceOnUse" x1="2190" x2="2522" y1="0" y2="0"><stop offset="0" stop-color="#aeff0a"/><stop offset="0.4488" stop-color="#edff00"/><stop offset="0.5843" stop-color="#fffd00"/><stop offset="0.997" stop-color="#ffc900"/><stop offset="1" stop-color="#ffc900"/></linearGradient><linearGradient id="i27" gradientUnits="userSpaceOnUse" x1="2190" x2="2522" y1="0" y2="0"><stop offset="0" stop-color="#afff0b"/><stop offset="0.4729" stop-color="#f1ff00"/><stop offset="0.5843" stop-color="#fffc00"/><stop offset="0.997" stop-color="#ffc800"/><stop offset="1" stop-color="#ffc800"/></linearGradient><linearGradient id="i28" gradientUnits="userSpaceOnUse" x1="2190" x2="2522" y1="0" y2="0"><stop offset="0" stop-color="#b0ff0c"/><stop offset="0.4849" stop-color="#f4ff00"/><stop offset="0.5723" stop-color="#fffc00"/><stop offset="0.997" stop-color="#ffc700"/><stop offset="1" stop-color="#ffc700"/></linearGradient><linearGradient id="i29" gradientUnits="userSpaceOnUse" x1="2190" x2="2522" y1="0" y2="0"><stop offset="0" stop-color="#b1ff0c"/><stop offset="0.497" stop-color="#f7ff00"/><stop offset="0.5723" stop-color="#fffb00"/><stop offset="0.997" stop-color="#ffc600"/><stop offset="1" stop-color="#ffc600"/></linearGradient><linearGradient id="i30" gradientUnits="userSpaceOnUse" x1="2190" x2="2522" y1="0" y2="0"><stop offset="0" stop-color="#b2ff0d"/><stop offset="0.5211" stop-color="#fcff00"/><stop offset="0.994" stop-color="#ffc600"/><stop offset="0.997" stop-color="#ffc500"/><stop offset="1" stop-color="#ffc500"/></linearGradient><linearGradient id="i31" gradientUnits="userSpaceOnUse" x1="2190" x2="2522" y1="0" y2="0"><stop offset="0" stop-color="#b3ff0d"/><stop offset="0.5331" stop-color="#fffe00"/><stop offset="0.9578" stop-color="#ffc900"/><stop offset="0.997" stop-color="#ffc400"/><stop offset="1" stop-color="#ffc400"/></linearGradient><linearGradient id="i32" gradientUnits="userSpaceOnUse" x1="2190" x2="2522" y1="0" y2="0"><stop offset="0" stop-color="#b4ff0e"/><stop offset="0.5331" stop-color="#fffd00"/><stop offset="0.9578" stop-color="#ffc800"/><stop offset="0.997" stop-color="#ffc300"/><stop offset="1" stop-color="#ffc300"/></linearGradient><linearGradient id="i33" gradientUnits="userSpaceOnUse" x1="2190" x2="2522" y1="0" y2="0"><stop offset="0" stop-color="#b5ff0e"/><stop offset="0.5211" stop-color="#fffe00"/><stop offset="0.9458" stop-color="#ffc800"/><stop offset="0.997" stop-color="#ffc300"/><stop offset="1" stop-color="#ffc200"/></linearGradient><linearGradient id="i34" gradientUnits="userSpaceOnUse" x1="2190" x2="2522" y1="0" y2="0"><stop offset="0" stop-color="#b6ff0f"/><stop offset="0.509" stop-color="#fffe00"/><stop offset="0.9337" stop-color="#ffc800"/><stop offset="0.997" stop-color="#ffc200"/><stop offset="1" stop-color="#ffc100"/></linearGradient><linearGradient id="i35" gradientUnits="userSpaceOnUse" x1="2190" x2="2522" y1="0" y2="0"><stop offset="0" stop-color="#b7ff10"/><stop offset="0.509" stop-color="#fffd00"/><stop offset="0.9337" stop-color="#ffc700"/><stop offset="0.997" stop-color="#ffc100"/><stop offset="1" stop-color="#ffc000"/></linearGradient><linearGradient id="i36" gradientUnits="userSpaceOnUse" x1="2190" x2="2522" y1="0" y2="0"><stop offset="0" stop-color="#b8ff10"/><stop offset="0.497" stop-color="#fffd01"/><stop offset="0.9217" stop-color="#ffc700"/><stop offset="0.997" stop-color="#ffc000"/><stop offset="1" stop-color="#ffbf00"/></linearGradient><linearGradient id="i37" gradientUnits="userSpaceOnUse" x1="2190" x2="2522" y1="0" y2="0"><stop offset="0" stop-color="#b9ff11"/><stop offset="0.4849" stop-color="#fffe02"/><stop offset="0.9096" stop-color="#ffc800"/><stop offset="0.997" stop-color="#ffbf00"/><stop offset="1" stop-color="#ffbe00"/></linearGradient><linearGradient id="i38" gradientUnits="userSpaceOnUse" x1="2190" x2="2522" y1="0" y2="0"><stop offset="0" stop-color="#baff11"/><stop offset="0.4849" stop-color="#fffd03"/><stop offset="0.9096" stop-color="#ffc700"/><stop offset="0.997" stop-color="#ffbe00"/><stop offset="1" stop-color="#ffbd00"/></linearGradient><linearGradient id="i39" gradientUnits="userSpaceOnUse" x1="2190" x2="2522" y1="0" y2="0"><stop offset="0" stop-color="#bbff12"/><stop offset="0.4729" stop-color="#fffd04"/><stop offset="0.8253" stop-color="#ffcf00"/><stop offset="0.997" stop-color="#ffbd00"/><stop offset="1" stop-color="#ffbc00"/></linearGradient><linearGradient id="i40" gradientUnits="userSpaceOnUse" x1="2190" x2="2522" y1="0" y2="0"><stop offset="0" stop-color="#bdff13"/><stop offset="0.4608" stop-color="#fffe05"/><stop offset="0.7651" stop-color="#ffd500"/><stop offset="0.997" stop-color="#ffbc00"/><stop offset="1" stop-color="#ffbb00"/></linearGradient><linearGradient id="i41" gradientUnits="userSpaceOnUse" x1="2190" x2="2522" y1="0" y2="0"><stop offset="0" stop-color="#beff13"/><stop offset="0.4488" stop-color="#fffe06"/><stop offset="0.753" stop-color="#ffd500"/><stop offset="0.997" stop-color="#ffbb00"/><stop offset="1" stop-color="#ffba00"/></linearGradient><linearGradient id="i42" gradientUnits="userSpaceOnUse" x1="2190" x2="2522" y1="0" y2="0"><stop offset="0" stop-color="#bfff14"/><stop offset="0.4488" stop-color="#fffd06"/><stop offset="0.7651" stop-color="#ffd200"/><stop offset="0.997" stop-color="#ffba00"/><stop offset="1" stop-color="#ffb900"/></linearGradient><linearGradient id="i43" gradientUnits="userSpaceOnUse" x1="2190" x2="2522" y1="0" y2="0"><stop offset="0" stop-color="#c0ff15"/><stop offset="0.4367" stop-color="#fffd07"/><stop offset="0.7651" stop-color="#ffd100"/><stop offset="0.997" stop-color="#ffb900"/><stop offset="1" stop-color="#ffb800"/></linearGradient><linearGradient id="i44" gradientUnits="userSpaceOnUse" x1="2190" x2="2522" y1="0" y2="0"><stop offset="0" stop-color="#c1ff15"/><stop offset="0.4247" stop-color="#fffe08"/><stop offset="0.7771" stop-color="#ffcf00"/><stop offset="0.997" stop-color="#ffb800"/><stop offset="1" stop-color="#ffb800"/></linearGradient><linearGradient id="i45" gradientUnits="userSpaceOnUse" x1="2190" x2="2522" y1="0" y2="0"><stop offset="0" stop-color="#c2ff16"/><stop offset="0.4247" stop-color="#fffc09"/><stop offset="0.7892" stop-color="#ffcc00"/><stop offset="0.997" stop-color="#ffb700"/><stop offset="1" stop-color="#ffb700"/></linearGradient><linearGradient id="i46" gradientUnits="userSpaceOnUse" x1="2190" x2="2522" y1="0" y2="0"><stop offset="0" stop-color="#c3ff16"/><stop offset="0.4127" stop-color="#fffd0a"/><stop offset="0.8012" stop-color="#ffca00"/><stop offset="0.997" stop-color="#ffb600"/><stop offset="1" stop-color="#ffb600"/></linearGradient><linearGradient id="i47" gradientUnits="userSpaceOnUse" x1="2190" x2="2522" y1="0" y2="0"><stop offset="0" stop-color="#c4ff17"/><stop offset="0.4006" stop-color="#fffd0b"/><stop offset="0.8133" stop-color="#ffc800"/><stop offset="0.997" stop-color="#ffb500"/><stop offset="1" stop-color="#ffb500"/></linearGradient><linearGradient id="i48" gradientUnits="userSpaceOnUse" x1="2190" x2="2522" y1="0" y2="0"><stop offset="0" stop-color="#c5ff18"/><stop offset="0.3886" stop-color="#fffe0c"/><stop offset="0.8012" stop-color="#ffc800"/><stop offset="0.997" stop-color="#ffb400"/><stop offset="1" stop-color="#ffb400"/></linearGradient><linearGradient id="i49" gradientUnits="userSpaceOnUse" x1="2190" x2="2522" y1="0" y2="0"><stop offset="0" stop-color="#c6ff18"/><stop offset="0.3886" stop-color="#fffd0d"/><stop offset="0.8012" stop-color="#ffc700"/><stop offset="0.997" stop-color="#ffb300"/><stop offset="1" stop-color="#ffb300"/></linearGradient><linearGradient id="i50" gradientUnits="userSpaceOnUse" x1="2190" x2="2522" y1="0" y2="0"><stop offset="0" stop-color="#c7ff19"/><stop offset="0.3765" stop-color="#fffd0e"/><stop offset="0.7892" stop-color="#ffc700"/><stop offset="0.997" stop-color="#ffb200"/><stop offset="1" stop-color="#ffb200"/></linearGradient><linearGradient id="i51" gradientUnits="userSpaceOnUse" x1="2190" x2="2522" y1="0" y2="0"><stop offset="0" stop-color="#c9ff1a"/><stop offset="0.3645" stop-color="#fffe0f"/><stop offset="0.7651" stop-color="#ffc901"/><stop offset="0.997" stop-color="#ffb100"/><stop offset="1" stop-color="#ffb100"/></linearGradient><linearGradient id="i52" gradientUnits="userSpaceOnUse" x1="2190" x2="2522" y1="0" y2="0"><stop offset="0" stop-color="#caff1a"/><stop offset="0.3524" stop-color="#fffe10"/><stop offset="0.753" stop-color="#ffc902"/><stop offset="0.997" stop-color="#ffb000"/><stop offset="1" stop-color="#ffb000"/></linearGradient><linearGradient id="i53" gradientUnits="userSpaceOnUse" x1="2190" x2="2522" y1="0" y2="0"><stop offset="0" stop-color="#cbff1b"/><stop offset="0.3524" stop-color="#fffd10"/><stop offset="0.753" stop-color="#ffc802"/><stop offset="0.997" stop-color="#ffaf00"/><stop offset="1" stop-color="#ffaf00"/></linearGradient><linearGradient id="i54" gradientUnits="userSpaceOnUse" x1="2190" x2="2522" y1="0" y2="0"><stop offset="0" stop-color="#ccff1c"/><stop offset="0.3404" stop-color="#fffd11"/><stop offset="0.741" stop-color="#ffc803"/><stop offset="0.997" stop-color="#ffae00"/><stop offset="1" stop-color="#ffae00"/></linearGradient><linearGradient id="i55" gradientUnits="userSpaceOnUse" x1="2190" x2="2522" y1="0" y2="0"><stop offset="0" stop-color="#cdff1c"/><stop offset="0.3283" stop-color="#fffe12"/><stop offset="0.7289" stop-color="#ffc804"/><stop offset="0.997" stop-color="#ffad00"/><stop offset="1" stop-color="#ffad00"/></linearGradient><linearGradient id="i56" gradientUnits="userSpaceOnUse" x1="2190" x2="2522" y1="0" y2="0"><stop offset="0" stop-color="#ceff1d"/><stop offset="0.3283" stop-color="#fffd13"/><stop offset="0.7289" stop-color="#ffc705"/><stop offset="0.997" stop-color="#ffad00"/><stop offset="1" stop-color="#ffac00"/></linearGradient><linearGradient id="i57" gradientUnits="userSpaceOnUse" x1="2190" x2="2522" y1="0" y2="0"><stop offset="0" stop-color="#d0ff1e"/><stop offset="0.3163" stop-color="#fffd14"/><stop offset="0.7169" stop-color="#ffc805"/><stop offset="0.997" stop-color="#ffac00"/><stop offset="1" stop-color="#ffab00"/></linearGradient><linearGradient id="i58" gradientUnits="userSpaceOnUse" x1="2190" x2="2522" y1="0" y2="0"><stop offset="0" stop-color="#d1ff1f"/><stop offset="0.3042" stop-color="#fffe15"/><stop offset="0.7048" stop-color="#ffc806"/><stop offset="0.997" stop-color="#ffab00"/><stop offset="1" stop-color="#ffaa00"/></linearGradient><linearGradient id="i59" gradientUnits="userSpaceOnUse" x1="2190" x2="2522" y1="0" y2="0"><stop offset="0" stop-color="#d2ff1f"/><stop offset="0.2922" stop-color="#fffe16"/><stop offset="0.6928" stop-color="#ffc807"/><stop offset="0.997" stop-color="#ffaa00"/><stop offset="1" stop-color="#ffaa00"/></linearGradient><linearGradient id="i60" gradientUnits="userSpaceOnUse" x1="2190" x2="2522" y1="0" y2="0"><stop offset="0" stop-color="#d3ff20"/><stop offset="0.2922" stop-color="#fffd17"/><stop offset="0.6928" stop-color="#ffc708"/><stop offset="0.997" stop-color="#ffa900"/><stop offset="1" stop-color="#ffa900"/></linearGradient><linearGradient id="i61" gradientUnits="userSpaceOnUse" x1="2190" x2="2522" y1="0" y2="0"><stop offset="0" stop-color="#d4ff21"/><stop offset="0.2801" stop-color="#fffd18"/><stop offset="0.6807" stop-color="#ffc709"/><stop offset="0.997" stop-color="#ffa800"/><stop offset="1" stop-color="#ffa800"/></linearGradient><linearGradient id="i62" gradientUnits="userSpaceOnUse" x1="2190" x2="2522" y1="0" y2="0"><stop offset="0" stop-color="#d6ff21"/><stop offset="0.2681" stop-color="#fffe19"/><stop offset="0.6687" stop-color="#ffc809"/><stop offset="0.997" stop-color="#ffa700"/><stop offset="1" stop-color="#ffa700"/></linearGradient><linearGradient id="i63" gradientUnits="userSpaceOnUse" x1="2190" x2="2522" y1="0" y2="0"><stop offset="0" stop-color="#d7ff22"/><stop offset="0.2681" stop-color="#fffc1a"/><stop offset="0.6687" stop-color="#ffc60a"/><stop offset="0.997" stop-color="#ffa601"/><stop offset="1" stop-color="#ffa600"/></linearGradient><linearGradient id="i64" gradientUnits="userSpaceOnUse" x1="2190" x2="2522" y1="0" y2="0"><stop offset="0" stop-color="#d8ff23"/><stop offset="0.256" stop-color="#fffd1b"/><stop offset="0.6566" stop-color="#ffc70b"/><stop offset="0.997" stop-color="#ffa501"/><stop offset="1" stop-color="#ffa501"/></linearGradient><linearGradient id="i65" gradientUnits="userSpaceOnUse" x1="2190" x2="2522" y1="0" y2="0"><stop offset="0" stop-color="#d9ff24"/><stop offset="0.244" stop-color="#fffe1c"/><stop offset="0.6325" stop-color="#ffc80c"/><stop offset="0.997" stop-color="#ffa401"/><stop offset="1" stop-color="#ffa401"/></linearGradient><linearGradient id="i66" gradientUnits="userSpaceOnUse" x1="2190" x2="2522" y1="0" y2="0"><stop offset="0" stop-color="#dbff24"/><stop offset="0.2319" stop-color="#fffe1d"/><stop offset="0.6205" stop-color="#ffc90d"/><stop offset="0.997" stop-color="#ffa302"/><stop offset="1" stop-color="#ffa302"/></linearGradient><linearGradient id="i67" gradientUnits="userSpaceOnUse" x1="2190" x2="2522" y1="0" y2="0"><stop offset="0" stop-color="#dcff25"/><stop offset="0.2319" stop-color="#fffd1e"/><stop offset="0.6205" stop-color="#ffc80e"/><stop offset="0.997" stop-color="#ffa302"/><stop offset="1" stop-color="#ffa202"/></linearGradient><linearGradient id="i68" gradientUnits="userSpaceOnUse" x1="2190" x2="2522" y1="0" y2="0"><stop offset="0" stop-color="#ddff26"/><stop offset="0.2199" stop-color="#fffd1f"/><stop offset="0.6084" stop-color="#ffc80f"/><stop offset="0.997" stop-color="#ffa203"/><stop offset="1" stop-color="#ffa103"/></linearGradient><linearGradient id="i69" gradientUnits="userSpaceOnUse" x1="2190" x2="2522" y1="0" y2="0"><stop offset="0" stop-color="#deff26"/><stop offset="0.2078" stop-color="#fffe20"/><stop offset="0.5964" stop-color="#ffc80f"/><stop offset="0.997" stop-color="#ffa103"/><stop offset="1" stop-color="#ffa103"/></linearGradient>
<clipPath id="cpH"><polygon points="1748.5,896.3 1742.4,896.0 1742.1,895.8 1741.6,895.5 1741.2,895.2 1740.6,894.8 1740.0,894.4 1739.4,894.0 1738.9,893.6 1738.3,893.2 1737.7,892.8 1737.0,892.4 1736.3,891.9 1735.6,891.4 1734.8,890.9 1734.0,890.4 1733.1,889.8 1732.2,889.2 1731.3,888.6 1730.3,888.0 1729.3,887.3 1728.3,886.6 1727.2,885.9 1726.1,885.2 1725.0,884.4 1723.8,883.5 1722.5,882.6 1721.2,881.7 1719.9,880.7 1718.5,879.6 1717.1,878.5 1715.6,877.3 1714.0,876.0 1712.5,874.7 1710.9,873.3 1709.2,871.8 1707.5,870.1 1705.6,868.2 1703.6,866.1 1701.6,863.8 1699.4,861.3 1697.1,858.6 1694.7,855.6 1692.3,852.3 1689.7,848.7 1687.0,845.0 1684.3,840.9 1681.4,836.6 1678.4,831.8 1675.3,826.5 1672.0,820.8 1668.7,814.7 1665.2,808.2 1661.6,801.3 1657.8,793.8 1653.9,785.7 1649.8,777.0 1645.5,767.8 1641.0,758.1 1636.5,747.8 1631.9,736.8 1627.4,725.2 1622.9,712.8 1618.3,699.7 1613.7,686.0 1609.1,671.6 1604.6,656.7 1600.1,641.3 1595.7,625.1 1591.2,608.2 1586.7,590.7 1582.4,572.8 1578.3,554.7 1574.5,536.6 1570.9,518.2 1567.5,499.5 1564.3,480.6 1561.3,461.7 1558.7,443.0 1556.6,424.7 1554.8,406.8 1553.3,388.9 1552.2,371.3 1551.5,354.0 1551.3,337.3 1551.6,321.2 1552.3,305.6 1553.6,290.4 1555.3,275.7 1557.4,261.7 1560.1,248.5 1563.3,236.3 1567.0,225.0 1571.3,214.5 1576.0,204.7 1581.2,195.9 1586.8,188.1 1592.5,181.3 1598.7,175.8 1605.3,171.3 1612.2,167.8 1619.3,165.2 1626.6,163.3 1634.0,162.0 1641.4,161.4 1649.1,161.8 1657.0,163.0 1664.9,164.7 1672.8,166.6 1680.7,168.7 1688.6,171.0 1696.5,173.8 1704.5,176.8 1712.5,180.1 1720.3,183.4 1728.1,186.8 1735.7,190.1 1743.3,193.6 1750.7,197.2 1758.1,200.9 1765.5,204.6 1772.8,208.4 1780.1,212.3 1787.3,216.2 1794.4,220.2 1801.6,224.3 1808.7,228.5 1815.8,232.7 1822.9,237.0 1830.0,241.3 1837.0,245.8 1844.1,250.2 1851.1,254.8 1858.1,259.4 1865.2,264.0 1872.2,268.7 1879.1,273.4 1886.1,278.2 1893.1,283.0 1900.1,287.8 1907.0,292.7 1914.0,297.6 1920.9,302.6 1927.9,307.5 1934.9,312.5 1941.8,317.5 1948.8,322.6 1955.8,327.7 1962.8,332.8 1969.8,337.9 1976.8,343.0 1983.8,348.1 1990.7,353.3 1997.7,358.5 2004.6,363.6 2011.6,368.8 2018.5,374.0 2025.4,379.2 2032.4,384.4 2039.3,389.6 2046.2,394.7 2053.1,399.9 2060.0,405.1 2066.9,410.2 2073.7,415.4 2080.5,420.5 2087.3,425.7 2094.1,430.8 2100.8,435.9 2107.5,440.9 2114.1,446.0 2120.8,451.0 2127.4,456.0 2133.9,461.0 2140.5,465.9 2146.9,470.8 2153.4,475.7 2159.7,480.5 2166.1,485.3 2172.4,490.1 2178.6,494.8 2184.7,499.5 2190.8,504.1 2196.9,508.6 2202.9,513.1 2208.8,517.6 2214.6,522.0 2220.3,526.3 2226.0,530.6 2231.5,534.8 2237.0,539.0 2242.4,543.1 2247.6,547.1 2252.8,551.0 2257.7,554.8 2262.6,558.4 2267.3,562.0 2272.0,565.5 2276.5,569.0 2281.0,572.3 2285.3,575.6 2289.6,578.9 2293.9,582.1 2297.9,585.2 2301.9,588.2 2305.8,591.1 2309.5,593.9 2313.1,596.6 2316.6,599.2 2320.0,601.7 2323.2,604.2 2326.4,606.6 2329.4,608.9 2332.4,611.1 2335.2,613.3 2337.9,615.3 2340.6,617.4 2343.1,619.3 2345.6,621.2 2347.9,622.9 2350.2,624.7 2352.3,626.3 2354.4,627.9 2356.5,629.4 2358.4,630.9 2360.3,632.3 2362.1,633.7 2363.8,635.0 2365.5,636.2 2367.1,637.4 2368.7,638.6 2370.2,639.8 2371.6,640.9 2373.0,641.9 2374.3,642.9 2375.7,643.9 2377.0,644.9 2378.2,645.9 2379.4,646.8 2380.6,647.7 2381.7,648.5 2382.8,649.4 2383.9,650.2 2384.9,651.0 2385.9,651.7 2386.8,652.4 2387.8,653.1 2388.7,653.8 2389.5,654.5 2390.4,655.1 2391.1,655.7 2391.9,656.2 2392.6,656.8 2393.3,657.3 2394.0,657.8 2394.6,658.3 2395.2,658.7 2395.8,659.1 2396.3,659.6 2396.9,659.9 2397.4,660.3 2397.8,660.7 2398.3,661.0 2398.7,661.4 2399.1,661.7 2399.5,662.0 2399.9,662.3 2400.3,662.6 2400.7,662.9 2401.0,663.1 2401.3,663.3 2401.5,663.5 2402.2,664.6"/></clipPath><clipPath id="cpT"><polygon points="2296.2,610.1 1898.2,369.9 1722.6,850.3"/></clipPath>
<clipPath id="cpI"><rect x="2190.5" y="166.5" width="331.0" height="278.5"/></clipPath>
<clipPath id="cpIT"><polygon points="3414.7,1013.3 1783.7,-76.5 1064.1,2103.1"/></clipPath>
<g id="crows"><rect x="1622" y="160.00" width="41" height="3.60" fill="url(#c0)"/><rect x="1611" y="163.00" width="66" height="3.60" fill="url(#c1)"/><rect x="1603" y="166.00" width="85" height="3.60" fill="url(#c2)"/><rect x="1598" y="169.00" width="100" height="3.60" fill="url(#c3)"/><rect x="1593" y="172.00" width="113" height="3.60" fill="url(#c4)"/><rect x="1590" y="175.00" width="124" height="3.60" fill="url(#c5)"/><rect x="1586" y="178.00" width="135" height="3.60" fill="url(#c6)"/><rect x="1584" y="181.00" width="144" height="3.60" fill="url(#c7)"/><rect x="1581" y="184.00" width="154" height="3.60" fill="url(#c8)"/><rect x="1579" y="187.00" width="163" height="3.60" fill="url(#c9)"/><rect x="1577" y="190.00" width="171" height="3.60" fill="url(#c10)"/><rect x="1575" y="193.00" width="180" height="3.60" fill="url(#c11)"/><rect x="1573" y="196.00" width="188" height="3.60" fill="url(#c12)"/><rect x="1571" y="199.00" width="196" height="3.60" fill="url(#c13)"/><rect x="1569" y="202.00" width="204" height="3.60" fill="url(#c14)"/><rect x="1568" y="205.00" width="211" height="3.60" fill="url(#c15)"/><rect x="1566" y="208.00" width="218" height="3.60" fill="url(#c16)"/><rect x="1565" y="211.00" width="225" height="3.60" fill="url(#c17)"/><rect x="1564" y="214.00" width="231" height="3.60" fill="url(#c18)"/><rect x="1563" y="217.00" width="238" height="3.60" fill="url(#c19)"/><rect x="1561" y="220.00" width="245" height="3.60" fill="url(#c20)"/><rect x="1560" y="223.00" width="251" height="3.60" fill="url(#c21)"/><rect x="1559" y="226.00" width="257" height="3.60" fill="url(#c22)"/><rect x="1558" y="229.00" width="263" height="3.60" fill="url(#c23)"/><rect x="1557" y="232.00" width="269" height="3.60" fill="url(#c24)"/><rect x="1556" y="235.00" width="275" height="3.60" fill="url(#c25)"/><rect x="1556" y="238.00" width="280" height="3.60" fill="url(#c26)"/><rect x="1555" y="241.00" width="286" height="3.60" fill="url(#c27)"/><rect x="1554" y="244.00" width="291" height="3.60" fill="url(#c28)"/><rect x="1553" y="247.00" width="297" height="3.60" fill="url(#c29)"/><rect x="1553" y="250.00" width="302" height="3.60" fill="url(#c30)"/><rect x="1552" y="253.00" width="307" height="3.60" fill="url(#c31)"/><rect x="1551" y="256.00" width="313" height="3.60" fill="url(#c32)"/><rect x="1551" y="259.00" width="318" height="3.60" fill="url(#c33)"/><rect x="1550" y="262.00" width="323" height="3.60" fill="url(#c34)"/><rect x="1550" y="265.00" width="328" height="3.60" fill="url(#c35)"/><rect x="1550" y="268.00" width="332" height="3.60" fill="url(#c36)"/><rect x="1549" y="271.00" width="338" height="3.60" fill="url(#c37)"/><rect x="1549" y="274.00" width="342" height="3.60" fill="url(#c38)"/><rect x="1548" y="277.00" width="347" height="3.60" fill="url(#c39)"/><rect x="1548" y="280.00" width="352" height="3.60" fill="url(#c40)"/><rect x="1548" y="283.00" width="356" height="3.60" fill="url(#c41)"/><rect x="1548" y="286.00" width="360" height="3.60" fill="url(#c42)"/><rect x="1548" y="289.00" width="365" height="3.60" fill="url(#c43)"/><rect x="1548" y="292.00" width="369" height="3.60" fill="url(#c44)"/><rect x="1548" y="295.00" width="373" height="3.60" fill="url(#c45)"/><rect x="1548" y="298.00" width="377" height="3.60" fill="url(#c46)"/><rect x="1548" y="301.00" width="381" height="3.60" fill="url(#c47)"/><rect x="1548" y="304.00" width="386" height="3.60" fill="url(#c48)"/><rect x="1548" y="307.00" width="390" height="3.60" fill="url(#c49)"/><rect x="1548" y="310.00" width="394" height="3.60" fill="url(#c50)"/><rect x="1548" y="313.00" width="398" height="3.60" fill="url(#c51)"/><rect x="1548" y="316.00" width="402" height="3.60" fill="url(#c52)"/><rect x="1548" y="319.00" width="407" height="3.60" fill="url(#c53)"/><rect x="1548" y="322.00" width="411" height="3.60" fill="url(#c54)"/><rect x="1548" y="325.00" width="415" height="3.60" fill="url(#c55)"/><rect x="1548" y="328.00" width="419" height="3.60" fill="url(#c56)"/><rect x="1548" y="331.00" width="423" height="3.60" fill="url(#c57)"/><rect x="1548" y="334.00" width="427" height="3.60" fill="url(#c58)"/><rect x="1548" y="337.00" width="431" height="3.60" fill="url(#c59)"/><rect x="1548" y="340.00" width="435" height="3.60" fill="url(#c60)"/><rect x="1548" y="343.00" width="439" height="3.60" fill="url(#c61)"/><rect x="1548" y="346.00" width="443" height="3.60" fill="url(#c62)"/><rect x="1548" y="349.00" width="447" height="3.60" fill="url(#c63)"/><rect x="1548" y="352.00" width="452" height="3.60" fill="url(#c64)"/><rect x="1548" y="355.00" width="456" height="3.60" fill="url(#c65)"/><rect x="1548" y="358.00" width="460" height="3.60" fill="url(#c66)"/><rect x="1548" y="361.00" width="464" height="3.60" fill="url(#c67)"/><rect x="1548" y="364.00" width="468" height="3.60" fill="url(#c68)"/><rect x="1548" y="367.00" width="472" height="3.60" fill="url(#c69)"/><rect x="1548" y="370.00" width="476" height="3.60" fill="url(#c70)"/><rect x="1548" y="373.00" width="480" height="3.60" fill="url(#c71)"/><rect x="1548" y="376.00" width="484" height="3.60" fill="url(#c72)"/><rect x="1548" y="379.00" width="488" height="3.60" fill="url(#c73)"/><rect x="1548" y="382.00" width="492" height="3.60" fill="url(#c74)"/><rect x="1548" y="385.00" width="496" height="3.60" fill="url(#c75)"/><rect x="1548" y="388.00" width="500" height="3.60" fill="url(#c76)"/><rect x="1548" y="391.00" width="504" height="3.60" fill="url(#c77)"/><rect x="1548" y="394.00" width="508" height="3.60" fill="url(#c78)"/><rect x="1548" y="397.00" width="512" height="3.60" fill="url(#c79)"/><rect x="1548" y="400.00" width="516" height="3.60" fill="url(#c80)"/><rect x="1548" y="403.00" width="520" height="3.60" fill="url(#c81)"/><rect x="1548" y="406.00" width="524" height="3.60" fill="url(#c82)"/><rect x="1549" y="409.00" width="527" height="3.60" fill="url(#c83)"/><rect x="1549" y="412.00" width="531" height="3.60" fill="url(#c84)"/><rect x="1549" y="415.00" width="535" height="3.60" fill="url(#c85)"/><rect x="1549" y="418.00" width="539" height="3.60" fill="url(#c86)"/><rect x="1550" y="421.00" width="542" height="3.60" fill="url(#c87)"/><rect x="1550" y="424.00" width="546" height="3.60" fill="url(#c88)"/><rect x="1550" y="427.00" width="550" height="3.60" fill="url(#c89)"/><rect x="1551" y="430.00" width="553" height="3.60" fill="url(#c90)"/><rect x="1551" y="433.00" width="556" height="3.60" fill="url(#c91)"/><rect x="1551" y="436.00" width="560" height="3.60" fill="url(#c92)"/><rect x="1552" y="439.00" width="563" height="3.60" fill="url(#c93)"/><rect x="1552" y="442.00" width="567" height="3.60" fill="url(#c94)"/><rect x="1553" y="445.00" width="570" height="3.60" fill="url(#c95)"/><rect x="1553" y="448.00" width="574" height="3.60" fill="url(#c96)"/><rect x="1553" y="451.00" width="578" height="3.60" fill="url(#c97)"/><rect x="1554" y="454.00" width="581" height="3.60" fill="url(#c98)"/><rect x="1554" y="457.00" width="585" height="3.60" fill="url(#c99)"/><rect x="1555" y="460.00" width="588" height="3.60" fill="url(#c100)"/><rect x="1555" y="463.00" width="592" height="3.60" fill="url(#c101)"/><rect x="1556" y="466.00" width="595" height="3.60" fill="url(#c102)"/><rect x="1556" y="469.00" width="599" height="3.60" fill="url(#c103)"/><rect x="1556" y="472.00" width="603" height="3.60" fill="url(#c104)"/><rect x="1557" y="475.00" width="606" height="3.60" fill="url(#c105)"/><rect x="1557" y="478.00" width="610" height="3.60" fill="url(#c106)"/><rect x="1558" y="481.00" width="613" height="3.60" fill="url(#c107)"/><rect x="1558" y="484.00" width="617" height="3.60" fill="url(#c108)"/><rect x="1559" y="487.00" width="620" height="3.60" fill="url(#c109)"/><rect x="1559" y="490.00" width="624" height="3.60" fill="url(#c110)"/><rect x="1560" y="493.00" width="627" height="3.60" fill="url(#c111)"/><rect x="1560" y="496.00" width="631" height="3.60" fill="url(#c112)"/><rect x="1561" y="499.00" width="634" height="3.60" fill="url(#c113)"/><rect x="1561" y="502.00" width="638" height="3.60" fill="url(#c114)"/><rect x="1562" y="505.00" width="641" height="3.60" fill="url(#c115)"/><rect x="1563" y="508.00" width="644" height="3.60" fill="url(#c116)"/><rect x="1563" y="511.00" width="648" height="3.60" fill="url(#c117)"/><rect x="1564" y="514.00" width="650" height="3.60" fill="url(#c118)"/><rect x="1564" y="517.00" width="654" height="3.60" fill="url(#c119)"/><rect x="1565" y="520.00" width="657" height="3.60" fill="url(#c120)"/><rect x="1565" y="523.00" width="661" height="3.60" fill="url(#c121)"/><rect x="1566" y="526.00" width="664" height="3.60" fill="url(#c122)"/><rect x="1567" y="529.00" width="667" height="3.60" fill="url(#c123)"/><rect x="1567" y="532.00" width="671" height="3.60" fill="url(#c124)"/><rect x="1568" y="535.00" width="674" height="3.60" fill="url(#c125)"/><rect x="1568" y="538.00" width="678" height="3.60" fill="url(#c126)"/><rect x="1569" y="541.00" width="681" height="3.60" fill="url(#c127)"/><rect x="1570" y="544.00" width="684" height="3.60" fill="url(#c128)"/><rect x="1570" y="547.00" width="688" height="3.60" fill="url(#c129)"/><rect x="1571" y="550.00" width="691" height="3.60" fill="url(#c130)"/><rect x="1571" y="553.00" width="695" height="3.60" fill="url(#c131)"/><rect x="1572" y="556.00" width="698" height="3.60" fill="url(#c132)"/><rect x="1573" y="559.00" width="701" height="3.60" fill="url(#c133)"/><rect x="1573" y="562.00" width="705" height="3.60" fill="url(#c134)"/><rect x="1574" y="565.00" width="708" height="3.60" fill="url(#c135)"/><rect x="1575" y="568.00" width="711" height="3.60" fill="url(#c136)"/><rect x="1576" y="571.00" width="714" height="3.60" fill="url(#c137)"/><rect x="1576" y="574.00" width="718" height="3.60" fill="url(#c138)"/><rect x="1577" y="577.00" width="721" height="3.60" fill="url(#c139)"/><rect x="1578" y="580.00" width="724" height="3.60" fill="url(#c140)"/><rect x="1578" y="583.00" width="728" height="3.60" fill="url(#c141)"/><rect x="1579" y="586.00" width="731" height="3.60" fill="url(#c142)"/><rect x="1580" y="589.00" width="733" height="3.60" fill="url(#c143)"/><rect x="1581" y="592.00" width="736" height="3.60" fill="url(#c144)"/><rect x="1581" y="595.00" width="740" height="3.60" fill="url(#c145)"/><rect x="1582" y="598.00" width="743" height="3.60" fill="url(#c146)"/><rect x="1583" y="601.00" width="746" height="3.60" fill="url(#c147)"/><rect x="1584" y="604.00" width="749" height="3.60" fill="url(#c148)"/><rect x="1584" y="607.00" width="753" height="3.60" fill="url(#c149)"/><rect x="1585" y="610.00" width="756" height="3.60" fill="url(#c150)"/><rect x="1586" y="613.00" width="759" height="3.60" fill="url(#c151)"/><rect x="1587" y="616.00" width="762" height="3.60" fill="url(#c152)"/><rect x="1588" y="619.00" width="765" height="3.60" fill="url(#c153)"/><rect x="1588" y="622.00" width="769" height="3.60" fill="url(#c154)"/><rect x="1589" y="625.00" width="772" height="3.60" fill="url(#c155)"/><rect x="1590" y="628.00" width="775" height="3.60" fill="url(#c156)"/><rect x="1591" y="631.00" width="778" height="3.60" fill="url(#c157)"/><rect x="1592" y="634.00" width="781" height="3.60" fill="url(#c158)"/><rect x="1592" y="637.00" width="785" height="3.60" fill="url(#c159)"/><rect x="1593" y="640.00" width="788" height="3.60" fill="url(#c160)"/><rect x="1594" y="643.00" width="791" height="3.60" fill="url(#c161)"/><rect x="1595" y="646.00" width="794" height="3.60" fill="url(#c162)"/><rect x="1596" y="649.00" width="797" height="3.60" fill="url(#c163)"/><rect x="1597" y="652.00" width="800" height="3.60" fill="url(#c164)"/><rect x="1598" y="655.00" width="803" height="3.60" fill="url(#c165)"/><rect x="1598" y="658.00" width="807" height="3.60" fill="url(#c166)"/><rect x="1599" y="661.00" width="809" height="3.60" fill="url(#c167)"/><rect x="1600" y="664.00" width="808" height="3.60" fill="url(#c168)"/><rect x="1601" y="667.00" width="801" height="3.60" fill="url(#c169)"/><rect x="1602" y="670.00" width="791" height="3.60" fill="url(#c170)"/><rect x="1603" y="673.00" width="782" height="3.60" fill="url(#c171)"/><rect x="1604" y="676.00" width="773" height="3.60" fill="url(#c172)"/><rect x="1605" y="679.00" width="763" height="3.60" fill="url(#c173)"/><rect x="1606" y="682.00" width="754" height="3.60" fill="url(#c174)"/><rect x="1607" y="685.00" width="744" height="3.60" fill="url(#c175)"/><rect x="1608" y="688.00" width="735" height="3.60" fill="url(#c176)"/><rect x="1609" y="691.00" width="725" height="3.60" fill="url(#c177)"/><rect x="1610" y="694.00" width="716" height="3.60" fill="url(#c178)"/><rect x="1611" y="697.00" width="706" height="3.60" fill="url(#c179)"/><rect x="1612" y="700.00" width="697" height="3.60" fill="url(#c180)"/><rect x="1613" y="703.00" width="687" height="3.60" fill="url(#c181)"/><rect x="1614" y="706.00" width="678" height="3.60" fill="url(#c182)"/><rect x="1615" y="709.00" width="668" height="3.60" fill="url(#c183)"/><rect x="1616" y="712.00" width="659" height="3.60" fill="url(#c184)"/><rect x="1617" y="715.00" width="649" height="3.60" fill="url(#c185)"/><rect x="1618" y="718.00" width="640" height="3.60" fill="url(#c186)"/><rect x="1619" y="721.00" width="631" height="3.60" fill="url(#c187)"/><rect x="1620" y="724.00" width="621" height="3.60" fill="url(#c188)"/><rect x="1622" y="727.00" width="611" height="3.60" fill="url(#c189)"/><rect x="1623" y="730.00" width="601" height="3.60" fill="url(#c190)"/><rect x="1624" y="733.00" width="592" height="3.60" fill="url(#c191)"/><rect x="1625" y="736.00" width="582" height="3.60" fill="url(#c192)"/><rect x="1626" y="739.00" width="573" height="3.60" fill="url(#c193)"/><rect x="1628" y="742.00" width="562" height="3.60" fill="url(#c194)"/><rect x="1629" y="745.00" width="553" height="3.60" fill="url(#c195)"/><rect x="1630" y="748.00" width="543" height="3.60" fill="url(#c196)"/><rect x="1631" y="751.00" width="534" height="3.60" fill="url(#c197)"/><rect x="1633" y="754.00" width="523" height="3.60" fill="url(#c198)"/><rect x="1634" y="757.00" width="514" height="3.60" fill="url(#c199)"/><rect x="1635" y="760.00" width="505" height="3.60" fill="url(#c200)"/><rect x="1637" y="763.00" width="494" height="3.60" fill="url(#c201)"/><rect x="1638" y="766.00" width="485" height="3.60" fill="url(#c202)"/><rect x="1640" y="769.00" width="474" height="3.60" fill="url(#c203)"/><rect x="1641" y="772.00" width="465" height="3.60" fill="url(#c204)"/><rect x="1642" y="775.00" width="455" height="3.60" fill="url(#c205)"/><rect x="1644" y="778.00" width="445" height="3.60" fill="url(#c206)"/><rect x="1645" y="781.00" width="435" height="3.60" fill="url(#c207)"/><rect x="1647" y="784.00" width="425" height="3.60" fill="url(#c208)"/><rect x="1648" y="787.00" width="415" height="3.60" fill="url(#c209)"/><rect x="1649" y="790.00" width="406" height="3.60" fill="url(#c210)"/><rect x="1651" y="793.00" width="395" height="3.60" fill="url(#c211)"/><rect x="1652" y="796.00" width="386" height="3.60" fill="url(#c212)"/><rect x="1654" y="799.00" width="376" height="3.60" fill="url(#c213)"/><rect x="1655" y="802.00" width="366" height="3.60" fill="url(#c214)"/><rect x="1657" y="805.00" width="356" height="3.60" fill="url(#c215)"/><rect x="1659" y="808.00" width="345" height="3.60" fill="url(#c216)"/><rect x="1660" y="811.00" width="336" height="3.60" fill="url(#c217)"/><rect x="1662" y="814.00" width="325" height="3.60" fill="url(#c218)"/><rect x="1663" y="817.00" width="316" height="3.60" fill="url(#c219)"/><rect x="1665" y="820.00" width="305" height="3.60" fill="url(#c220)"/><rect x="1667" y="823.00" width="295" height="3.60" fill="url(#c221)"/><rect x="1669" y="826.00" width="284" height="3.60" fill="url(#c222)"/><rect x="1670" y="829.00" width="275" height="3.60" fill="url(#c223)"/><rect x="1672" y="832.00" width="264" height="3.60" fill="url(#c224)"/><rect x="1674" y="835.00" width="254" height="3.60" fill="url(#c225)"/><rect x="1676" y="838.00" width="244" height="3.60" fill="url(#c226)"/><rect x="1678" y="841.00" width="233" height="3.60" fill="url(#c227)"/><rect x="1680" y="844.00" width="223" height="3.60" fill="url(#c228)"/><rect x="1682" y="847.00" width="212" height="3.60" fill="url(#c229)"/><rect x="1684" y="850.00" width="202" height="3.60" fill="url(#c230)"/><rect x="1686" y="853.00" width="191" height="3.60" fill="url(#c231)"/><rect x="1689" y="856.00" width="180" height="3.60" fill="url(#c232)"/><rect x="1691" y="859.00" width="169" height="3.60" fill="url(#c233)"/><rect x="1694" y="862.00" width="158" height="3.60" fill="url(#c234)"/><rect x="1696" y="865.00" width="147" height="3.60" fill="url(#c235)"/><rect x="1699" y="868.00" width="136" height="3.60" fill="url(#c236)"/><rect x="1702" y="871.00" width="124" height="3.60" fill="url(#c237)"/><rect x="1705" y="874.00" width="113" height="3.60" fill="url(#c238)"/><rect x="1709" y="877.00" width="101" height="3.60" fill="url(#c239)"/><rect x="1712" y="880.00" width="89" height="3.60" fill="url(#c240)"/><rect x="1717" y="883.00" width="76" height="3.60" fill="url(#c241)"/><rect x="1721" y="886.00" width="63" height="3.60" fill="url(#c242)"/><rect x="1725" y="889.00" width="51" height="3.60" fill="url(#c243)"/><rect x="1730" y="892.00" width="37" height="3.60" fill="url(#c244)"/><rect x="1734" y="895.00" width="25" height="3.60" fill="url(#c245)"/></g><g id="irows"><rect x="2190" y="166.50" width="332" height="4.60" fill="url(#i0)"/><rect x="2190" y="170.50" width="332" height="4.60" fill="url(#i1)"/><rect x="2190" y="174.50" width="332" height="4.60" fill="url(#i2)"/><rect x="2190" y="178.50" width="332" height="4.60" fill="url(#i3)"/><rect x="2190" y="182.50" width="332" height="4.60" fill="url(#i4)"/><rect x="2190" y="186.50" width="332" height="4.60" fill="url(#i5)"/><rect x="2190" y="190.50" width="332" height="4.60" fill="url(#i6)"/><rect x="2190" y="194.50" width="332" height="4.60" fill="url(#i7)"/><rect x="2190" y="198.50" width="332" height="4.60" fill="url(#i8)"/><rect x="2190" y="202.50" width="332" height="4.60" fill="url(#i9)"/><rect x="2190" y="206.50" width="332" height="4.60" fill="url(#i10)"/><rect x="2190" y="210.50" width="332" height="4.60" fill="url(#i11)"/><rect x="2190" y="214.50" width="332" height="4.60" fill="url(#i12)"/><rect x="2190" y="218.50" width="332" height="4.60" fill="url(#i13)"/><rect x="2190" y="222.50" width="332" height="4.60" fill="url(#i14)"/><rect x="2190" y="226.50" width="332" height="4.60" fill="url(#i15)"/><rect x="2190" y="230.50" width="332" height="4.60" fill="url(#i16)"/><rect x="2190" y="234.50" width="332" height="4.60" fill="url(#i17)"/><rect x="2190" y="238.50" width="332" height="4.60" fill="url(#i18)"/><rect x="2190" y="242.50" width="332" height="4.60" fill="url(#i19)"/><rect x="2190" y="246.50" width="332" height="4.60" fill="url(#i20)"/><rect x="2190" y="250.50" width="332" height="4.60" fill="url(#i21)"/><rect x="2190" y="254.50" width="332" height="4.60" fill="url(#i22)"/><rect x="2190" y="258.50" width="332" height="4.60" fill="url(#i23)"/><rect x="2190" y="262.50" width="332" height="4.60" fill="url(#i24)"/><rect x="2190" y="266.50" width="332" height="4.60" fill="url(#i25)"/><rect x="2190" y="270.50" width="332" height="4.60" fill="url(#i26)"/><rect x="2190" y="274.50" width="332" height="4.60" fill="url(#i27)"/><rect x="2190" y="278.50" width="332" height="4.60" fill="url(#i28)"/><rect x="2190" y="282.50" width="332" height="4.60" fill="url(#i29)"/><rect x="2190" y="286.50" width="332" height="4.60" fill="url(#i30)"/><rect x="2190" y="290.50" width="332" height="4.60" fill="url(#i31)"/><rect x="2190" y="294.50" width="332" height="4.60" fill="url(#i32)"/><rect x="2190" y="298.50" width="332" height="4.60" fill="url(#i33)"/><rect x="2190" y="302.50" width="332" height="4.60" fill="url(#i34)"/><rect x="2190" y="306.50" width="332" height="4.60" fill="url(#i35)"/><rect x="2190" y="310.50" width="332" height="4.60" fill="url(#i36)"/><rect x="2190" y="314.50" width="332" height="4.60" fill="url(#i37)"/><rect x="2190" y="318.50" width="332" height="4.60" fill="url(#i38)"/><rect x="2190" y="322.50" width="332" height="4.60" fill="url(#i39)"/><rect x="2190" y="326.50" width="332" height="4.60" fill="url(#i40)"/><rect x="2190" y="330.50" width="332" height="4.60" fill="url(#i41)"/><rect x="2190" y="334.50" width="332" height="4.60" fill="url(#i42)"/><rect x="2190" y="338.50" width="332" height="4.60" fill="url(#i43)"/><rect x="2190" y="342.50" width="332" height="4.60" fill="url(#i44)"/><rect x="2190" y="346.50" width="332" height="4.60" fill="url(#i45)"/><rect x="2190" y="350.50" width="332" height="4.60" fill="url(#i46)"/><rect x="2190" y="354.50" width="332" height="4.60" fill="url(#i47)"/><rect x="2190" y="358.50" width="332" height="4.60" fill="url(#i48)"/><rect x="2190" y="362.50" width="332" height="4.60" fill="url(#i49)"/><rect x="2190" y="366.50" width="332" height="4.60" fill="url(#i50)"/><rect x="2190" y="370.50" width="332" height="4.60" fill="url(#i51)"/><rect x="2190" y="374.50" width="332" height="4.60" fill="url(#i52)"/><rect x="2190" y="378.50" width="332" height="4.60" fill="url(#i53)"/><rect x="2190" y="382.50" width="332" height="4.60" fill="url(#i54)"/><rect x="2190" y="386.50" width="332" height="4.60" fill="url(#i55)"/><rect x="2190" y="390.50" width="332" height="4.60" fill="url(#i56)"/><rect x="2190" y="394.50" width="332" height="4.60" fill="url(#i57)"/><rect x="2190" y="398.50" width="332" height="4.60" fill="url(#i58)"/><rect x="2190" y="402.50" width="332" height="4.60" fill="url(#i59)"/><rect x="2190" y="406.50" width="332" height="4.60" fill="url(#i60)"/><rect x="2190" y="410.50" width="332" height="4.60" fill="url(#i61)"/><rect x="2190" y="414.50" width="332" height="4.60" fill="url(#i62)"/><rect x="2190" y="418.50" width="332" height="4.60" fill="url(#i63)"/><rect x="2190" y="422.50" width="332" height="4.60" fill="url(#i64)"/><rect x="2190" y="426.50" width="332" height="4.60" fill="url(#i65)"/><rect x="2190" y="430.50" width="332" height="4.60" fill="url(#i66)"/><rect x="2190" y="434.50" width="332" height="4.60" fill="url(#i67)"/><rect x="2190" y="438.50" width="332" height="4.60" fill="url(#i68)"/><rect x="2190" y="442.50" width="332" height="3.10" fill="url(#i69)"/></g></defs>
<rect x="1497.3" y="114.6" width="1044.5" height="837.2" fill="#323232" stroke="#c6c606" stroke-width="10.6"/>
<rect x="1547.0" y="155.3" width="985.0" height="748.4" fill="#242424" />
<polygon points="1748.5,896.3 1742.4,896.0 1742.1,895.8 1741.6,895.5 1741.2,895.2 1740.6,894.8 1740.0,894.4 1739.4,894.0 1738.9,893.6 1738.3,893.2 1737.7,892.8 1737.0,892.4 1736.3,891.9 1735.6,891.4 1734.8,890.9 1734.0,890.4 1733.1,889.8 1732.2,889.2 1731.3,888.6 1730.3,888.0 1729.3,887.3 1728.3,886.6 1727.2,885.9 1726.1,885.2 1725.0,884.4 1723.8,883.5 1722.5,882.6 1721.2,881.7 1719.9,880.7 1718.5,879.6 1717.1,878.5 1715.6,877.3 1714.0,876.0 1712.5,874.7 1710.9,873.3 1709.2,871.8 1707.5,870.1 1705.6,868.2 1703.6,866.1 1701.6,863.8 1699.4,861.3 1697.1,858.6 1694.7,855.6 1692.3,852.3 1689.7,848.7 1687.0,845.0 1684.3,840.9 1681.4,836.6 1678.4,831.8 1675.3,826.5 1672.0,820.8 1668.7,814.7 1665.2,808.2 1661.6,801.3 1657.8,793.8 1653.9,785.7 1649.8,777.0 1645.5,767.8 1641.0,758.1 1636.5,747.8 1631.9,736.8 1627.4,725.2 1622.9,712.8 1618.3,699.7 1613.7,686.0 1609.1,671.6 1604.6,656.7 1600.1,641.3 1595.7,625.1 1591.2,608.2 1586.7,590.7 1582.4,572.8 1578.3,554.7 1574.5,536.6 1570.9,518.2 1567.5,499.5 1564.3,480.6 1561.3,461.7 1558.7,443.0 1556.6,424.7 1554.8,406.8 1553.3,388.9 1552.2,371.3 1551.5,354.0 1551.3,337.3 1551.6,321.2 1552.3,305.6 1553.6,290.4 1555.3,275.7 1557.4,261.7 1560.1,248.5 1563.3,236.3 1567.0,225.0 1571.3,214.5 1576.0,204.7 1581.2,195.9 1586.8,188.1 1592.5,181.3 1598.7,175.8 1605.3,171.3 1612.2,167.8 1619.3,165.2 1626.6,163.3 1634.0,162.0 1641.4,161.4 1649.1,161.8 1657.0,163.0 1664.9,164.7 1672.8,166.6 1680.7,168.7 1688.6,171.0 1696.5,173.8 1704.5,176.8 1712.5,180.1 1720.3,183.4 1728.1,186.8 1735.7,190.1 1743.3,193.6 1750.7,197.2 1758.1,200.9 1765.5,204.6 1772.8,208.4 1780.1,212.3 1787.3,216.2 1794.4,220.2 1801.6,224.3 1808.7,228.5 1815.8,232.7 1822.9,237.0 1830.0,241.3 1837.0,245.8 1844.1,250.2 1851.1,254.8 1858.1,259.4 1865.2,264.0 1872.2,268.7 1879.1,273.4 1886.1,278.2 1893.1,283.0 1900.1,287.8 1907.0,292.7 1914.0,297.6 1920.9,302.6 1927.9,307.5 1934.9,312.5 1941.8,317.5 1948.8,322.6 1955.8,327.7 1962.8,332.8 1969.8,337.9 1976.8,343.0 1983.8,348.1 1990.7,353.3 1997.7,358.5 2004.6,363.6 2011.6,368.8 2018.5,374.0 2025.4,379.2 2032.4,384.4 2039.3,389.6 2046.2,394.7 2053.1,399.9 2060.0,405.1 2066.9,410.2 2073.7,415.4 2080.5,420.5 2087.3,425.7 2094.1,430.8 2100.8,435.9 2107.5,440.9 2114.1,446.0 2120.8,451.0 2127.4,456.0 2133.9,461.0 2140.5,465.9 2146.9,470.8 2153.4,475.7 2159.7,480.5 2166.1,485.3 2172.4,490.1 2178.6,494.8 2184.7,499.5 2190.8,504.1 2196.9,508.6 2202.9,513.1 2208.8,517.6 2214.6,522.0 2220.3,526.3 2226.0,530.6 2231.5,534.8 2237.0,539.0 2242.4,543.1 2247.6,547.1 2252.8,551.0 2257.7,554.8 2262.6,558.4 2267.3,562.0 2272.0,565.5 2276.5,569.0 2281.0,572.3 2285.3,575.6 2289.6,578.9 2293.9,582.1 2297.9,585.2 2301.9,588.2 2305.8,591.1 2309.5,593.9 2313.1,596.6 2316.6,599.2 2320.0,601.7 2323.2,604.2 2326.4,606.6 2329.4,608.9 2332.4,611.1 2335.2,613.3 2337.9,615.3 2340.6,617.4 2343.1,619.3 2345.6,621.2 2347.9,622.9 2350.2,624.7 2352.3,626.3 2354.4,627.9 2356.5,629.4 2358.4,630.9 2360.3,632.3 2362.1,633.7 2363.8,635.0 2365.5,636.2 2367.1,637.4 2368.7,638.6 2370.2,639.8 2371.6,640.9 2373.0,641.9 2374.3,642.9 2375.7,643.9 2377.0,644.9 2378.2,645.9 2379.4,646.8 2380.6,647.7 2381.7,648.5 2382.8,649.4 2383.9,650.2 2384.9,651.0 2385.9,651.7 2386.8,652.4 2387.8,653.1 2388.7,653.8 2389.5,654.5 2390.4,655.1 2391.1,655.7 2391.9,656.2 2392.6,656.8 2393.3,657.3 2394.0,657.8 2394.6,658.3 2395.2,658.7 2395.8,659.1 2396.3,659.6 2396.9,659.9 2397.4,660.3 2397.8,660.7 2398.3,661.0 2398.7,661.4 2399.1,661.7 2399.5,662.0 2399.9,662.3 2400.3,662.6 2400.7,662.9 2401.0,663.1 2401.3,663.3 2401.5,663.5 2402.2,664.6" fill="#000"/>
<g clip-path="url(#cpH)"><use href="#crows" opacity="0.615"/></g>
<g clip-path="url(#cpT)"><use href="#crows"/></g>
<line x1="1546.0" y1="155.3" x2="2533.0" y2="155.3" stroke="#aaa" stroke-width="2.0"/>
<line x1="2532.0" y1="155.0" x2="2532.0" y2="904.0" stroke="#aaa" stroke-width="2.0"/>
<line x1="1547.0" y1="154.3" x2="1547.0" y2="913.0" stroke="#b0b0b0" stroke-width="2.2"/>
<line x1="1538.0" y1="903.7" x2="2533.0" y2="903.7" stroke="#b0b0b0" stroke-width="2.2"/>
<line x1="1547.0" y1="903.7" x2="1547.0" y2="913.0" stroke="#e0e0e0" stroke-width="2.2"/>
<line x1="1538.0" y1="903.7" x2="1547.0" y2="903.7" stroke="#e0e0e0" stroke-width="2.2"/>
<text x="1539.8" y="936.6" font-size="22.93" fill="#dcdcdc" textLength="12.4" lengthAdjust="spacingAndGlyphs">0</text>
<text x="1525.1" y="912.3" font-size="22.93" fill="#dcdcdc" textLength="12.4" lengthAdjust="spacingAndGlyphs">0</text>
<line x1="1664.1" y1="903.7" x2="1664.1" y2="913.0" stroke="#e0e0e0" stroke-width="2.2"/>
<line x1="1538.0" y1="814.7" x2="1547.0" y2="814.7" stroke="#e0e0e0" stroke-width="2.2"/>
<text x="1647.6" y="936.6" font-size="22.93" fill="#dcdcdc" textLength="31.0" lengthAdjust="spacingAndGlyphs">0,1</text>
<text x="1506.5" y="823.3" font-size="22.93" fill="#dcdcdc" textLength="31.0" lengthAdjust="spacingAndGlyphs">0,1</text>
<line x1="1781.1" y1="903.7" x2="1781.1" y2="913.0" stroke="#e0e0e0" stroke-width="2.2"/>
<line x1="1538.0" y1="725.8" x2="1547.0" y2="725.8" stroke="#e0e0e0" stroke-width="2.2"/>
<text x="1764.6" y="936.6" font-size="22.93" fill="#dcdcdc" textLength="31.0" lengthAdjust="spacingAndGlyphs">0,2</text>
<text x="1506.5" y="734.4" font-size="22.93" fill="#dcdcdc" textLength="31.0" lengthAdjust="spacingAndGlyphs">0,2</text>
<line x1="1898.2" y1="903.7" x2="1898.2" y2="913.0" stroke="#e0e0e0" stroke-width="2.2"/>
<line x1="1538.0" y1="636.8" x2="1547.0" y2="636.8" stroke="#e0e0e0" stroke-width="2.2"/>
<text x="1881.7" y="936.6" font-size="22.93" fill="#dcdcdc" textLength="31.0" lengthAdjust="spacingAndGlyphs">0,3</text>
<text x="1506.5" y="645.4" font-size="22.93" fill="#dcdcdc" textLength="31.0" lengthAdjust="spacingAndGlyphs">0,3</text>
<line x1="2015.2" y1="903.7" x2="2015.2" y2="913.0" stroke="#e0e0e0" stroke-width="2.2"/>
<line x1="1538.0" y1="547.9" x2="1547.0" y2="547.9" stroke="#e0e0e0" stroke-width="2.2"/>
<text x="1998.8" y="936.6" font-size="22.93" fill="#dcdcdc" textLength="31.0" lengthAdjust="spacingAndGlyphs">0,4</text>
<text x="1506.5" y="556.5" font-size="22.93" fill="#dcdcdc" textLength="31.0" lengthAdjust="spacingAndGlyphs">0,4</text>
<line x1="2132.3" y1="903.7" x2="2132.3" y2="913.0" stroke="#e0e0e0" stroke-width="2.2"/>
<line x1="1538.0" y1="458.9" x2="1547.0" y2="458.9" stroke="#e0e0e0" stroke-width="2.2"/>
<text x="2115.8" y="936.6" font-size="22.93" fill="#dcdcdc" textLength="31.0" lengthAdjust="spacingAndGlyphs">0,5</text>
<text x="1506.5" y="467.5" font-size="22.93" fill="#dcdcdc" textLength="31.0" lengthAdjust="spacingAndGlyphs">0,5</text>
<line x1="2249.4" y1="903.7" x2="2249.4" y2="913.0" stroke="#e0e0e0" stroke-width="2.2"/>
<line x1="1538.0" y1="369.9" x2="1547.0" y2="369.9" stroke="#e0e0e0" stroke-width="2.2"/>
<text x="2232.9" y="936.6" font-size="22.93" fill="#dcdcdc" textLength="31.0" lengthAdjust="spacingAndGlyphs">0,6</text>
<text x="1506.5" y="378.5" font-size="22.93" fill="#dcdcdc" textLength="31.0" lengthAdjust="spacingAndGlyphs">0,6</text>
<line x1="2366.4" y1="903.7" x2="2366.4" y2="913.0" stroke="#e0e0e0" stroke-width="2.2"/>
<line x1="1538.0" y1="281.0" x2="1547.0" y2="281.0" stroke="#e0e0e0" stroke-width="2.2"/>
<text x="2349.9" y="936.6" font-size="22.93" fill="#dcdcdc" textLength="31.0" lengthAdjust="spacingAndGlyphs">0,7</text>
<text x="1506.5" y="289.6" font-size="22.93" fill="#dcdcdc" textLength="31.0" lengthAdjust="spacingAndGlyphs">0,7</text>
<line x1="2483.5" y1="903.7" x2="2483.5" y2="913.0" stroke="#e0e0e0" stroke-width="2.2"/>
<line x1="1538.0" y1="192.0" x2="1547.0" y2="192.0" stroke="#e0e0e0" stroke-width="2.2"/>
<text x="2467.0" y="936.6" font-size="22.93" fill="#dcdcdc" textLength="31.0" lengthAdjust="spacingAndGlyphs">0,8</text>
<text x="1506.5" y="200.6" font-size="22.93" fill="#dcdcdc" textLength="31.0" lengthAdjust="spacingAndGlyphs">0,8</text>
<text x="1962.2" y="147.6" font-size="22.34" fill="#dcdcdc" textLength="113.7" lengthAdjust="spacingAndGlyphs">CIE 1931 xy</text>
<g clip-path="url(#cpI)"><rect x="2190.5" y="166.5" width="331.0" height="278.5" fill="#000"/><use href="#irows" opacity="0.615"/><g clip-path="url(#cpIT)"><use href="#irows"/></g></g>
<rect x="2187.9" y="163.9" width="336.2" height="283.7" fill="none" stroke="#2c2c2c" stroke-width="3"/>
<rect x="2190.5" y="166.5" width="331.0" height="278.5" fill="none" stroke="#9a9a96" stroke-width="2.2"/>
<rect x="1899.3" y="550.5" width="20.6" height="20.6" fill="none" stroke="#fff" stroke-opacity="0.93" stroke-width="2.3"/>
<rect x="1897.3" y="503.0" width="20.6" height="20.6" fill="none" stroke="#fff" stroke-opacity="0.93" stroke-width="2.3"/>
<rect x="1893.2" y="457.2" width="20.6" height="20.6" fill="none" stroke="#fff" stroke-opacity="0.93" stroke-width="2.3"/>
<rect x="1890.8" y="409.7" width="20.6" height="20.6" fill="none" stroke="#fff" stroke-opacity="0.93" stroke-width="2.3"/>
<rect x="1886.4" y="357.4" width="20.6" height="20.6" fill="none" stroke="#fff" stroke-opacity="0.93" stroke-width="2.3"/>
<rect x="1927.8" y="567.0" width="20.6" height="20.6" fill="none" stroke="#fff" stroke-opacity="0.93" stroke-width="2.3"/>
<rect x="1953.2" y="533.6" width="20.6" height="20.6" fill="none" stroke="#fff" stroke-opacity="0.93" stroke-width="2.3"/>
<rect x="1977.7" y="505.0" width="20.6" height="20.6" fill="none" stroke="#fff" stroke-opacity="0.93" stroke-width="2.3"/>
<rect x="2000.2" y="475.7" width="20.6" height="20.6" fill="none" stroke="#fff" stroke-opacity="0.93" stroke-width="2.3"/>
<rect x="2026.8" y="443.1" width="20.6" height="20.6" fill="none" stroke="#fff" stroke-opacity="0.93" stroke-width="2.3"/>
<rect x="1977.7" y="597.5" width="20.6" height="20.6" fill="none" stroke="#fff" stroke-opacity="0.93" stroke-width="2.3"/>
<rect x="2056.1" y="597.5" width="20.6" height="20.6" fill="none" stroke="#fff" stroke-opacity="0.93" stroke-width="2.3"/>
<rect x="2126.1" y="597.5" width="20.6" height="20.6" fill="none" stroke="#fff" stroke-opacity="0.93" stroke-width="2.3"/>
<rect x="2201.3" y="597.5" width="20.6" height="20.6" fill="none" stroke="#fff" stroke-opacity="0.93" stroke-width="2.3"/>
<rect x="2285.4" y="597.5" width="20.6" height="20.6" fill="none" stroke="#fff" stroke-opacity="0.93" stroke-width="2.3"/>
<rect x="1882.2" y="599.1" width="20.6" height="20.6" fill="none" stroke="#fff" stroke-opacity="0.93" stroke-width="2.3"/>
<rect x="1861.5" y="599.1" width="20.6" height="20.6" fill="none" stroke="#fff" stroke-opacity="0.93" stroke-width="2.3"/>
<rect x="1840.9" y="599.1" width="20.6" height="20.6" fill="none" stroke="#fff" stroke-opacity="0.93" stroke-width="2.3"/>
<rect x="1820.2" y="599.1" width="20.6" height="20.6" fill="none" stroke="#fff" stroke-opacity="0.93" stroke-width="2.3"/>
<rect x="1799.5" y="599.1" width="20.6" height="20.6" fill="none" stroke="#fff" stroke-opacity="0.93" stroke-width="2.3"/>
<rect x="1905.7" y="631.3" width="20.6" height="20.6" fill="none" stroke="#fff" stroke-opacity="0.93" stroke-width="2.3"/>
<rect x="1906.9" y="663.9" width="20.6" height="20.6" fill="none" stroke="#fff" stroke-opacity="0.93" stroke-width="2.3"/>
<rect x="1907.3" y="690.9" width="20.6" height="20.6" fill="none" stroke="#fff" stroke-opacity="0.93" stroke-width="2.3"/>
<rect x="1909.3" y="722.2" width="20.6" height="20.6" fill="none" stroke="#fff" stroke-opacity="0.93" stroke-width="2.3"/>
<rect x="1911.3" y="754.8" width="20.6" height="20.6" fill="none" stroke="#fff" stroke-opacity="0.93" stroke-width="2.3"/>
<rect x="1863.5" y="647.8" width="20.6" height="20.6" fill="none" stroke="#fff" stroke-opacity="0.93" stroke-width="2.3"/>
<rect x="1826.5" y="695.3" width="20.6" height="20.6" fill="none" stroke="#fff" stroke-opacity="0.93" stroke-width="2.3"/>
<rect x="1789.5" y="740.7" width="20.6" height="20.6" fill="none" stroke="#fff" stroke-opacity="0.93" stroke-width="2.3"/>
<rect x="1752.4" y="786.2" width="20.6" height="20.6" fill="none" stroke="#fff" stroke-opacity="0.93" stroke-width="2.3"/>
<rect x="1710.6" y="837.7" width="20.6" height="20.6" fill="none" stroke="#fff" stroke-opacity="0.93" stroke-width="2.3"/>
<rect x="1903.7" y="600.7" width="19" height="19" fill="none" stroke="#000" stroke-width="2.2"/>
<circle cx="1911.6" cy="610.6" r="6" fill="#fff" stroke="#000" stroke-width="1.6"/>
<circle cx="1901.1" cy="552.3" r="6.4" fill="#93bc93" stroke="#000" stroke-opacity="0.85" stroke-width="1.7"/>
<circle cx="1892.7" cy="494.4" r="6.4" fill="#7fbc7f" stroke="#000" stroke-opacity="0.85" stroke-width="1.7"/>
<circle cx="1882.2" cy="432.5" r="6.4" fill="#68bd68" stroke="#000" stroke-opacity="0.85" stroke-width="1.7"/>
<circle cx="1870.1" cy="366.1" r="6.4" fill="#49bd49" stroke="#000" stroke-opacity="0.85" stroke-width="1.7"/>
<circle cx="1856.9" cy="291.9" r="6.4" fill="#00be00" stroke="#000" stroke-opacity="0.85" stroke-width="1.7"/>
<circle cx="1940.1" cy="573.2" r="6.4" fill="#bdbd93" stroke="#000" stroke-opacity="0.85" stroke-width="1.7"/>
<circle cx="1971.5" cy="535.8" r="6.4" fill="#c0c07f" stroke="#000" stroke-opacity="0.85" stroke-width="1.7"/>
<circle cx="2000.5" cy="500.8" r="6.4" fill="#c4c468" stroke="#000" stroke-opacity="0.85" stroke-width="1.7"/>
<circle cx="2027.4" cy="465.4" r="6.4" fill="#c7c749" stroke="#000" stroke-opacity="0.85" stroke-width="1.7"/>
<circle cx="2058.0" cy="425.6" r="6.4" fill="#cccc00" stroke="#000" stroke-opacity="0.85" stroke-width="1.7"/>
<circle cx="2006.5" cy="610.2" r="6.4" fill="#be9393" stroke="#000" stroke-opacity="0.85" stroke-width="1.7"/>
<circle cx="2097.4" cy="612.3" r="6.4" fill="#c27f7f" stroke="#000" stroke-opacity="0.85" stroke-width="1.7"/>
<circle cx="2177.9" cy="612.3" r="6.4" fill="#c66868" stroke="#000" stroke-opacity="0.85" stroke-width="1.7"/>
<circle cx="2256.7" cy="614.3" r="6.4" fill="#ca4949" stroke="#000" stroke-opacity="0.85" stroke-width="1.7"/>
<circle cx="2337.5" cy="616.3" r="6.4" fill="#d00000" stroke="#000" stroke-opacity="0.85" stroke-width="1.7"/>
<circle cx="1884.6" cy="607.8" r="6.4" fill="#93bcbc" stroke="#000" stroke-opacity="0.85" stroke-width="1.7"/>
<circle cx="1859.7" cy="607.8" r="6.4" fill="#7fbcbc" stroke="#000" stroke-opacity="0.85" stroke-width="1.7"/>
<circle cx="1832.7" cy="607.8" r="6.4" fill="#68bdbd" stroke="#000" stroke-opacity="0.85" stroke-width="1.7"/>
<circle cx="1807.8" cy="605.4" r="6.4" fill="#49bdbd" stroke="#000" stroke-opacity="0.85" stroke-width="1.7"/>
<circle cx="1780.8" cy="605.8" r="6.4" fill="#00bebe" stroke="#000" stroke-opacity="0.85" stroke-width="1.7"/>
<circle cx="1919.6" cy="643.2" r="6.4" fill="#bc93bc" stroke="#000" stroke-opacity="0.85" stroke-width="1.7"/>
<circle cx="1926.1" cy="678.6" r="6.4" fill="#bc7fbc" stroke="#000" stroke-opacity="0.85" stroke-width="1.7"/>
<circle cx="1929.7" cy="705.2" r="6.4" fill="#bd68bd" stroke="#000" stroke-opacity="0.85" stroke-width="1.7"/>
<circle cx="1936.1" cy="736.5" r="6.4" fill="#bd49bd" stroke="#000" stroke-opacity="0.85" stroke-width="1.7"/>
<circle cx="1940.1" cy="767.1" r="6.4" fill="#be00be" stroke="#000" stroke-opacity="0.85" stroke-width="1.7"/>
<circle cx="1870.1" cy="661.7" r="6.4" fill="#9393bf" stroke="#000" stroke-opacity="0.85" stroke-width="1.7"/>
<circle cx="1832.7" cy="711.2" r="6.4" fill="#7f7fc4" stroke="#000" stroke-opacity="0.85" stroke-width="1.7"/>
<circle cx="1795.3" cy="757.1" r="6.4" fill="#6868c9" stroke="#000" stroke-opacity="0.85" stroke-width="1.7"/>
<circle cx="1758.3" cy="802.5" r="6.4" fill="#4949d0" stroke="#000" stroke-opacity="0.85" stroke-width="1.7"/>
<circle cx="1722.9" cy="848.8" r="6.4" fill="#0a0ad7" stroke="#000" stroke-opacity="0.85" stroke-width="1.7"/>
<rect x="2343.8" y="293.8" width="20.4" height="20.4" fill="none" stroke="#fff" stroke-width="2"/>
<circle cx="2441" cy="184.4" r="6.5" fill="#c8c814" stroke="#000" stroke-width="1.5"/>
<circle cx="2314.2" cy="360.6" r="6.5" fill="#bcbc50" stroke="#000" stroke-width="1.5"/>
<rect x="2237" y="443.2" width="22" height="2" fill="#fff" opacity="0.8"/>
</svg>
<svg class="abs" style="left:0;top:95px" width="575" height="130" viewBox="0 95 575 130">
<text x="48.0" y="177.2" font-size="60.19" fill="#eeeeee" textLength="494.0" lengthAdjust="spacingAndGlyphs">Saturation Sweeps</text>
</svg>
<svg class="abs" style="left:0;top:990px" width="520" height="336" viewBox="0 990 520 336">
<text x="34.0" y="1047.0" font-size="46.24" fill="#eeeeee" textLength="333.0" lengthAdjust="spacingAndGlyphs">Current Reading</text>
<text x="34.0" y="1112.6" font-size="38.30" fill="#eeeeee" textLength="155.8" lengthAdjust="spacingAndGlyphs">x: 0,4373</text>
<text x="34.0" y="1174.4" font-size="38.30" fill="#eeeeee" textLength="156.7" lengthAdjust="spacingAndGlyphs">y: 0,5351</text>
<text x="34.0" y="1236.3" font-size="38.30" fill="#eeeeee" textLength="146.8" lengthAdjust="spacingAndGlyphs">fL: 73,68</text>
<text x="34.0" y="1298.2" font-size="38.30" fill="#eeeeee" textLength="241.4" lengthAdjust="spacingAndGlyphs">cd/m²: 252,46</text>
</svg>
<svg class="abs" style="left:490px;top:980px" width="460" height="346" viewBox="490 980 460 346">
<defs><linearGradient id="rR" x1="0" y1="0" x2="0" y2="1"><stop offset="0" stop-color="#ff5c5c"/><stop offset="0.55" stop-color="#ff1c1c"/><stop offset="1" stop-color="#ff0000"/></linearGradient><linearGradient id="rG" x1="0" y1="0" x2="0" y2="1"><stop offset="0" stop-color="#5cb45c"/><stop offset="0.55" stop-color="#148a14"/><stop offset="1" stop-color="#008000"/></linearGradient></defs>
<rect x="554.2" y="1015.8" width="380.2" height="273.8" fill="#242424"/>
<line x1="554.2" y1="1063.0" x2="934.4" y2="1063.0" stroke="#9c9c9c" stroke-width="2.2"/>
<line x1="545.2" y1="1063.0" x2="554.2" y2="1063.0" stroke="#e0e0e0" stroke-width="2.4"/>
<text x="506.4" y="1071.9" font-size="22.93" fill="#dcdcdc" textLength="37.3" lengthAdjust="spacingAndGlyphs">120</text>
<line x1="554.2" y1="1154.2" x2="934.4" y2="1154.2" stroke="#9c9c9c" stroke-width="2.2"/>
<line x1="545.2" y1="1154.2" x2="554.2" y2="1154.2" stroke="#e0e0e0" stroke-width="2.4"/>
<text x="506.4" y="1163.1" font-size="22.93" fill="#dcdcdc" textLength="37.3" lengthAdjust="spacingAndGlyphs">100</text>
<line x1="554.2" y1="1245.6" x2="934.4" y2="1245.6" stroke="#9c9c9c" stroke-width="2.2"/>
<line x1="545.2" y1="1245.6" x2="554.2" y2="1245.6" stroke="#e0e0e0" stroke-width="2.4"/>
<text x="518.9" y="1254.5" font-size="22.93" fill="#dcdcdc" textLength="24.8" lengthAdjust="spacingAndGlyphs">80</text>
<path d="M554.2 1298.6V1015.8H934.4V1298.6" fill="none" stroke="#9c9c9c" stroke-width="2.2"/>
<rect x="593.3" y="1155" width="96.4" height="135.6" fill="url(#rR)" stroke="#000" stroke-width="2"/>
<rect x="692.7" y="1155" width="98.2" height="135.6" fill="url(#rG)" stroke="#000" stroke-width="2"/>
<rect x="794" y="1277.4" width="98.6" height="13.2" fill="#5050ff" stroke="#000" stroke-width="2"/>
<line x1="554.2" y1="1289.6" x2="934.4" y2="1289.6" stroke="#b0b0b0" stroke-width="2.2"/>
<text x="658.4" y="1007.6" font-size="22.34" fill="#dcdcdc" textLength="125.2" lengthAdjust="spacingAndGlyphs">RGB Balance</text>
<text x="717.1" y="1315.0" font-size="22.93" fill="#dcdcdc" textLength="54.8" lengthAdjust="spacingAndGlyphs">100%</text>
</svg>
<svg class="abs" style="left:960px;top:975px" width="1120" height="318" viewBox="960 975 1120 318">
<defs><linearGradient id="th" x1="0" y1="0" x2="0" y2="1"><stop offset="0" stop-color="#2e2e2e"/><stop offset="0.45" stop-color="#262626"/><stop offset="0.5" stop-color="#0c0c0c"/><stop offset="1" stop-color="#1a1a1a"/></linearGradient><linearGradient id="td" x1="0" y1="0" x2="1" y2="0"><stop offset="0" stop-color="#4a4a4a"/><stop offset="0.5" stop-color="#3c3c3c"/><stop offset="1" stop-color="#4a4a4a"/></linearGradient><linearGradient id="tl" x1="0" y1="0" x2="1" y2="0"><stop offset="0" stop-color="#888"/><stop offset="0.5" stop-color="#7c7c7c"/><stop offset="1" stop-color="#888"/></linearGradient></defs>
<rect x="965" y="979" width="1109" height="308.6" fill="#141414"/>
<rect x="967" y="980.5" width="1105" height="46.5" fill="url(#th)"/>
<rect x="967" y="1027.0" width="1105" height="43.4" fill="url(#td)"/>
<rect x="967" y="1070.2" width="1105" height="43.8" fill="url(#tl)"/>
<rect x="967" y="1113.8" width="1105" height="43.3" fill="url(#td)"/>
<rect x="967" y="1156.9" width="1105" height="43.3" fill="url(#tl)"/>
<rect x="967" y="1200.0" width="1105" height="43.3" fill="url(#td)"/>
<rect x="967" y="1243.1" width="1105" height="43.3" fill="url(#tl)"/>
<text x="1314.1" y="1014.2" font-size="28.00" fill="#f2f2f2" textLength="60.5" lengthAdjust="spacingAndGlyphs">20%</text>
<text x="1474.8" y="1014.2" font-size="28.00" fill="#f2f2f2" textLength="61.5" lengthAdjust="spacingAndGlyphs">40%</text>
<text x="1636.5" y="1014.2" font-size="28.00" fill="#f2f2f2" textLength="61.5" lengthAdjust="spacingAndGlyphs">60%</text>
<text x="1798.2" y="1014.2" font-size="28.00" fill="#f2f2f2" textLength="61.5" lengthAdjust="spacingAndGlyphs">80%</text>
<text x="1950.8" y="1014.2" font-size="28.00" fill="#f2f2f2" textLength="78.5" lengthAdjust="spacingAndGlyphs">100%</text>
<text x="995.0" y="1059.9" font-size="28.00" fill="#f4f4f4" font-weight="bold" textLength="132.0" lengthAdjust="spacingAndGlyphs" stroke="#f4f4f4" stroke-width="0.5">x: CIE31</text>
<text x="1272.6" y="1059.9" font-size="28.00" fill="#f4f4f4" textLength="102.5" lengthAdjust="spacingAndGlyphs">0,3371</text>
<text x="1434.3" y="1059.9" font-size="28.00" fill="#f4f4f4" textLength="102.5" lengthAdjust="spacingAndGlyphs">0,3626</text>
<text x="1596.0" y="1059.9" font-size="28.00" fill="#f4f4f4" textLength="102.5" lengthAdjust="spacingAndGlyphs">0,3871</text>
<text x="1757.7" y="1059.9" font-size="28.00" fill="#f4f4f4" textLength="102.5" lengthAdjust="spacingAndGlyphs">0,4108</text>
<text x="1919.3" y="1059.9" font-size="28.00" fill="#f4f4f4" textLength="102.5" lengthAdjust="spacingAndGlyphs">0,4373</text>
<text x="995.0" y="1103.1" font-size="28.00" fill="#ececec" font-weight="bold" textLength="130.0" lengthAdjust="spacingAndGlyphs" stroke="#ececec" stroke-width="0.5">y: CIE31</text>
<text x="1272.6" y="1103.1" font-size="28.00" fill="#ececec" textLength="102.5" lengthAdjust="spacingAndGlyphs">0,3693</text>
<text x="1434.3" y="1103.1" font-size="28.00" fill="#ececec" textLength="102.5" lengthAdjust="spacingAndGlyphs">0,4112</text>
<text x="1596.0" y="1103.1" font-size="28.00" fill="#ececec" textLength="102.5" lengthAdjust="spacingAndGlyphs">0,4517</text>
<text x="1757.7" y="1103.1" font-size="28.00" fill="#ececec" textLength="102.5" lengthAdjust="spacingAndGlyphs">0,4911</text>
<text x="1919.3" y="1103.1" font-size="28.00" fill="#ececec" textLength="102.5" lengthAdjust="spacingAndGlyphs">0,5351</text>
<text x="995.0" y="1146.2" font-size="28.00" fill="#f4f4f4" font-weight="bold" textLength="21.0" lengthAdjust="spacingAndGlyphs" stroke="#f4f4f4" stroke-width="0.5">Y</text>
<text x="1272.6" y="1146.2" font-size="28.00" fill="#f4f4f4" textLength="142.5" lengthAdjust="spacingAndGlyphs">267,5652</text>
<text x="1434.3" y="1146.2" font-size="28.00" fill="#f4f4f4" textLength="142.5" lengthAdjust="spacingAndGlyphs">262,2866</text>
<text x="1596.0" y="1146.2" font-size="28.00" fill="#f4f4f4" textLength="142.5" lengthAdjust="spacingAndGlyphs">258,0674</text>
<text x="1757.7" y="1146.2" font-size="28.00" fill="#f4f4f4" textLength="142.5" lengthAdjust="spacingAndGlyphs">255,0015</text>
<text x="1919.3" y="1146.2" font-size="28.00" fill="#f4f4f4" textLength="142.5" lengthAdjust="spacingAndGlyphs">252,4596</text>
<text x="995.0" y="1189.4" font-size="28.00" fill="#ececec" font-weight="bold" textLength="239.0" lengthAdjust="spacingAndGlyphs" stroke="#ececec" stroke-width="0.5">Target x:CIE31</text>
<text x="1272.6" y="1189.4" font-size="28.00" fill="#ececec" textLength="102.5" lengthAdjust="spacingAndGlyphs">0,3344</text>
<text x="1434.3" y="1189.4" font-size="28.00" fill="#ececec" textLength="102.5" lengthAdjust="spacingAndGlyphs">0,3564</text>
<text x="1596.0" y="1189.4" font-size="28.00" fill="#ececec" textLength="102.5" lengthAdjust="spacingAndGlyphs">0,3773</text>
<text x="1757.7" y="1189.4" font-size="28.00" fill="#ececec" textLength="102.5" lengthAdjust="spacingAndGlyphs">0,3969</text>
<text x="1919.3" y="1189.4" font-size="28.00" fill="#ececec" textLength="102.5" lengthAdjust="spacingAndGlyphs">0,4193</text>
<text x="995.0" y="1232.5" font-size="28.00" fill="#f4f4f4" font-weight="bold" textLength="239.0" lengthAdjust="spacingAndGlyphs" stroke="#f4f4f4" stroke-width="0.5">Target y:CIE31</text>
<text x="1272.6" y="1232.5" font-size="28.00" fill="#f4f4f4" textLength="102.5" lengthAdjust="spacingAndGlyphs">0,3648</text>
<text x="1434.3" y="1232.5" font-size="28.00" fill="#f4f4f4" textLength="102.5" lengthAdjust="spacingAndGlyphs">0,4013</text>
<text x="1596.0" y="1232.5" font-size="28.00" fill="#f4f4f4" textLength="102.5" lengthAdjust="spacingAndGlyphs">0,4358</text>
<text x="1757.7" y="1232.5" font-size="28.00" fill="#f4f4f4" textLength="102.5" lengthAdjust="spacingAndGlyphs">0,4682</text>
<text x="1919.3" y="1232.5" font-size="28.00" fill="#f4f4f4" textLength="102.5" lengthAdjust="spacingAndGlyphs">0,5053</text>
<text x="995.0" y="1275.7" font-size="28.00" fill="#ececec" font-weight="bold" textLength="138.0" lengthAdjust="spacingAndGlyphs" stroke="#ececec" stroke-width="0.5">Target Y</text>
<text x="1272.6" y="1275.7" font-size="28.00" fill="#ececec" textLength="142.5" lengthAdjust="spacingAndGlyphs">268,2264</text>
<text x="1434.3" y="1275.7" font-size="28.00" fill="#ececec" textLength="142.5" lengthAdjust="spacingAndGlyphs">263,5182</text>
<text x="1596.0" y="1275.7" font-size="28.00" fill="#ececec" textLength="142.5" lengthAdjust="spacingAndGlyphs">259,9007</text>
<text x="1757.7" y="1275.7" font-size="28.00" fill="#ececec" textLength="142.5" lengthAdjust="spacingAndGlyphs">257,0616</text>
<text x="1919.3" y="1275.7" font-size="28.00" fill="#ececec" textLength="142.5" lengthAdjust="spacingAndGlyphs">254,3169</text>
</svg>
<svg class="abs" style="left:0;top:1326px" width="2560" height="66" viewBox="0 1326 2560 66">
<defs>
<linearGradient id="bb" x1="0" y1="0" x2="0" y2="1"><stop offset="0" stop-color="#4a4a4a"/><stop offset="0.5" stop-color="#363636"/><stop offset="1" stop-color="#222"/></linearGradient>
<linearGradient id="selb" x1="0" y1="0" x2="0" y2="1"><stop offset="0" stop-color="#171717"/><stop offset="0.6" stop-color="#1c1c1c"/><stop offset="1" stop-color="#383838"/></linearGradient>
<linearGradient id="sb" x1="0" y1="0" x2="0" y2="1"><stop offset="0" stop-color="#a0a0a0"/><stop offset="0.5" stop-color="#8a8a8a"/><stop offset="1" stop-color="#6c6c6c"/></linearGradient>
<linearGradient id="nb" x1="0" y1="0" x2="0" y2="1"><stop offset="0" stop-color="#9c9c9c"/><stop offset="1" stop-color="#787878"/></linearGradient>
<radialGradient id="ic" cx="0.5" cy="0.35" r="0.65"><stop offset="0" stop-color="#b0b0b0"/><stop offset="1" stop-color="#8c8c8c"/></radialGradient>
</defs>
<rect x="0" y="1329" width="2560" height="63" fill="url(#bb)"/>
<rect x="1.5" y="1330" width="44.5" height="61" rx="4" fill="url(#sb)"/>
<ellipse cx="24" cy="1338" rx="7.5" ry="5" fill="#6c6c6c" opacity="0.7"/><path d="M19.6 1340.4h8.8l-4.4-4.8z" fill="#222"/>
<rect x="6.2" y="1356" width="35" height="30" rx="3" fill="#ffff00" stroke="#7a7a2a" stroke-width="0.8"/>
<rect x="51.8" y="1330" width="149.6" height="60.6" rx="4" fill="url(#sb)"/>
<rect x="58.4" y="1336.8" width="138.4" height="34" rx="3.5" fill="#c1c4a4" stroke="#84846c" stroke-width="1.2"/>
<text x="116.5" y="1386.4" font-size="9.80" fill="#2e2e2e" font-weight="bold" textLength="20.6" lengthAdjust="spacingAndGlyphs">20%</text>
<rect x="203.9" y="1330" width="149.6" height="60.6" rx="4" fill="url(#sb)"/>
<rect x="210.5" y="1336.8" width="138.4" height="34" rx="3.5" fill="#c3c588" stroke="#84846c" stroke-width="1.2"/>
<text x="268.6" y="1386.4" font-size="9.80" fill="#2e2e2e" font-weight="bold" textLength="20.6" lengthAdjust="spacingAndGlyphs">40%</text>
<rect x="355.9" y="1330" width="149.6" height="60.6" rx="4" fill="url(#sb)"/>
<rect x="362.5" y="1336.8" width="138.4" height="34" rx="3.5" fill="#c4c56c" stroke="#84846c" stroke-width="1.2"/>
<text x="420.6" y="1386.4" font-size="9.80" fill="#2e2e2e" font-weight="bold" textLength="20.6" lengthAdjust="spacingAndGlyphs">60%</text>
<rect x="508.0" y="1330" width="149.6" height="60.6" rx="4" fill="url(#sb)"/>
<rect x="514.6" y="1336.8" width="138.4" height="34" rx="3.5" fill="#c5c650" stroke="#84846c" stroke-width="1.2"/>
<text x="572.7" y="1386.4" font-size="9.80" fill="#2e2e2e" font-weight="bold" textLength="20.6" lengthAdjust="spacingAndGlyphs">80%</text>
<rect x="660.0" y="1330" width="149.6" height="62" rx="4" fill="url(#selb)"/>
<rect x="666.6" y="1336.8" width="138.4" height="34" rx="3.5" fill="#c8c800" stroke="#55551a" stroke-width="1.2"/>
<text x="721.8" y="1386.4" font-size="9.80" fill="#fff" font-weight="bold" textLength="26.4" lengthAdjust="spacingAndGlyphs">100%</text>
<path d="M2237.5 1392V1334a4 4 0 0 1 4-4h39.5a4 4 0 0 1 4 4V1392Z" fill="url(#nb)"/>
<path d="M2237.5 1348.4h47.5" stroke="#5e5e5e" stroke-width="1"/><path d="M2237.5 1349.4h47.5" stroke="#b4b4b4" stroke-width="1"/>
<ellipse cx="2261" cy="1338.6" rx="7.5" ry="5.4" fill="#6c6c6c" opacity="0.6"/><path d="M2256.8 1341h8.6l-4.3-4.8z" fill="#222"/>
<rect x="2246.6" y="1355.8" width="28" height="28" rx="3" fill="#a8a8a8" stroke="#1c1c1c" stroke-width="2"/><rect x="2254.2" y="1363.2" width="13.4" height="13.4" fill="#050505"/>
<rect x="2286.2" y="1330" width="46.0" height="29.6" fill="url(#nb)"/>
<circle cx="2309.2" cy="1344.5" r="9.8" fill="url(#ic)"/>
<rect x="2332.8" y="1330" width="44.6" height="29.6" fill="url(#nb)"/>
<circle cx="2355.3" cy="1344.5" r="9.8" fill="url(#ic)"/>
<rect x="2378.0" y="1330" width="44.6" height="29.6" fill="url(#nb)"/>
<circle cx="2400.5" cy="1344.5" r="9.8" fill="url(#ic)"/>
<rect x="2422.8" y="1330" width="44.6" height="29.6" fill="url(#nb)"/>
<circle cx="2445.3" cy="1344.5" r="9.8" fill="url(#ic)"/>
<rect x="2467.8" y="1330" width="44.6" height="29.6" fill="url(#nb)"/>
<circle cx="2490.3" cy="1344.5" r="9.8" fill="url(#ic)"/>
<rect x="2304.8" y="1340.8" width="8" height="8" fill="#3a3a3a"/>
<path d="M2352.2 1339.8v10.6l8.6-5.3z" fill="#3a3a3a"/>
<text x="2393.9" y="1348.6" font-size="11.00" fill="#3a3a3a" font-weight="bold" textLength="13.0" lengthAdjust="spacingAndGlyphs">[··]</text>
<text x="2438.6" y="1349.0" font-size="14.00" fill="#3a3a3a" font-weight="bold" textLength="13.6" lengthAdjust="spacingAndGlyphs">∞</text>
<path d="M2484.6 1343.6a5.6 5.6 0 0 1 10-2.4M2495.8 1346a5.6 5.6 0 0 1-10 2.4" fill="none" stroke="#3a3a3a" stroke-width="2"/><path d="M2496.6 1338v4.6h-4.6zM2483.8 1351.8v-4.6h4.6z" fill="#3a3a3a"/>
<circle cx="2535.5" cy="1344.4" r="10" fill="#2c2c2c" opacity="0.75"/>
<path d="M2286.2 1392V1365a4 4 0 0 1 4-4H2422.4V1392Z" fill="url(#nb)"/>
<path d="M2423.4 1392V1361H2554a4 4 0 0 1 4 4V1392Z" fill="url(#nb)"/>
<circle cx="2316.6" cy="1376" r="9.6" fill="url(#ic)"/><circle cx="2530.6" cy="1376" r="9.6" fill="url(#ic)"/>
<text x="2311.8" y="1381.4" font-size="17.00" fill="#4a4a4a" textLength="9.6" lengthAdjust="spacingAndGlyphs">«</text>
<text x="2526.0" y="1381.4" font-size="17.00" fill="#4a4a4a" textLength="9.6" lengthAdjust="spacingAndGlyphs">»</text>
<text x="2343.4" y="1384.6" font-size="24.00" fill="#3c3c3c" textLength="50.6" lengthAdjust="spacingAndGlyphs">Back</text>
<text x="2450.4" y="1384.6" font-size="24.00" fill="#3c3c3c" textLength="52.0" lengthAdjust="spacingAndGlyphs">Next</text>
</svg>
</body></html>
